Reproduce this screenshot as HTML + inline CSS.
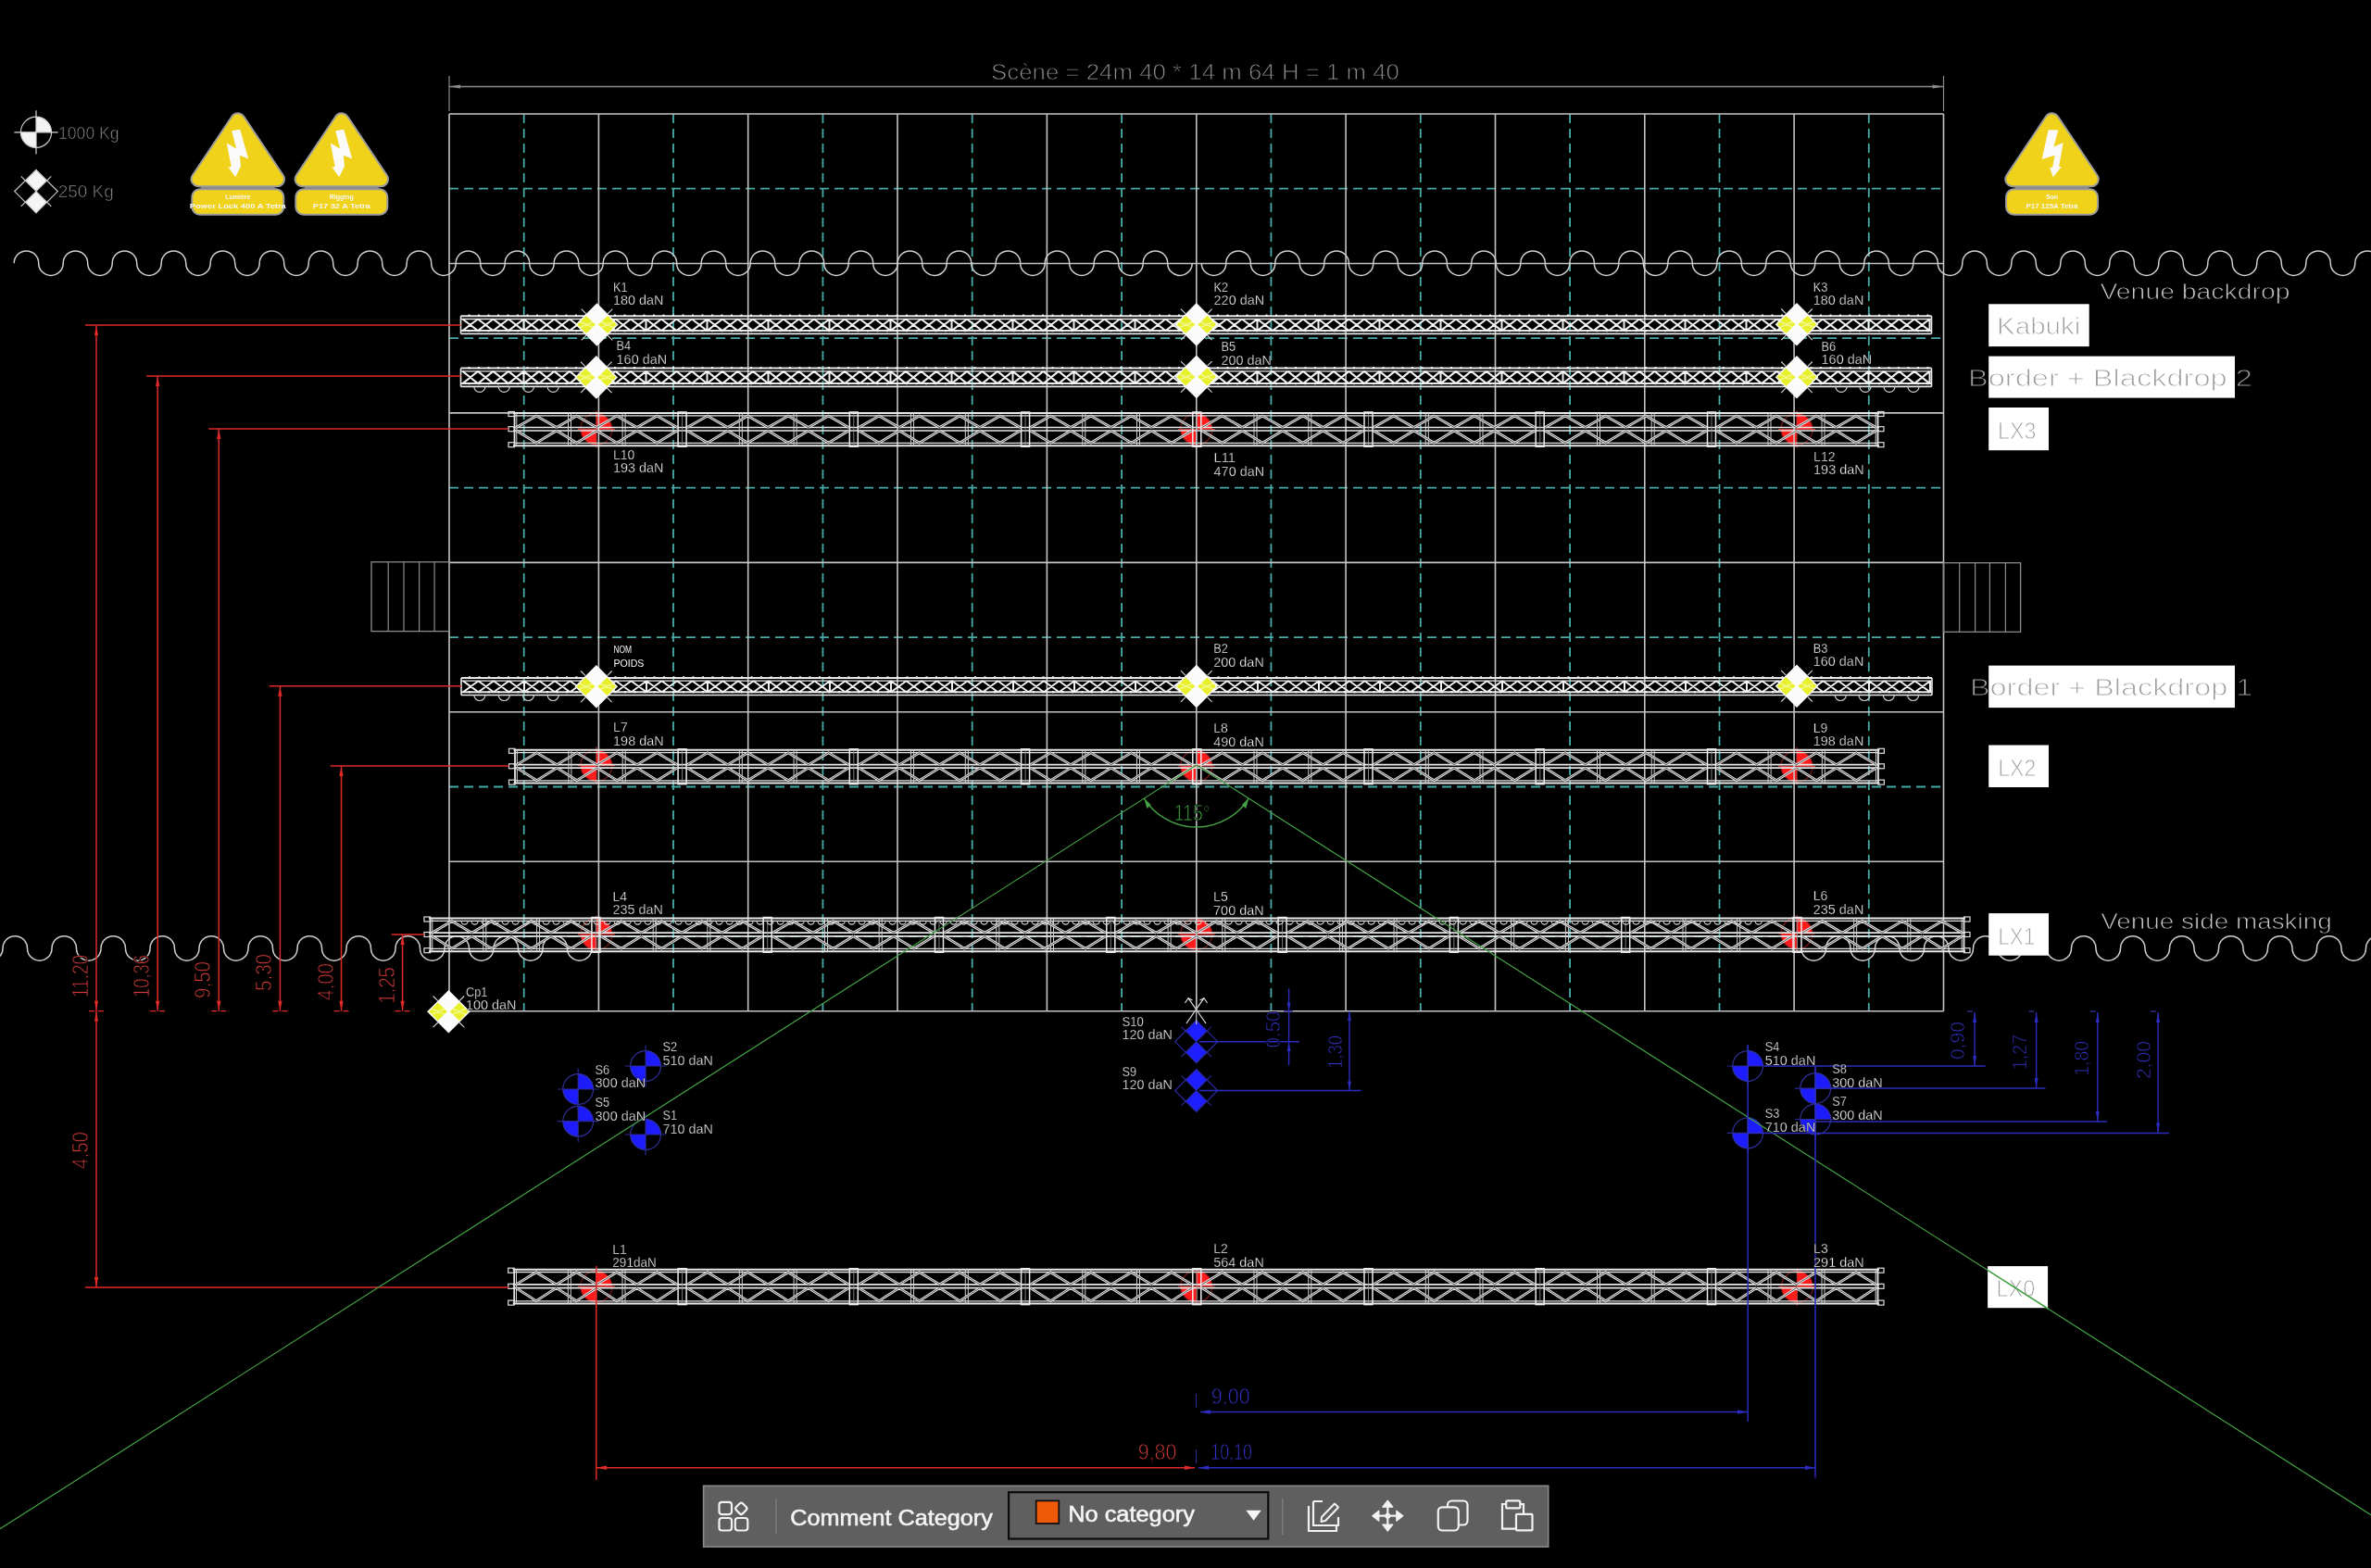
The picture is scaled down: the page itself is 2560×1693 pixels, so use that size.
<!DOCTYPE html>
<html><head><meta charset="utf-8"><title>Rigging plot</title>
<style>
html,body{margin:0;padding:0;background:#000;width:2560px;height:1693px;overflow:hidden}
svg{display:block;position:absolute;left:0;top:0;will-change:transform}
text{font-family:"Liberation Sans",sans-serif}
</style></head>
<body>
<svg width="2560" height="1693" viewBox="0 0 2560 1693">
<defs><clipPath id="ci1"><rect x="2147.2" y="384.6" width="265.8" height="45"/></clipPath><clipPath id="cl1"><rect x="0" y="364.6" width="2147.2" height="85"/><rect x="2413" y="364.6" width="400" height="85"/></clipPath><clipPath id="ci3"><rect x="2147.2" y="718.6" width="265.8" height="45.5"/></clipPath><clipPath id="cl3"><rect x="0" y="698.6" width="2147.2" height="85.5"/><rect x="2413" y="698.6" width="400" height="85.5"/></clipPath></defs>
<rect width="2560" height="1693" fill="#000"/>
<path d="M39,142.8 L39,126.2 A16.6,16.6 0 0 1 55.6,142.8 Z" stroke="none" stroke-width="0" fill="#f2f2f2"/>
<path d="M39,142.8 L39,159.3 A16.6,16.6 0 0 1 22.4,142.8 Z" stroke="none" stroke-width="0" fill="#f2f2f2"/>
<circle cx="39" cy="142.8" r="16.6" fill="none" stroke="#d0d0d0" stroke-width="1.2"/>
<line x1="15.4" y1="142.8" x2="62.6" y2="142.8" stroke="#d8d8d8" stroke-width="1.2"/>
<line x1="39" y1="119.2" x2="39" y2="166.3" stroke="#d8d8d8" stroke-width="1.2"/>
<polygon points="39,183.3 50.6,194.9 39,206.6 27.4,194.9" fill="#f4f4f4" stroke="none" stroke-width="0"/>
<polygon points="39,229.9 50.6,218.2 39,206.6 27.4,218.2" fill="#f4f4f4" stroke="none" stroke-width="0"/>
<polygon points="15.7,206.6 27.4,194.9 39,206.6 27.4,218.2" fill="#000" stroke="none" stroke-width="0"/>
<polygon points="62.3,206.6 50.6,194.9 39,206.6 50.6,218.2" fill="#000" stroke="none" stroke-width="0"/>
<polygon points="39,183.3 62.3,206.6 39,229.9 15.7,206.6" fill="none" stroke="#c8c8c8" stroke-width="1.2"/>
<line x1="22.7" y1="190.3" x2="55.3" y2="222.9" stroke="#cfcfcf" stroke-width="1.1"/>
<line x1="22.7" y1="222.9" x2="55.3" y2="190.3" stroke="#cfcfcf" stroke-width="1.1"/>
<text x="63" y="149.8" font-size="18" fill="#8a8a8a" text-anchor="start" font-family="Liberation Sans" textLength="65.6" lengthAdjust="spacingAndGlyphs" stroke="#000" stroke-width="0.6">1000 Kg</text>
<text x="62.7" y="212.8" font-size="18" fill="#8a8a8a" text-anchor="start" font-family="Liberation Sans" textLength="60.1" lengthAdjust="spacingAndGlyphs" stroke="#000" stroke-width="0.6">250 Kg</text>
<path d="M643.9,463.4 L643.9,446.4 A17,17 0 0 1 660.9,463.4 Z" stroke="none" stroke-width="0" fill="#ff1c1c"/>
<path d="M643.9,463.4 L643.9,480.4 A17,17 0 0 1 626.9,463.4 Z" stroke="none" stroke-width="0" fill="#ff1c1c"/>
<circle cx="643.9" cy="463.4" r="17" fill="none" stroke="#7a1818" stroke-width="1.2"/>
<line x1="623.9" y1="463.4" x2="663.9" y2="463.4" stroke="#c03030" stroke-width="1.2"/>
<line x1="643.9" y1="443.4" x2="643.9" y2="483.4" stroke="#c03030" stroke-width="1.2"/>
<path d="M1291.8,463.5 L1291.8,446.5 A17,17 0 0 1 1308.8,463.5 Z" stroke="none" stroke-width="0" fill="#ff1c1c"/>
<path d="M1291.8,463.5 L1291.8,480.5 A17,17 0 0 1 1274.8,463.5 Z" stroke="none" stroke-width="0" fill="#ff1c1c"/>
<circle cx="1291.8" cy="463.5" r="17" fill="none" stroke="#7a1818" stroke-width="1.2"/>
<line x1="1271.8" y1="463.5" x2="1311.8" y2="463.5" stroke="#c03030" stroke-width="1.2"/>
<line x1="1291.8" y1="443.5" x2="1291.8" y2="483.5" stroke="#c03030" stroke-width="1.2"/>
<path d="M1940,463.5 L1940,446.5 A17,17 0 0 1 1957,463.5 Z" stroke="none" stroke-width="0" fill="#ff1c1c"/>
<path d="M1940,463.5 L1940,480.5 A17,17 0 0 1 1923,463.5 Z" stroke="none" stroke-width="0" fill="#ff1c1c"/>
<circle cx="1940" cy="463.5" r="17" fill="none" stroke="#7a1818" stroke-width="1.2"/>
<line x1="1920" y1="463.5" x2="1960" y2="463.5" stroke="#c03030" stroke-width="1.2"/>
<line x1="1940" y1="443.5" x2="1940" y2="483.5" stroke="#c03030" stroke-width="1.2"/>
<path d="M643.9,826.6 L643.9,809.6 A17,17 0 0 1 660.9,826.6 Z" stroke="none" stroke-width="0" fill="#ff1c1c"/>
<path d="M643.9,826.6 L643.9,843.6 A17,17 0 0 1 626.9,826.6 Z" stroke="none" stroke-width="0" fill="#ff1c1c"/>
<circle cx="643.9" cy="826.6" r="17" fill="none" stroke="#7a1818" stroke-width="1.2"/>
<line x1="623.9" y1="826.6" x2="663.9" y2="826.6" stroke="#c03030" stroke-width="1.2"/>
<line x1="643.9" y1="806.6" x2="643.9" y2="846.6" stroke="#c03030" stroke-width="1.2"/>
<path d="M1291.8,827 L1291.8,810 A17,17 0 0 1 1308.8,827 Z" stroke="none" stroke-width="0" fill="#ff1c1c"/>
<path d="M1291.8,827 L1291.8,844 A17,17 0 0 1 1274.8,827 Z" stroke="none" stroke-width="0" fill="#ff1c1c"/>
<circle cx="1291.8" cy="827" r="17" fill="none" stroke="#7a1818" stroke-width="1.2"/>
<line x1="1271.8" y1="827" x2="1311.8" y2="827" stroke="#c03030" stroke-width="1.2"/>
<line x1="1291.8" y1="807" x2="1291.8" y2="847" stroke="#c03030" stroke-width="1.2"/>
<path d="M1940,827.3 L1940,810.3 A17,17 0 0 1 1957,827.3 Z" stroke="none" stroke-width="0" fill="#ff1c1c"/>
<path d="M1940,827.3 L1940,844.3 A17,17 0 0 1 1923,827.3 Z" stroke="none" stroke-width="0" fill="#ff1c1c"/>
<circle cx="1940" cy="827.3" r="17" fill="none" stroke="#7a1818" stroke-width="1.2"/>
<line x1="1920" y1="827.3" x2="1960" y2="827.3" stroke="#c03030" stroke-width="1.2"/>
<line x1="1940" y1="807.3" x2="1940" y2="847.3" stroke="#c03030" stroke-width="1.2"/>
<path d="M643.9,1008.8 L643.9,991.8 A17,17 0 0 1 660.9,1008.8 Z" stroke="none" stroke-width="0" fill="#ff1c1c"/>
<path d="M643.9,1008.8 L643.9,1025.8 A17,17 0 0 1 626.9,1008.8 Z" stroke="none" stroke-width="0" fill="#ff1c1c"/>
<circle cx="643.9" cy="1008.8" r="17" fill="none" stroke="#7a1818" stroke-width="1.2"/>
<line x1="623.9" y1="1008.8" x2="663.9" y2="1008.8" stroke="#c03030" stroke-width="1.2"/>
<line x1="643.9" y1="988.8" x2="643.9" y2="1028.8" stroke="#c03030" stroke-width="1.2"/>
<path d="M1291.7,1008.8 L1291.7,991.8 A17,17 0 0 1 1308.7,1008.8 Z" stroke="none" stroke-width="0" fill="#ff1c1c"/>
<path d="M1291.7,1008.8 L1291.7,1025.8 A17,17 0 0 1 1274.7,1008.8 Z" stroke="none" stroke-width="0" fill="#ff1c1c"/>
<circle cx="1291.7" cy="1008.8" r="17" fill="none" stroke="#7a1818" stroke-width="1.2"/>
<line x1="1271.7" y1="1008.8" x2="1311.7" y2="1008.8" stroke="#c03030" stroke-width="1.2"/>
<line x1="1291.7" y1="988.8" x2="1291.7" y2="1028.8" stroke="#c03030" stroke-width="1.2"/>
<path d="M1940,1008 L1940,991 A17,17 0 0 1 1957,1008 Z" stroke="none" stroke-width="0" fill="#ff1c1c"/>
<path d="M1940,1008 L1940,1025 A17,17 0 0 1 1923,1008 Z" stroke="none" stroke-width="0" fill="#ff1c1c"/>
<circle cx="1940" cy="1008" r="17" fill="none" stroke="#7a1818" stroke-width="1.2"/>
<line x1="1920" y1="1008" x2="1960" y2="1008" stroke="#c03030" stroke-width="1.2"/>
<line x1="1940" y1="988" x2="1940" y2="1028" stroke="#c03030" stroke-width="1.2"/>
<path d="M643.8,1389.2 L643.8,1372.2 A17,17 0 0 1 660.8,1389.2 Z" stroke="none" stroke-width="0" fill="#ff1c1c"/>
<path d="M643.8,1389.2 L643.8,1406.2 A17,17 0 0 1 626.8,1389.2 Z" stroke="none" stroke-width="0" fill="#ff1c1c"/>
<circle cx="643.8" cy="1389.2" r="17" fill="none" stroke="#7a1818" stroke-width="1.2"/>
<line x1="623.8" y1="1389.2" x2="663.8" y2="1389.2" stroke="#c03030" stroke-width="1.2"/>
<line x1="643.8" y1="1369.2" x2="643.8" y2="1409.2" stroke="#c03030" stroke-width="1.2"/>
<path d="M1291.8,1389 L1291.8,1372 A17,17 0 0 1 1308.8,1389 Z" stroke="none" stroke-width="0" fill="#ff1c1c"/>
<path d="M1291.8,1389 L1291.8,1406 A17,17 0 0 1 1274.8,1389 Z" stroke="none" stroke-width="0" fill="#ff1c1c"/>
<circle cx="1291.8" cy="1389" r="17" fill="none" stroke="#7a1818" stroke-width="1.2"/>
<line x1="1271.8" y1="1389" x2="1311.8" y2="1389" stroke="#c03030" stroke-width="1.2"/>
<line x1="1291.8" y1="1369" x2="1291.8" y2="1409" stroke="#c03030" stroke-width="1.2"/>
<path d="M1940.4,1389.4 L1940.4,1372.4 A17,17 0 0 1 1957.4,1389.4 Z" stroke="none" stroke-width="0" fill="#ff1c1c"/>
<path d="M1940.4,1389.4 L1940.4,1406.4 A17,17 0 0 1 1923.4,1389.4 Z" stroke="none" stroke-width="0" fill="#ff1c1c"/>
<circle cx="1940.4" cy="1389.4" r="17" fill="none" stroke="#7a1818" stroke-width="1.2"/>
<line x1="1920.4" y1="1389.4" x2="1960.4" y2="1389.4" stroke="#c03030" stroke-width="1.2"/>
<line x1="1940.4" y1="1369.4" x2="1940.4" y2="1409.4" stroke="#c03030" stroke-width="1.2"/>
<path d="M697.1,1151 L697.1,1134.6 A16.4,16.4 0 0 1 713.5,1151 Z" stroke="none" stroke-width="0" fill="#1c1cff"/>
<path d="M697.1,1151 L697.1,1167.4 A16.4,16.4 0 0 1 680.7,1151 Z" stroke="none" stroke-width="0" fill="#1c1cff"/>
<circle cx="697.1" cy="1151" r="16.4" fill="none" stroke="#30309c" stroke-width="1.2"/>
<line x1="674.7" y1="1151" x2="719.5" y2="1151" stroke="#2a2a96" stroke-width="1.2"/>
<line x1="697.1" y1="1128.6" x2="697.1" y2="1173.4" stroke="#2a2a96" stroke-width="1.2"/>
<path d="M624.2,1176 L624.2,1159.6 A16.4,16.4 0 0 1 640.6,1176 Z" stroke="none" stroke-width="0" fill="#1c1cff"/>
<path d="M624.2,1176 L624.2,1192.4 A16.4,16.4 0 0 1 607.8,1176 Z" stroke="none" stroke-width="0" fill="#1c1cff"/>
<circle cx="624.2" cy="1176" r="16.4" fill="none" stroke="#30309c" stroke-width="1.2"/>
<line x1="601.8" y1="1176" x2="646.6" y2="1176" stroke="#2a2a96" stroke-width="1.2"/>
<line x1="624.2" y1="1153.6" x2="624.2" y2="1198.4" stroke="#2a2a96" stroke-width="1.2"/>
<path d="M624.2,1210.7 L624.2,1194.3 A16.4,16.4 0 0 1 640.6,1210.7 Z" stroke="none" stroke-width="0" fill="#1c1cff"/>
<path d="M624.2,1210.7 L624.2,1227.1 A16.4,16.4 0 0 1 607.8,1210.7 Z" stroke="none" stroke-width="0" fill="#1c1cff"/>
<circle cx="624.2" cy="1210.7" r="16.4" fill="none" stroke="#30309c" stroke-width="1.2"/>
<line x1="601.8" y1="1210.7" x2="646.6" y2="1210.7" stroke="#2a2a96" stroke-width="1.2"/>
<line x1="624.2" y1="1188.3" x2="624.2" y2="1233.1" stroke="#2a2a96" stroke-width="1.2"/>
<path d="M697.1,1225 L697.1,1208.6 A16.4,16.4 0 0 1 713.5,1225 Z" stroke="none" stroke-width="0" fill="#1c1cff"/>
<path d="M697.1,1225 L697.1,1241.4 A16.4,16.4 0 0 1 680.7,1225 Z" stroke="none" stroke-width="0" fill="#1c1cff"/>
<circle cx="697.1" cy="1225" r="16.4" fill="none" stroke="#30309c" stroke-width="1.2"/>
<line x1="674.7" y1="1225" x2="719.5" y2="1225" stroke="#2a2a96" stroke-width="1.2"/>
<line x1="697.1" y1="1202.6" x2="697.1" y2="1247.4" stroke="#2a2a96" stroke-width="1.2"/>
<path d="M1887.1,1151 L1887.1,1134.6 A16.4,16.4 0 0 1 1903.5,1151 Z" stroke="none" stroke-width="0" fill="#1c1cff"/>
<path d="M1887.1,1151 L1887.1,1167.4 A16.4,16.4 0 0 1 1870.7,1151 Z" stroke="none" stroke-width="0" fill="#1c1cff"/>
<circle cx="1887.1" cy="1151" r="16.4" fill="none" stroke="#30309c" stroke-width="1.2"/>
<line x1="1864.7" y1="1151" x2="1909.5" y2="1151" stroke="#2a2a96" stroke-width="1.2"/>
<line x1="1887.1" y1="1128.6" x2="1887.1" y2="1173.4" stroke="#2a2a96" stroke-width="1.2"/>
<path d="M1960.2,1175.1 L1960.2,1158.7 A16.4,16.4 0 0 1 1976.6,1175.1 Z" stroke="none" stroke-width="0" fill="#1c1cff"/>
<path d="M1960.2,1175.1 L1960.2,1191.5 A16.4,16.4 0 0 1 1943.8,1175.1 Z" stroke="none" stroke-width="0" fill="#1c1cff"/>
<circle cx="1960.2" cy="1175.1" r="16.4" fill="none" stroke="#30309c" stroke-width="1.2"/>
<line x1="1937.8" y1="1175.1" x2="1982.6" y2="1175.1" stroke="#2a2a96" stroke-width="1.2"/>
<line x1="1960.2" y1="1152.7" x2="1960.2" y2="1197.5" stroke="#2a2a96" stroke-width="1.2"/>
<path d="M1960.2,1208.5 L1960.2,1192.1 A16.4,16.4 0 0 1 1976.6,1208.5 Z" stroke="none" stroke-width="0" fill="#1c1cff"/>
<path d="M1960.2,1208.5 L1960.2,1224.9 A16.4,16.4 0 0 1 1943.8,1208.5 Z" stroke="none" stroke-width="0" fill="#1c1cff"/>
<circle cx="1960.2" cy="1208.5" r="16.4" fill="none" stroke="#30309c" stroke-width="1.2"/>
<line x1="1937.8" y1="1208.5" x2="1982.6" y2="1208.5" stroke="#2a2a96" stroke-width="1.2"/>
<line x1="1960.2" y1="1186.1" x2="1960.2" y2="1230.9" stroke="#2a2a96" stroke-width="1.2"/>
<path d="M1887.1,1223.4 L1887.1,1207 A16.4,16.4 0 0 1 1903.5,1223.4 Z" stroke="none" stroke-width="0" fill="#1c1cff"/>
<path d="M1887.1,1223.4 L1887.1,1239.8 A16.4,16.4 0 0 1 1870.7,1223.4 Z" stroke="none" stroke-width="0" fill="#1c1cff"/>
<circle cx="1887.1" cy="1223.4" r="16.4" fill="none" stroke="#30309c" stroke-width="1.2"/>
<line x1="1864.7" y1="1223.4" x2="1909.5" y2="1223.4" stroke="#2a2a96" stroke-width="1.2"/>
<line x1="1887.1" y1="1201" x2="1887.1" y2="1245.8" stroke="#2a2a96" stroke-width="1.2"/>
<polygon points="1291.7,1101.7 1303.2,1113.2 1291.7,1124.7 1280.2,1113.2" fill="#1e1eff" stroke="none" stroke-width="0"/>
<polygon points="1291.7,1147.7 1303.2,1136.2 1291.7,1124.7 1280.2,1136.2" fill="#1e1eff" stroke="none" stroke-width="0"/>
<polygon points="1268.7,1124.7 1280.2,1113.2 1291.7,1124.7 1280.2,1136.2" fill="#000" stroke="none" stroke-width="0"/>
<polygon points="1314.7,1124.7 1303.2,1113.2 1291.7,1124.7 1303.2,1136.2" fill="#000" stroke="none" stroke-width="0"/>
<polygon points="1291.7,1101.7 1314.7,1124.7 1291.7,1147.7 1268.7,1124.7" fill="none" stroke="#2a2aa0" stroke-width="1.2"/>
<line x1="1275.6" y1="1108.6" x2="1307.8" y2="1140.8" stroke="#2a2aa0" stroke-width="1.1"/>
<line x1="1275.6" y1="1140.8" x2="1307.8" y2="1108.6" stroke="#2a2aa0" stroke-width="1.1"/>
<polygon points="1291.7,1154.5 1303.2,1166 1291.7,1177.5 1280.2,1166" fill="#1e1eff" stroke="none" stroke-width="0"/>
<polygon points="1291.7,1200.5 1303.2,1189 1291.7,1177.5 1280.2,1189" fill="#1e1eff" stroke="none" stroke-width="0"/>
<polygon points="1268.7,1177.5 1280.2,1166 1291.7,1177.5 1280.2,1189" fill="#000" stroke="none" stroke-width="0"/>
<polygon points="1314.7,1177.5 1303.2,1166 1291.7,1177.5 1303.2,1189" fill="#000" stroke="none" stroke-width="0"/>
<polygon points="1291.7,1154.5 1314.7,1177.5 1291.7,1200.5 1268.7,1177.5" fill="none" stroke="#2a2aa0" stroke-width="1.2"/>
<line x1="1275.6" y1="1161.4" x2="1307.8" y2="1193.6" stroke="#2a2aa0" stroke-width="1.1"/>
<line x1="1275.6" y1="1193.6" x2="1307.8" y2="1161.4" stroke="#2a2aa0" stroke-width="1.1"/>
<line x1="1281" y1="1105" x2="1300" y2="1077.7" stroke="#e0e0e0" stroke-width="1.2"/>
<line x1="1302" y1="1105" x2="1283" y2="1077.7" stroke="#e0e0e0" stroke-width="1.2"/>
<path d="M1295.5,1080 L1300,1077.7 L1303.5,1083 M1279.5,1083 L1283,1077.7 L1287.5,1080" stroke="#e0e0e0" stroke-width="1.1" fill="none"/>
<line x1="565.7" y1="123" x2="565.7" y2="1091.7" stroke="#47aaa6" stroke-width="1.8" stroke-dasharray="10 6"/>
<line x1="727" y1="123" x2="727" y2="1091.7" stroke="#47aaa6" stroke-width="1.8" stroke-dasharray="10 6"/>
<line x1="888.4" y1="123" x2="888.4" y2="1091.7" stroke="#47aaa6" stroke-width="1.8" stroke-dasharray="10 6"/>
<line x1="1049.7" y1="123" x2="1049.7" y2="1091.7" stroke="#47aaa6" stroke-width="1.8" stroke-dasharray="10 6"/>
<line x1="1211.1" y1="123" x2="1211.1" y2="1091.7" stroke="#47aaa6" stroke-width="1.8" stroke-dasharray="10 6"/>
<line x1="1372.4" y1="123" x2="1372.4" y2="1091.7" stroke="#47aaa6" stroke-width="1.8" stroke-dasharray="10 6"/>
<line x1="1533.8" y1="123" x2="1533.8" y2="1091.7" stroke="#47aaa6" stroke-width="1.8" stroke-dasharray="10 6"/>
<line x1="1695.1" y1="123" x2="1695.1" y2="1091.7" stroke="#47aaa6" stroke-width="1.8" stroke-dasharray="10 6"/>
<line x1="1856.5" y1="123" x2="1856.5" y2="1091.7" stroke="#47aaa6" stroke-width="1.8" stroke-dasharray="10 6"/>
<line x1="2017.8" y1="123" x2="2017.8" y2="1091.7" stroke="#47aaa6" stroke-width="1.8" stroke-dasharray="10 6"/>
<line x1="485" y1="203.7" x2="2098.5" y2="203.7" stroke="#47aaa6" stroke-width="1.8" stroke-dasharray="10 6"/>
<line x1="485" y1="365.2" x2="2098.5" y2="365.2" stroke="#47aaa6" stroke-width="1.8" stroke-dasharray="10 6"/>
<line x1="485" y1="526.6" x2="2098.5" y2="526.6" stroke="#47aaa6" stroke-width="1.8" stroke-dasharray="10 6"/>
<line x1="485" y1="688.1" x2="2098.5" y2="688.1" stroke="#47aaa6" stroke-width="1.8" stroke-dasharray="10 6"/>
<line x1="485" y1="849.5" x2="2098.5" y2="849.5" stroke="#47aaa6" stroke-width="1.8" stroke-dasharray="10 6"/>
<line x1="485" y1="1011" x2="2098.5" y2="1011" stroke="#47aaa6" stroke-width="1.8" stroke-dasharray="10 6"/>
<line x1="485" y1="123" x2="485" y2="1091.7" stroke="#c4c4c4" stroke-width="1.6"/>
<line x1="646.4" y1="123" x2="646.4" y2="1091.7" stroke="#c4c4c4" stroke-width="1.6"/>
<line x1="807.7" y1="123" x2="807.7" y2="1091.7" stroke="#c4c4c4" stroke-width="1.6"/>
<line x1="969" y1="123" x2="969" y2="1091.7" stroke="#c4c4c4" stroke-width="1.6"/>
<line x1="1130.4" y1="123" x2="1130.4" y2="1091.7" stroke="#c4c4c4" stroke-width="1.6"/>
<line x1="1291.8" y1="123" x2="1291.8" y2="1091.7" stroke="#c4c4c4" stroke-width="1.6"/>
<line x1="1453.1" y1="123" x2="1453.1" y2="1091.7" stroke="#c4c4c4" stroke-width="1.6"/>
<line x1="1614.5" y1="123" x2="1614.5" y2="1091.7" stroke="#c4c4c4" stroke-width="1.6"/>
<line x1="1775.8" y1="123" x2="1775.8" y2="1091.7" stroke="#c4c4c4" stroke-width="1.6"/>
<line x1="1937.1" y1="123" x2="1937.1" y2="1091.7" stroke="#c4c4c4" stroke-width="1.6"/>
<line x1="2098.5" y1="123" x2="2098.5" y2="1091.7" stroke="#c4c4c4" stroke-width="1.6"/>
<line x1="485" y1="123" x2="2098.5" y2="123" stroke="#c4c4c4" stroke-width="1.6"/>
<line x1="485" y1="284.5" x2="2098.5" y2="284.5" stroke="#c4c4c4" stroke-width="1.6"/>
<line x1="485" y1="445.9" x2="2098.5" y2="445.9" stroke="#c4c4c4" stroke-width="1.6"/>
<line x1="485" y1="607.4" x2="2098.5" y2="607.4" stroke="#c4c4c4" stroke-width="1.6"/>
<line x1="485" y1="768.8" x2="2098.5" y2="768.8" stroke="#c4c4c4" stroke-width="1.6"/>
<line x1="485" y1="930.3" x2="2098.5" y2="930.3" stroke="#c4c4c4" stroke-width="1.6"/>
<line x1="485" y1="1091.7" x2="2098.5" y2="1091.7" stroke="#c4c4c4" stroke-width="1.6"/>
<line x1="1291.7" y1="1091.7" x2="1291.7" y2="1106" stroke="#c4c4c4" stroke-width="1.2"/>
<line x1="485" y1="82" x2="485" y2="120" stroke="#8a8a8a" stroke-width="1.2"/>
<line x1="2098.5" y1="82" x2="2098.5" y2="120" stroke="#8a8a8a" stroke-width="1.2"/>
<line x1="485" y1="93.6" x2="2098.5" y2="93.6" stroke="#8a8a8a" stroke-width="1.5"/>
<polygon points="485,93.6 497,91.6 497,95.6" fill="#8a8a8a" stroke="none" stroke-width="0"/>
<polygon points="2098.5,93.6 2086.5,91.6 2086.5,95.6" fill="#8a8a8a" stroke="none" stroke-width="0"/>
<text x="1070" y="86.3" font-size="23.5" fill="#8c8c8c" text-anchor="start" font-family="Liberation Sans" textLength="441" lengthAdjust="spacingAndGlyphs" stroke="#000" stroke-width="0.8">Sc&#232;ne = 24m 40 * 14 m 64 H = 1 m 40</text>
<path d="M15.2,284.2 A13.2,13.2 0 0 1 41.7,284.2 A13.2,13.2 0 0 0 68.2,284.2 A13.2,13.2 0 0 1 94.7,284.2 A13.2,13.2 0 0 0 121.2,284.2 A13.2,13.2 0 0 1 147.7,284.2 A13.2,13.2 0 0 0 174.2,284.2 A13.2,13.2 0 0 1 200.7,284.2 A13.2,13.2 0 0 0 227.2,284.2 A13.2,13.2 0 0 1 253.7,284.2 A13.2,13.2 0 0 0 280.2,284.2 A13.2,13.2 0 0 1 306.7,284.2 A13.2,13.2 0 0 0 333.2,284.2 A13.2,13.2 0 0 1 359.7,284.2 A13.2,13.2 0 0 0 386.2,284.2 A13.2,13.2 0 0 1 412.7,284.2 A13.2,13.2 0 0 0 439.2,284.2 A13.2,13.2 0 0 1 465.7,284.2 A13.2,13.2 0 0 0 492.2,284.2 A13.2,13.2 0 0 1 518.7,284.2 A13.2,13.2 0 0 0 545.2,284.2 A13.2,13.2 0 0 1 571.7,284.2 A13.2,13.2 0 0 0 598.2,284.2 A13.2,13.2 0 0 1 624.7,284.2 A13.2,13.2 0 0 0 651.2,284.2 A13.2,13.2 0 0 1 677.7,284.2 A13.2,13.2 0 0 0 704.2,284.2 A13.2,13.2 0 0 1 730.7,284.2 A13.2,13.2 0 0 0 757.2,284.2 A13.2,13.2 0 0 1 783.7,284.2 A13.2,13.2 0 0 0 810.2,284.2 A13.2,13.2 0 0 1 836.7,284.2 A13.2,13.2 0 0 0 863.2,284.2 A13.2,13.2 0 0 1 889.7,284.2 A13.2,13.2 0 0 0 916.2,284.2 A13.2,13.2 0 0 1 942.7,284.2 A13.2,13.2 0 0 0 969.2,284.2 A13.2,13.2 0 0 1 995.7,284.2 A13.2,13.2 0 0 0 1022.2,284.2 A13.2,13.2 0 0 1 1048.7,284.2 A13.2,13.2 0 0 0 1075.2,284.2 A13.2,13.2 0 0 1 1101.7,284.2 A13.2,13.2 0 0 0 1128.2,284.2 A13.2,13.2 0 0 1 1154.7,284.2 A13.2,13.2 0 0 0 1181.2,284.2 A13.2,13.2 0 0 1 1207.7,284.2 A13.2,13.2 0 0 0 1234.2,284.2 A13.2,13.2 0 0 1 1260.7,284.2 A13.2,13.2 0 0 0 1287.2,284.2" stroke="#cfcfcf" stroke-width="1.5" fill="none"/>
<path d="M1297.3,284.2 A13.2,13.2 0 0 0 1323.8,284.2 A13.2,13.2 0 0 1 1350.3,284.2 A13.2,13.2 0 0 0 1376.8,284.2 A13.2,13.2 0 0 1 1403.3,284.2 A13.2,13.2 0 0 0 1429.8,284.2 A13.2,13.2 0 0 1 1456.3,284.2 A13.2,13.2 0 0 0 1482.8,284.2 A13.2,13.2 0 0 1 1509.3,284.2 A13.2,13.2 0 0 0 1535.8,284.2 A13.2,13.2 0 0 1 1562.3,284.2 A13.2,13.2 0 0 0 1588.8,284.2 A13.2,13.2 0 0 1 1615.3,284.2 A13.2,13.2 0 0 0 1641.8,284.2 A13.2,13.2 0 0 1 1668.3,284.2 A13.2,13.2 0 0 0 1694.8,284.2 A13.2,13.2 0 0 1 1721.3,284.2 A13.2,13.2 0 0 0 1747.8,284.2 A13.2,13.2 0 0 1 1774.3,284.2 A13.2,13.2 0 0 0 1800.8,284.2 A13.2,13.2 0 0 1 1827.3,284.2 A13.2,13.2 0 0 0 1853.8,284.2 A13.2,13.2 0 0 1 1880.3,284.2 A13.2,13.2 0 0 0 1906.8,284.2 A13.2,13.2 0 0 1 1933.3,284.2 A13.2,13.2 0 0 0 1959.8,284.2 A13.2,13.2 0 0 1 1986.3,284.2 A13.2,13.2 0 0 0 2012.8,284.2 A13.2,13.2 0 0 1 2039.3,284.2 A13.2,13.2 0 0 0 2065.8,284.2 A13.2,13.2 0 0 1 2092.3,284.2 A13.2,13.2 0 0 0 2118.8,284.2 A13.2,13.2 0 0 1 2145.3,284.2 A13.2,13.2 0 0 0 2171.8,284.2 A13.2,13.2 0 0 1 2198.3,284.2 A13.2,13.2 0 0 0 2224.8,284.2 A13.2,13.2 0 0 1 2251.3,284.2 A13.2,13.2 0 0 0 2277.8,284.2 A13.2,13.2 0 0 1 2304.3,284.2 A13.2,13.2 0 0 0 2330.8,284.2 A13.2,13.2 0 0 1 2357.3,284.2 A13.2,13.2 0 0 0 2383.8,284.2 A13.2,13.2 0 0 1 2410.3,284.2 A13.2,13.2 0 0 0 2436.8,284.2 A13.2,13.2 0 0 1 2463.3,284.2 A13.2,13.2 0 0 0 2489.8,284.2 A13.2,13.2 0 0 1 2516.3,284.2 A13.2,13.2 0 0 0 2542.8,284.2 A13.2,13.2 0 0 1 2569.3,284.2 A13.2,13.2 0 0 0 2595.8,284.2" stroke="#cfcfcf" stroke-width="1.5" fill="none"/>
<path d="M-23.5,1023.9 A13.2,13.2 0 0 0 3,1023.9 A13.2,13.2 0 0 1 29.5,1023.9 A13.2,13.2 0 0 0 56,1023.9 A13.2,13.2 0 0 1 82.5,1023.9 A13.2,13.2 0 0 0 109,1023.9 A13.2,13.2 0 0 1 135.5,1023.9 A13.2,13.2 0 0 0 162,1023.9 A13.2,13.2 0 0 1 188.5,1023.9 A13.2,13.2 0 0 0 215,1023.9 A13.2,13.2 0 0 1 241.5,1023.9 A13.2,13.2 0 0 0 268,1023.9 A13.2,13.2 0 0 1 294.5,1023.9 A13.2,13.2 0 0 0 321,1023.9 A13.2,13.2 0 0 1 347.5,1023.9 A13.2,13.2 0 0 0 374,1023.9 A13.2,13.2 0 0 1 400.5,1023.9 A13.2,13.2 0 0 0 427,1023.9 A13.2,13.2 0 0 1 453.5,1023.9 A13.2,13.2 0 0 0 480,1023.9 A13.2,13.2 0 0 1 506.5,1023.9 A13.2,13.2 0 0 0 533,1023.9 A13.2,13.2 0 0 1 559.5,1023.9 A13.2,13.2 0 0 0 586,1023.9 A13.2,13.2 0 0 1 612.5,1023.9 A13.2,13.2 0 0 0 639,1023.9" stroke="#cfcfcf" stroke-width="1.5" fill="none"/>
<path d="M1945,1023.9 A13.2,13.2 0 0 0 1971.5,1023.9 A13.2,13.2 0 0 1 1998,1023.9 A13.2,13.2 0 0 0 2024.5,1023.9 A13.2,13.2 0 0 1 2051,1023.9 A13.2,13.2 0 0 0 2077.5,1023.9 A13.2,13.2 0 0 1 2104,1023.9 A13.2,13.2 0 0 0 2130.5,1023.9 A13.2,13.2 0 0 1 2157,1023.9 A13.2,13.2 0 0 0 2183.5,1023.9 A13.2,13.2 0 0 1 2210,1023.9 A13.2,13.2 0 0 0 2236.5,1023.9 A13.2,13.2 0 0 1 2263,1023.9 A13.2,13.2 0 0 0 2289.5,1023.9 A13.2,13.2 0 0 1 2316,1023.9 A13.2,13.2 0 0 0 2342.5,1023.9 A13.2,13.2 0 0 1 2369,1023.9 A13.2,13.2 0 0 0 2395.5,1023.9 A13.2,13.2 0 0 1 2422,1023.9 A13.2,13.2 0 0 0 2448.5,1023.9 A13.2,13.2 0 0 1 2475,1023.9 A13.2,13.2 0 0 0 2501.5,1023.9 A13.2,13.2 0 0 1 2528,1023.9 A13.2,13.2 0 0 0 2554.5,1023.9 A13.2,13.2 0 0 1 2581,1023.9" stroke="#cfcfcf" stroke-width="1.5" fill="none"/>
<rect x="401" y="606.8" width="84" height="74.8" fill="none" stroke="#8a8a8a" stroke-width="1.3"/>
<line x1="419.2" y1="606.8" x2="419.2" y2="681.6" stroke="#8a8a8a" stroke-width="1.2"/>
<line x1="436" y1="606.8" x2="436" y2="681.6" stroke="#8a8a8a" stroke-width="1.2"/>
<line x1="452.6" y1="606.8" x2="452.6" y2="681.6" stroke="#8a8a8a" stroke-width="1.2"/>
<line x1="469.1" y1="606.8" x2="469.1" y2="681.6" stroke="#8a8a8a" stroke-width="1.2"/>
<rect x="2098.5" y="607.7" width="83.1" height="74.6" fill="none" stroke="#8a8a8a" stroke-width="1.3"/>
<line x1="2115.7" y1="607.7" x2="2115.7" y2="682.3" stroke="#8a8a8a" stroke-width="1.2"/>
<line x1="2132.6" y1="607.7" x2="2132.6" y2="682.3" stroke="#8a8a8a" stroke-width="1.2"/>
<line x1="2148.4" y1="607.7" x2="2148.4" y2="682.3" stroke="#8a8a8a" stroke-width="1.2"/>
<line x1="2165.4" y1="607.7" x2="2165.4" y2="682.3" stroke="#8a8a8a" stroke-width="1.2"/>
<line x1="497.5" y1="341.2" x2="2085.5" y2="341.2" stroke="#e8e8e8" stroke-width="2"/>
<line x1="497.5" y1="344.5" x2="2085.5" y2="344.5" stroke="#e8e8e8" stroke-width="1.3"/>
<line x1="497.5" y1="357.1" x2="2085.5" y2="357.1" stroke="#e8e8e8" stroke-width="2"/>
<line x1="497.5" y1="360.4" x2="2085.5" y2="360.4" stroke="#e8e8e8" stroke-width="1.6"/>
<line x1="497.5" y1="341.2" x2="497.5" y2="360.4" stroke="#e8e8e8" stroke-width="1.6"/>
<line x1="2085.5" y1="341.2" x2="2085.5" y2="360.4" stroke="#e8e8e8" stroke-width="1.6"/>
<path d="M499.5,344.5L516,357.1M499.5,357.1L516,344.5M516,344.5L532.5,357.1M516,357.1L532.5,344.5M532.5,344.5L549,357.1M532.5,357.1L549,344.5M549,344.5L565.5,357.1M549,357.1L565.5,344.5M565.5,344.5L565.5,357.1M565.5,344.5L582,357.1M565.5,357.1L582,344.5M582,344.5L598.5,357.1M582,357.1L598.5,344.5M598.5,344.5L615,357.1M598.5,357.1L615,344.5M615,344.5L631.5,357.1M615,357.1L631.5,344.5M631.5,344.5L631.5,357.1M631.5,344.5L648,357.1M631.5,357.1L648,344.5M648,344.5L664.5,357.1M648,357.1L664.5,344.5M664.5,344.5L681,357.1M664.5,357.1L681,344.5M681,344.5L697.5,357.1M681,357.1L697.5,344.5M697.5,344.5L697.5,357.1M697.5,344.5L714,357.1M697.5,357.1L714,344.5M714,344.5L730.5,357.1M714,357.1L730.5,344.5M730.5,344.5L747,357.1M730.5,357.1L747,344.5M747,344.5L763.5,357.1M747,357.1L763.5,344.5M763.5,344.5L763.5,357.1M763.5,344.5L780,357.1M763.5,357.1L780,344.5M780,344.5L796.5,357.1M780,357.1L796.5,344.5M796.5,344.5L813,357.1M796.5,357.1L813,344.5M813,344.5L829.5,357.1M813,357.1L829.5,344.5M829.5,344.5L829.5,357.1M829.5,344.5L846,357.1M829.5,357.1L846,344.5M846,344.5L862.5,357.1M846,357.1L862.5,344.5M862.5,344.5L879,357.1M862.5,357.1L879,344.5M879,344.5L895.5,357.1M879,357.1L895.5,344.5M895.5,344.5L895.5,357.1M895.5,344.5L912,357.1M895.5,357.1L912,344.5M912,344.5L928.5,357.1M912,357.1L928.5,344.5M928.5,344.5L945,357.1M928.5,357.1L945,344.5M945,344.5L961.5,357.1M945,357.1L961.5,344.5M961.5,344.5L961.5,357.1M961.5,344.5L978,357.1M961.5,357.1L978,344.5M978,344.5L994.5,357.1M978,357.1L994.5,344.5M994.5,344.5L1011,357.1M994.5,357.1L1011,344.5M1011,344.5L1027.5,357.1M1011,357.1L1027.5,344.5M1027.5,344.5L1027.5,357.1M1027.5,344.5L1044,357.1M1027.5,357.1L1044,344.5M1044,344.5L1060.5,357.1M1044,357.1L1060.5,344.5M1060.5,344.5L1077,357.1M1060.5,357.1L1077,344.5M1077,344.5L1093.5,357.1M1077,357.1L1093.5,344.5M1093.5,344.5L1093.5,357.1M1093.5,344.5L1110,357.1M1093.5,357.1L1110,344.5M1110,344.5L1126.5,357.1M1110,357.1L1126.5,344.5M1126.5,344.5L1143,357.1M1126.5,357.1L1143,344.5M1143,344.5L1159.5,357.1M1143,357.1L1159.5,344.5M1159.5,344.5L1159.5,357.1M1159.5,344.5L1176,357.1M1159.5,357.1L1176,344.5M1176,344.5L1192.5,357.1M1176,357.1L1192.5,344.5M1192.5,344.5L1209,357.1M1192.5,357.1L1209,344.5M1209,344.5L1225.5,357.1M1209,357.1L1225.5,344.5M1225.5,344.5L1225.5,357.1M1225.5,344.5L1242,357.1M1225.5,357.1L1242,344.5M1242,344.5L1258.5,357.1M1242,357.1L1258.5,344.5M1258.5,344.5L1275,357.1M1258.5,357.1L1275,344.5M1275,344.5L1291.5,357.1M1275,357.1L1291.5,344.5M1291.5,344.5L1291.5,357.1M1291.5,344.5L1308,357.1M1291.5,357.1L1308,344.5M1308,344.5L1324.5,357.1M1308,357.1L1324.5,344.5M1324.5,344.5L1341,357.1M1324.5,357.1L1341,344.5M1341,344.5L1357.5,357.1M1341,357.1L1357.5,344.5M1357.5,344.5L1357.5,357.1M1357.5,344.5L1374,357.1M1357.5,357.1L1374,344.5M1374,344.5L1390.5,357.1M1374,357.1L1390.5,344.5M1390.5,344.5L1407,357.1M1390.5,357.1L1407,344.5M1407,344.5L1423.5,357.1M1407,357.1L1423.5,344.5M1423.5,344.5L1423.5,357.1M1423.5,344.5L1440,357.1M1423.5,357.1L1440,344.5M1440,344.5L1456.5,357.1M1440,357.1L1456.5,344.5M1456.5,344.5L1473,357.1M1456.5,357.1L1473,344.5M1473,344.5L1489.5,357.1M1473,357.1L1489.5,344.5M1489.5,344.5L1489.5,357.1M1489.5,344.5L1506,357.1M1489.5,357.1L1506,344.5M1506,344.5L1522.5,357.1M1506,357.1L1522.5,344.5M1522.5,344.5L1539,357.1M1522.5,357.1L1539,344.5M1539,344.5L1555.5,357.1M1539,357.1L1555.5,344.5M1555.5,344.5L1555.5,357.1M1555.5,344.5L1572,357.1M1555.5,357.1L1572,344.5M1572,344.5L1588.5,357.1M1572,357.1L1588.5,344.5M1588.5,344.5L1605,357.1M1588.5,357.1L1605,344.5M1605,344.5L1621.5,357.1M1605,357.1L1621.5,344.5M1621.5,344.5L1621.5,357.1M1621.5,344.5L1638,357.1M1621.5,357.1L1638,344.5M1638,344.5L1654.5,357.1M1638,357.1L1654.5,344.5M1654.5,344.5L1671,357.1M1654.5,357.1L1671,344.5M1671,344.5L1687.5,357.1M1671,357.1L1687.5,344.5M1687.5,344.5L1687.5,357.1M1687.5,344.5L1704,357.1M1687.5,357.1L1704,344.5M1704,344.5L1720.5,357.1M1704,357.1L1720.5,344.5M1720.5,344.5L1737,357.1M1720.5,357.1L1737,344.5M1737,344.5L1753.5,357.1M1737,357.1L1753.5,344.5M1753.5,344.5L1753.5,357.1M1753.5,344.5L1770,357.1M1753.5,357.1L1770,344.5M1770,344.5L1786.5,357.1M1770,357.1L1786.5,344.5M1786.5,344.5L1803,357.1M1786.5,357.1L1803,344.5M1803,344.5L1819.5,357.1M1803,357.1L1819.5,344.5M1819.5,344.5L1819.5,357.1M1819.5,344.5L1836,357.1M1819.5,357.1L1836,344.5M1836,344.5L1852.5,357.1M1836,357.1L1852.5,344.5M1852.5,344.5L1869,357.1M1852.5,357.1L1869,344.5M1869,344.5L1885.5,357.1M1869,357.1L1885.5,344.5M1885.5,344.5L1885.5,357.1M1885.5,344.5L1902,357.1M1885.5,357.1L1902,344.5M1902,344.5L1918.5,357.1M1902,357.1L1918.5,344.5M1918.5,344.5L1935,357.1M1918.5,357.1L1935,344.5M1935,344.5L1951.5,357.1M1935,357.1L1951.5,344.5M1951.5,344.5L1951.5,357.1M1951.5,344.5L1968,357.1M1951.5,357.1L1968,344.5M1968,344.5L1984.5,357.1M1968,357.1L1984.5,344.5M1984.5,344.5L2001,357.1M1984.5,357.1L2001,344.5M2001,344.5L2017.5,357.1M2001,357.1L2017.5,344.5M2017.5,344.5L2017.5,357.1M2017.5,344.5L2034,357.1M2017.5,357.1L2034,344.5M2034,344.5L2050.5,357.1M2034,357.1L2050.5,344.5M2050.5,344.5L2067,357.1M2050.5,357.1L2067,344.5M2067,344.5L2083.5,357.1M2067,357.1L2083.5,344.5M2083.5,344.5L2083.5,357.1" stroke="#f2f2f2" stroke-width="2" fill="none"/>
<path d="M505.5,340.7h2M505.5,357.1h2M516,340.7h2M516,357.1h2M526.5,340.7h2M526.5,357.1h2M537,340.7h2M537,357.1h2M547.5,340.7h2M547.5,357.1h2M558,340.7h2M558,357.1h2M568.5,340.7h2M568.5,357.1h2M579,340.7h2M579,357.1h2M589.5,340.7h2M589.5,357.1h2M600,340.7h2M600,357.1h2M610.5,340.7h2M610.5,357.1h2M621,340.7h2M621,357.1h2M631.5,340.7h2M631.5,357.1h2M642,340.7h2M642,357.1h2M652.5,340.7h2M652.5,357.1h2M663,340.7h2M663,357.1h2M673.5,340.7h2M673.5,357.1h2M684,340.7h2M684,357.1h2M694.5,340.7h2M694.5,357.1h2M705,340.7h2M705,357.1h2M715.5,340.7h2M715.5,357.1h2M726,340.7h2M726,357.1h2M736.5,340.7h2M736.5,357.1h2M747,340.7h2M747,357.1h2M757.5,340.7h2M757.5,357.1h2M768,340.7h2M768,357.1h2M778.5,340.7h2M778.5,357.1h2M789,340.7h2M789,357.1h2M799.5,340.7h2M799.5,357.1h2M810,340.7h2M810,357.1h2M820.5,340.7h2M820.5,357.1h2M831,340.7h2M831,357.1h2M841.5,340.7h2M841.5,357.1h2M852,340.7h2M852,357.1h2M862.5,340.7h2M862.5,357.1h2M873,340.7h2M873,357.1h2M883.5,340.7h2M883.5,357.1h2M894,340.7h2M894,357.1h2M904.5,340.7h2M904.5,357.1h2M915,340.7h2M915,357.1h2M925.5,340.7h2M925.5,357.1h2M936,340.7h2M936,357.1h2M946.5,340.7h2M946.5,357.1h2M957,340.7h2M957,357.1h2M967.5,340.7h2M967.5,357.1h2M978,340.7h2M978,357.1h2M988.5,340.7h2M988.5,357.1h2M999,340.7h2M999,357.1h2M1009.5,340.7h2M1009.5,357.1h2M1020,340.7h2M1020,357.1h2M1030.5,340.7h2M1030.5,357.1h2M1041,340.7h2M1041,357.1h2M1051.5,340.7h2M1051.5,357.1h2M1062,340.7h2M1062,357.1h2M1072.5,340.7h2M1072.5,357.1h2M1083,340.7h2M1083,357.1h2M1093.5,340.7h2M1093.5,357.1h2M1104,340.7h2M1104,357.1h2M1114.5,340.7h2M1114.5,357.1h2M1125,340.7h2M1125,357.1h2M1135.5,340.7h2M1135.5,357.1h2M1146,340.7h2M1146,357.1h2M1156.5,340.7h2M1156.5,357.1h2M1167,340.7h2M1167,357.1h2M1177.5,340.7h2M1177.5,357.1h2M1188,340.7h2M1188,357.1h2M1198.5,340.7h2M1198.5,357.1h2M1209,340.7h2M1209,357.1h2M1219.5,340.7h2M1219.5,357.1h2M1230,340.7h2M1230,357.1h2M1240.5,340.7h2M1240.5,357.1h2M1251,340.7h2M1251,357.1h2M1261.5,340.7h2M1261.5,357.1h2M1272,340.7h2M1272,357.1h2M1282.5,340.7h2M1282.5,357.1h2M1293,340.7h2M1293,357.1h2M1303.5,340.7h2M1303.5,357.1h2M1314,340.7h2M1314,357.1h2M1324.5,340.7h2M1324.5,357.1h2M1335,340.7h2M1335,357.1h2M1345.5,340.7h2M1345.5,357.1h2M1356,340.7h2M1356,357.1h2M1366.5,340.7h2M1366.5,357.1h2M1377,340.7h2M1377,357.1h2M1387.5,340.7h2M1387.5,357.1h2M1398,340.7h2M1398,357.1h2M1408.5,340.7h2M1408.5,357.1h2M1419,340.7h2M1419,357.1h2M1429.5,340.7h2M1429.5,357.1h2M1440,340.7h2M1440,357.1h2M1450.5,340.7h2M1450.5,357.1h2M1461,340.7h2M1461,357.1h2M1471.5,340.7h2M1471.5,357.1h2M1482,340.7h2M1482,357.1h2M1492.5,340.7h2M1492.5,357.1h2M1503,340.7h2M1503,357.1h2M1513.5,340.7h2M1513.5,357.1h2M1524,340.7h2M1524,357.1h2M1534.5,340.7h2M1534.5,357.1h2M1545,340.7h2M1545,357.1h2M1555.5,340.7h2M1555.5,357.1h2M1566,340.7h2M1566,357.1h2M1576.5,340.7h2M1576.5,357.1h2M1587,340.7h2M1587,357.1h2M1597.5,340.7h2M1597.5,357.1h2M1608,340.7h2M1608,357.1h2M1618.5,340.7h2M1618.5,357.1h2M1629,340.7h2M1629,357.1h2M1639.5,340.7h2M1639.5,357.1h2M1650,340.7h2M1650,357.1h2M1660.5,340.7h2M1660.5,357.1h2M1671,340.7h2M1671,357.1h2M1681.5,340.7h2M1681.5,357.1h2M1692,340.7h2M1692,357.1h2M1702.5,340.7h2M1702.5,357.1h2M1713,340.7h2M1713,357.1h2M1723.5,340.7h2M1723.5,357.1h2M1734,340.7h2M1734,357.1h2M1744.5,340.7h2M1744.5,357.1h2M1755,340.7h2M1755,357.1h2M1765.5,340.7h2M1765.5,357.1h2M1776,340.7h2M1776,357.1h2M1786.5,340.7h2M1786.5,357.1h2M1797,340.7h2M1797,357.1h2M1807.5,340.7h2M1807.5,357.1h2M1818,340.7h2M1818,357.1h2M1828.5,340.7h2M1828.5,357.1h2M1839,340.7h2M1839,357.1h2M1849.5,340.7h2M1849.5,357.1h2M1860,340.7h2M1860,357.1h2M1870.5,340.7h2M1870.5,357.1h2M1881,340.7h2M1881,357.1h2M1891.5,340.7h2M1891.5,357.1h2M1902,340.7h2M1902,357.1h2M1912.5,340.7h2M1912.5,357.1h2M1923,340.7h2M1923,357.1h2M1933.5,340.7h2M1933.5,357.1h2M1944,340.7h2M1944,357.1h2M1954.5,340.7h2M1954.5,357.1h2M1965,340.7h2M1965,357.1h2M1975.5,340.7h2M1975.5,357.1h2M1986,340.7h2M1986,357.1h2M1996.5,340.7h2M1996.5,357.1h2M2007,340.7h2M2007,357.1h2M2017.5,340.7h2M2017.5,357.1h2M2028,340.7h2M2028,357.1h2M2038.5,340.7h2M2038.5,357.1h2M2049,340.7h2M2049,357.1h2M2059.5,340.7h2M2059.5,357.1h2M2070,340.7h2M2070,357.1h2M2080.5,340.7h2M2080.5,357.1h2" stroke="#f4f4f4" stroke-width="2.2" fill="none"/>
<line x1="497.5" y1="397.6" x2="2085.5" y2="397.6" stroke="#e8e8e8" stroke-width="2"/>
<line x1="497.5" y1="400.9" x2="2085.5" y2="400.9" stroke="#e8e8e8" stroke-width="1.3"/>
<line x1="497.5" y1="414.1" x2="2085.5" y2="414.1" stroke="#e8e8e8" stroke-width="2"/>
<line x1="497.5" y1="417.4" x2="2085.5" y2="417.4" stroke="#e8e8e8" stroke-width="1.6"/>
<line x1="497.5" y1="397.6" x2="497.5" y2="417.4" stroke="#e8e8e8" stroke-width="1.6"/>
<line x1="2085.5" y1="397.6" x2="2085.5" y2="417.4" stroke="#e8e8e8" stroke-width="1.6"/>
<path d="M499.5,400.9L516,414.1M499.5,414.1L516,400.9M516,400.9L532.5,414.1M516,414.1L532.5,400.9M532.5,400.9L549,414.1M532.5,414.1L549,400.9M549,400.9L565.5,414.1M549,414.1L565.5,400.9M565.5,400.9L565.5,414.1M565.5,400.9L582,414.1M565.5,414.1L582,400.9M582,400.9L598.5,414.1M582,414.1L598.5,400.9M598.5,400.9L615,414.1M598.5,414.1L615,400.9M615,400.9L631.5,414.1M615,414.1L631.5,400.9M631.5,400.9L631.5,414.1M631.5,400.9L648,414.1M631.5,414.1L648,400.9M648,400.9L664.5,414.1M648,414.1L664.5,400.9M664.5,400.9L681,414.1M664.5,414.1L681,400.9M681,400.9L697.5,414.1M681,414.1L697.5,400.9M697.5,400.9L697.5,414.1M697.5,400.9L714,414.1M697.5,414.1L714,400.9M714,400.9L730.5,414.1M714,414.1L730.5,400.9M730.5,400.9L747,414.1M730.5,414.1L747,400.9M747,400.9L763.5,414.1M747,414.1L763.5,400.9M763.5,400.9L763.5,414.1M763.5,400.9L780,414.1M763.5,414.1L780,400.9M780,400.9L796.5,414.1M780,414.1L796.5,400.9M796.5,400.9L813,414.1M796.5,414.1L813,400.9M813,400.9L829.5,414.1M813,414.1L829.5,400.9M829.5,400.9L829.5,414.1M829.5,400.9L846,414.1M829.5,414.1L846,400.9M846,400.9L862.5,414.1M846,414.1L862.5,400.9M862.5,400.9L879,414.1M862.5,414.1L879,400.9M879,400.9L895.5,414.1M879,414.1L895.5,400.9M895.5,400.9L895.5,414.1M895.5,400.9L912,414.1M895.5,414.1L912,400.9M912,400.9L928.5,414.1M912,414.1L928.5,400.9M928.5,400.9L945,414.1M928.5,414.1L945,400.9M945,400.9L961.5,414.1M945,414.1L961.5,400.9M961.5,400.9L961.5,414.1M961.5,400.9L978,414.1M961.5,414.1L978,400.9M978,400.9L994.5,414.1M978,414.1L994.5,400.9M994.5,400.9L1011,414.1M994.5,414.1L1011,400.9M1011,400.9L1027.5,414.1M1011,414.1L1027.5,400.9M1027.5,400.9L1027.5,414.1M1027.5,400.9L1044,414.1M1027.5,414.1L1044,400.9M1044,400.9L1060.5,414.1M1044,414.1L1060.5,400.9M1060.5,400.9L1077,414.1M1060.5,414.1L1077,400.9M1077,400.9L1093.5,414.1M1077,414.1L1093.5,400.9M1093.5,400.9L1093.5,414.1M1093.5,400.9L1110,414.1M1093.5,414.1L1110,400.9M1110,400.9L1126.5,414.1M1110,414.1L1126.5,400.9M1126.5,400.9L1143,414.1M1126.5,414.1L1143,400.9M1143,400.9L1159.5,414.1M1143,414.1L1159.5,400.9M1159.5,400.9L1159.5,414.1M1159.5,400.9L1176,414.1M1159.5,414.1L1176,400.9M1176,400.9L1192.5,414.1M1176,414.1L1192.5,400.9M1192.5,400.9L1209,414.1M1192.5,414.1L1209,400.9M1209,400.9L1225.5,414.1M1209,414.1L1225.5,400.9M1225.5,400.9L1225.5,414.1M1225.5,400.9L1242,414.1M1225.5,414.1L1242,400.9M1242,400.9L1258.5,414.1M1242,414.1L1258.5,400.9M1258.5,400.9L1275,414.1M1258.5,414.1L1275,400.9M1275,400.9L1291.5,414.1M1275,414.1L1291.5,400.9M1291.5,400.9L1291.5,414.1M1291.5,400.9L1308,414.1M1291.5,414.1L1308,400.9M1308,400.9L1324.5,414.1M1308,414.1L1324.5,400.9M1324.5,400.9L1341,414.1M1324.5,414.1L1341,400.9M1341,400.9L1357.5,414.1M1341,414.1L1357.5,400.9M1357.5,400.9L1357.5,414.1M1357.5,400.9L1374,414.1M1357.5,414.1L1374,400.9M1374,400.9L1390.5,414.1M1374,414.1L1390.5,400.9M1390.5,400.9L1407,414.1M1390.5,414.1L1407,400.9M1407,400.9L1423.5,414.1M1407,414.1L1423.5,400.9M1423.5,400.9L1423.5,414.1M1423.5,400.9L1440,414.1M1423.5,414.1L1440,400.9M1440,400.9L1456.5,414.1M1440,414.1L1456.5,400.9M1456.5,400.9L1473,414.1M1456.5,414.1L1473,400.9M1473,400.9L1489.5,414.1M1473,414.1L1489.5,400.9M1489.5,400.9L1489.5,414.1M1489.5,400.9L1506,414.1M1489.5,414.1L1506,400.9M1506,400.9L1522.5,414.1M1506,414.1L1522.5,400.9M1522.5,400.9L1539,414.1M1522.5,414.1L1539,400.9M1539,400.9L1555.5,414.1M1539,414.1L1555.5,400.9M1555.5,400.9L1555.5,414.1M1555.5,400.9L1572,414.1M1555.5,414.1L1572,400.9M1572,400.9L1588.5,414.1M1572,414.1L1588.5,400.9M1588.5,400.9L1605,414.1M1588.5,414.1L1605,400.9M1605,400.9L1621.5,414.1M1605,414.1L1621.5,400.9M1621.5,400.9L1621.5,414.1M1621.5,400.9L1638,414.1M1621.5,414.1L1638,400.9M1638,400.9L1654.5,414.1M1638,414.1L1654.5,400.9M1654.5,400.9L1671,414.1M1654.5,414.1L1671,400.9M1671,400.9L1687.5,414.1M1671,414.1L1687.5,400.9M1687.5,400.9L1687.5,414.1M1687.5,400.9L1704,414.1M1687.5,414.1L1704,400.9M1704,400.9L1720.5,414.1M1704,414.1L1720.5,400.9M1720.5,400.9L1737,414.1M1720.5,414.1L1737,400.9M1737,400.9L1753.5,414.1M1737,414.1L1753.5,400.9M1753.5,400.9L1753.5,414.1M1753.5,400.9L1770,414.1M1753.5,414.1L1770,400.9M1770,400.9L1786.5,414.1M1770,414.1L1786.5,400.9M1786.5,400.9L1803,414.1M1786.5,414.1L1803,400.9M1803,400.9L1819.5,414.1M1803,414.1L1819.5,400.9M1819.5,400.9L1819.5,414.1M1819.5,400.9L1836,414.1M1819.5,414.1L1836,400.9M1836,400.9L1852.5,414.1M1836,414.1L1852.5,400.9M1852.5,400.9L1869,414.1M1852.5,414.1L1869,400.9M1869,400.9L1885.5,414.1M1869,414.1L1885.5,400.9M1885.5,400.9L1885.5,414.1M1885.5,400.9L1902,414.1M1885.5,414.1L1902,400.9M1902,400.9L1918.5,414.1M1902,414.1L1918.5,400.9M1918.5,400.9L1935,414.1M1918.5,414.1L1935,400.9M1935,400.9L1951.5,414.1M1935,414.1L1951.5,400.9M1951.5,400.9L1951.5,414.1M1951.5,400.9L1968,414.1M1951.5,414.1L1968,400.9M1968,400.9L1984.5,414.1M1968,414.1L1984.5,400.9M1984.5,400.9L2001,414.1M1984.5,414.1L2001,400.9M2001,400.9L2017.5,414.1M2001,414.1L2017.5,400.9M2017.5,400.9L2017.5,414.1M2017.5,400.9L2034,414.1M2017.5,414.1L2034,400.9M2034,400.9L2050.5,414.1M2034,414.1L2050.5,400.9M2050.5,400.9L2067,414.1M2050.5,414.1L2067,400.9M2067,400.9L2083.5,414.1M2067,414.1L2083.5,400.9M2083.5,400.9L2083.5,414.1" stroke="#f2f2f2" stroke-width="2" fill="none"/>
<path d="M505.5,397.1h2M505.5,414.1h2M516,397.1h2M516,414.1h2M526.5,397.1h2M526.5,414.1h2M537,397.1h2M537,414.1h2M547.5,397.1h2M547.5,414.1h2M558,397.1h2M558,414.1h2M568.5,397.1h2M568.5,414.1h2M579,397.1h2M579,414.1h2M589.5,397.1h2M589.5,414.1h2M600,397.1h2M600,414.1h2M610.5,397.1h2M610.5,414.1h2M621,397.1h2M621,414.1h2M631.5,397.1h2M631.5,414.1h2M642,397.1h2M642,414.1h2M652.5,397.1h2M652.5,414.1h2M663,397.1h2M663,414.1h2M673.5,397.1h2M673.5,414.1h2M684,397.1h2M684,414.1h2M694.5,397.1h2M694.5,414.1h2M705,397.1h2M705,414.1h2M715.5,397.1h2M715.5,414.1h2M726,397.1h2M726,414.1h2M736.5,397.1h2M736.5,414.1h2M747,397.1h2M747,414.1h2M757.5,397.1h2M757.5,414.1h2M768,397.1h2M768,414.1h2M778.5,397.1h2M778.5,414.1h2M789,397.1h2M789,414.1h2M799.5,397.1h2M799.5,414.1h2M810,397.1h2M810,414.1h2M820.5,397.1h2M820.5,414.1h2M831,397.1h2M831,414.1h2M841.5,397.1h2M841.5,414.1h2M852,397.1h2M852,414.1h2M862.5,397.1h2M862.5,414.1h2M873,397.1h2M873,414.1h2M883.5,397.1h2M883.5,414.1h2M894,397.1h2M894,414.1h2M904.5,397.1h2M904.5,414.1h2M915,397.1h2M915,414.1h2M925.5,397.1h2M925.5,414.1h2M936,397.1h2M936,414.1h2M946.5,397.1h2M946.5,414.1h2M957,397.1h2M957,414.1h2M967.5,397.1h2M967.5,414.1h2M978,397.1h2M978,414.1h2M988.5,397.1h2M988.5,414.1h2M999,397.1h2M999,414.1h2M1009.5,397.1h2M1009.5,414.1h2M1020,397.1h2M1020,414.1h2M1030.5,397.1h2M1030.5,414.1h2M1041,397.1h2M1041,414.1h2M1051.5,397.1h2M1051.5,414.1h2M1062,397.1h2M1062,414.1h2M1072.5,397.1h2M1072.5,414.1h2M1083,397.1h2M1083,414.1h2M1093.5,397.1h2M1093.5,414.1h2M1104,397.1h2M1104,414.1h2M1114.5,397.1h2M1114.5,414.1h2M1125,397.1h2M1125,414.1h2M1135.5,397.1h2M1135.5,414.1h2M1146,397.1h2M1146,414.1h2M1156.5,397.1h2M1156.5,414.1h2M1167,397.1h2M1167,414.1h2M1177.5,397.1h2M1177.5,414.1h2M1188,397.1h2M1188,414.1h2M1198.5,397.1h2M1198.5,414.1h2M1209,397.1h2M1209,414.1h2M1219.5,397.1h2M1219.5,414.1h2M1230,397.1h2M1230,414.1h2M1240.5,397.1h2M1240.5,414.1h2M1251,397.1h2M1251,414.1h2M1261.5,397.1h2M1261.5,414.1h2M1272,397.1h2M1272,414.1h2M1282.5,397.1h2M1282.5,414.1h2M1293,397.1h2M1293,414.1h2M1303.5,397.1h2M1303.5,414.1h2M1314,397.1h2M1314,414.1h2M1324.5,397.1h2M1324.5,414.1h2M1335,397.1h2M1335,414.1h2M1345.5,397.1h2M1345.5,414.1h2M1356,397.1h2M1356,414.1h2M1366.5,397.1h2M1366.5,414.1h2M1377,397.1h2M1377,414.1h2M1387.5,397.1h2M1387.5,414.1h2M1398,397.1h2M1398,414.1h2M1408.5,397.1h2M1408.5,414.1h2M1419,397.1h2M1419,414.1h2M1429.5,397.1h2M1429.5,414.1h2M1440,397.1h2M1440,414.1h2M1450.5,397.1h2M1450.5,414.1h2M1461,397.1h2M1461,414.1h2M1471.5,397.1h2M1471.5,414.1h2M1482,397.1h2M1482,414.1h2M1492.5,397.1h2M1492.5,414.1h2M1503,397.1h2M1503,414.1h2M1513.5,397.1h2M1513.5,414.1h2M1524,397.1h2M1524,414.1h2M1534.5,397.1h2M1534.5,414.1h2M1545,397.1h2M1545,414.1h2M1555.5,397.1h2M1555.5,414.1h2M1566,397.1h2M1566,414.1h2M1576.5,397.1h2M1576.5,414.1h2M1587,397.1h2M1587,414.1h2M1597.5,397.1h2M1597.5,414.1h2M1608,397.1h2M1608,414.1h2M1618.5,397.1h2M1618.5,414.1h2M1629,397.1h2M1629,414.1h2M1639.5,397.1h2M1639.5,414.1h2M1650,397.1h2M1650,414.1h2M1660.5,397.1h2M1660.5,414.1h2M1671,397.1h2M1671,414.1h2M1681.5,397.1h2M1681.5,414.1h2M1692,397.1h2M1692,414.1h2M1702.5,397.1h2M1702.5,414.1h2M1713,397.1h2M1713,414.1h2M1723.5,397.1h2M1723.5,414.1h2M1734,397.1h2M1734,414.1h2M1744.5,397.1h2M1744.5,414.1h2M1755,397.1h2M1755,414.1h2M1765.5,397.1h2M1765.5,414.1h2M1776,397.1h2M1776,414.1h2M1786.5,397.1h2M1786.5,414.1h2M1797,397.1h2M1797,414.1h2M1807.5,397.1h2M1807.5,414.1h2M1818,397.1h2M1818,414.1h2M1828.5,397.1h2M1828.5,414.1h2M1839,397.1h2M1839,414.1h2M1849.5,397.1h2M1849.5,414.1h2M1860,397.1h2M1860,414.1h2M1870.5,397.1h2M1870.5,414.1h2M1881,397.1h2M1881,414.1h2M1891.5,397.1h2M1891.5,414.1h2M1902,397.1h2M1902,414.1h2M1912.5,397.1h2M1912.5,414.1h2M1923,397.1h2M1923,414.1h2M1933.5,397.1h2M1933.5,414.1h2M1944,397.1h2M1944,414.1h2M1954.5,397.1h2M1954.5,414.1h2M1965,397.1h2M1965,414.1h2M1975.5,397.1h2M1975.5,414.1h2M1986,397.1h2M1986,414.1h2M1996.5,397.1h2M1996.5,414.1h2M2007,397.1h2M2007,414.1h2M2017.5,397.1h2M2017.5,414.1h2M2028,397.1h2M2028,414.1h2M2038.5,397.1h2M2038.5,414.1h2M2049,397.1h2M2049,414.1h2M2059.5,397.1h2M2059.5,414.1h2M2070,397.1h2M2070,414.1h2M2080.5,397.1h2M2080.5,414.1h2" stroke="#f4f4f4" stroke-width="2.2" fill="none"/>
<path d="M511.9,417.4 A6,6 0 0 0 523.9,417.4" stroke="#d0d0d0" stroke-width="1.2" fill="none"/>
<path d="M538.3,417.4 A6,6 0 0 0 550.3,417.4" stroke="#d0d0d0" stroke-width="1.2" fill="none"/>
<path d="M564.5,417.4 A6,6 0 0 0 576.5,417.4" stroke="#d0d0d0" stroke-width="1.2" fill="none"/>
<path d="M591.2,417.4 A6,6 0 0 0 603.2,417.4" stroke="#d0d0d0" stroke-width="1.2" fill="none"/>
<path d="M1982,417.4 A6,6 0 0 0 1994,417.4" stroke="#d0d0d0" stroke-width="1.2" fill="none"/>
<path d="M2008,417.4 A6,6 0 0 0 2020,417.4" stroke="#d0d0d0" stroke-width="1.2" fill="none"/>
<path d="M2034,417.4 A6,6 0 0 0 2046,417.4" stroke="#d0d0d0" stroke-width="1.2" fill="none"/>
<path d="M2060,417.4 A6,6 0 0 0 2072,417.4" stroke="#d0d0d0" stroke-width="1.2" fill="none"/>
<line x1="554" y1="446" x2="2029" y2="446" stroke="#e8e8e8" stroke-width="2"/>
<line x1="555" y1="448.8" x2="2028" y2="448.8" stroke="#e4e4e4" stroke-width="1.3"/>
<line x1="554" y1="461.5" x2="2029" y2="461.5" stroke="#e8e8e8" stroke-width="1.7"/>
<line x1="554" y1="465" x2="2029" y2="465" stroke="#e8e8e8" stroke-width="1.7"/>
<line x1="555" y1="478.4" x2="2028" y2="478.4" stroke="#e4e4e4" stroke-width="1.3"/>
<line x1="554" y1="481.2" x2="2029" y2="481.2" stroke="#e8e8e8" stroke-width="2"/>
<line x1="555.5" y1="445" x2="555.5" y2="482.2" stroke="#e8e8e8" stroke-width="1.8"/>
<line x1="557.8" y1="447" x2="557.8" y2="480.2" stroke="#d8d8d8" stroke-width="1"/>
<rect x="549" y="444.5" width="6.5" height="5" fill="none" stroke="#e0e0e0" stroke-width="1.2"/>
<rect x="549" y="460.7" width="6.5" height="5" fill="none" stroke="#e0e0e0" stroke-width="1.2"/>
<rect x="549" y="477.7" width="6.5" height="5" fill="none" stroke="#e0e0e0" stroke-width="1.2"/>
<line x1="2027.5" y1="445" x2="2027.5" y2="482.2" stroke="#e8e8e8" stroke-width="1.8"/>
<line x1="2025.2" y1="447" x2="2025.2" y2="480.2" stroke="#d8d8d8" stroke-width="1"/>
<rect x="2027.5" y="444.5" width="6.5" height="5" fill="none" stroke="#e0e0e0" stroke-width="1.2"/>
<rect x="2027.5" y="460.7" width="6.5" height="5" fill="none" stroke="#e0e0e0" stroke-width="1.2"/>
<rect x="2027.5" y="477.7" width="6.5" height="5" fill="none" stroke="#e0e0e0" stroke-width="1.2"/>
<rect x="732.1" y="445" width="9" height="37.2" fill="none" stroke="#ececec" stroke-width="1.5"/>
<line x1="736.6" y1="447" x2="736.6" y2="480.2" stroke="#9a9a9a" stroke-width="0.8"/>
<rect x="917.3" y="445" width="9" height="37.2" fill="none" stroke="#ececec" stroke-width="1.5"/>
<line x1="921.8" y1="447" x2="921.8" y2="480.2" stroke="#9a9a9a" stroke-width="0.8"/>
<rect x="1102.6" y="445" width="9" height="37.2" fill="none" stroke="#ececec" stroke-width="1.5"/>
<line x1="1107.1" y1="447" x2="1107.1" y2="480.2" stroke="#9a9a9a" stroke-width="0.8"/>
<rect x="1287.8" y="445" width="9" height="37.2" fill="none" stroke="#ececec" stroke-width="1.5"/>
<line x1="1292.3" y1="447" x2="1292.3" y2="480.2" stroke="#9a9a9a" stroke-width="0.8"/>
<rect x="1473" y="445" width="9" height="37.2" fill="none" stroke="#ececec" stroke-width="1.5"/>
<line x1="1477.5" y1="447" x2="1477.5" y2="480.2" stroke="#9a9a9a" stroke-width="0.8"/>
<rect x="1658.2" y="445" width="9" height="37.2" fill="none" stroke="#ececec" stroke-width="1.5"/>
<line x1="1662.8" y1="447" x2="1662.8" y2="480.2" stroke="#9a9a9a" stroke-width="0.8"/>
<rect x="1843.5" y="445" width="9" height="37.2" fill="none" stroke="#ececec" stroke-width="1.5"/>
<line x1="1848" y1="447" x2="1848" y2="480.2" stroke="#9a9a9a" stroke-width="0.8"/>
<path d="M613.5,446V481.2M616.5,446V481.2M672.1,446V481.2M675.1,446V481.2M798.3,446V481.2M801.3,446V481.2M857.1,446V481.2M860.1,446V481.2M983.6,446V481.2M986.6,446V481.2M1042.3,446V481.2M1045.3,446V481.2M1168.8,446V481.2M1171.8,446V481.2M1227.5,446V481.2M1230.5,446V481.2M1354,446V481.2M1357,446V481.2M1412.8,446V481.2M1415.8,446V481.2M1539.3,446V481.2M1542.3,446V481.2M1598,446V481.2M1601,446V481.2M1724.5,446V481.2M1727.5,446V481.2M1783.2,446V481.2M1786.2,446V481.2M1909,446V481.2M1912,446V481.2M1967,446V481.2M1970,446V481.2" stroke="#cfcfcf" stroke-width="1" fill="none"/>
<path d="M557.5,461.5L579.2,449L600.9,461.5M557.5,465L579.2,478.2L600.9,465M600.9,461.5L622.6,449L644.3,461.5M600.9,465L622.6,478.2L644.3,465M644.3,461.5L666,449L687.7,461.5M644.3,465L666,478.2L687.7,465M687.7,461.5L709.4,449L731.1,461.5M687.7,465L709.4,478.2L731.1,465M742.1,461.5L763.9,449L785.7,461.5M742.1,465L763.9,478.2L785.7,465M785.7,461.5L807.4,449L829.2,461.5M785.7,465L807.4,478.2L829.2,465M829.2,461.5L851,449L872.8,461.5M829.2,465L851,478.2L872.8,465M872.8,461.5L894.6,449L916.3,461.5M872.8,465L894.6,478.2L916.3,465M927.3,461.5L949.1,449L970.9,461.5M927.3,465L949.1,478.2L970.9,465M970.9,461.5L992.7,449L1014.4,461.5M970.9,465L992.7,478.2L1014.4,465M1014.4,461.5L1036.2,449L1058,461.5M1014.4,465L1036.2,478.2L1058,465M1058,461.5L1079.8,449L1101.6,461.5M1058,465L1079.8,478.2L1101.6,465M1112.6,461.5L1134.3,449L1156.1,461.5M1112.6,465L1134.3,478.2L1156.1,465M1156.1,461.5L1177.9,449L1199.7,461.5M1156.1,465L1177.9,478.2L1199.7,465M1199.7,461.5L1221.5,449L1243.2,461.5M1199.7,465L1221.5,478.2L1243.2,465M1243.2,461.5L1265,449L1286.8,461.5M1243.2,465L1265,478.2L1286.8,465M1297.8,461.5L1319.6,449L1341.3,461.5M1297.8,465L1319.6,478.2L1341.3,465M1341.3,461.5L1363.1,449L1384.9,461.5M1341.3,465L1363.1,478.2L1384.9,465M1384.9,461.5L1406.7,449L1428.5,461.5M1384.9,465L1406.7,478.2L1428.5,465M1428.5,461.5L1450.2,449L1472,461.5M1428.5,465L1450.2,478.2L1472,465M1483,461.5L1504.8,449L1526.6,461.5M1483,465L1504.8,478.2L1526.6,465M1526.6,461.5L1548.4,449L1570.1,461.5M1526.6,465L1548.4,478.2L1570.1,465M1570.1,461.5L1591.9,449L1613.7,461.5M1570.1,465L1591.9,478.2L1613.7,465M1613.7,461.5L1635.5,449L1657.2,461.5M1613.7,465L1635.5,478.2L1657.2,465M1668.2,461.5L1690,449L1711.8,461.5M1668.2,465L1690,478.2L1711.8,465M1711.8,461.5L1733.6,449L1755.4,461.5M1711.8,465L1733.6,478.2L1755.4,465M1755.4,461.5L1777.1,449L1798.9,461.5M1755.4,465L1777.1,478.2L1798.9,465M1798.9,461.5L1820.7,449L1842.5,461.5M1798.9,465L1820.7,478.2L1842.5,465M1853.5,461.5L1875,449L1896.5,461.5M1853.5,465L1875,478.2L1896.5,465M1896.5,461.5L1918,449L1939.5,461.5M1896.5,465L1918,478.2L1939.5,465M1939.5,461.5L1961,449L1982.5,461.5M1939.5,465L1961,478.2L1982.5,465M1982.5,461.5L2004,449L2025.5,461.5M1982.5,465L2004,478.2L2025.5,465" stroke="#e6e6e6" stroke-width="2.8" fill="none"/>
<path d="M557.5,461.5L579.2,449L600.9,461.5M557.5,465L579.2,478.2L600.9,465M600.9,461.5L622.6,449L644.3,461.5M600.9,465L622.6,478.2L644.3,465M644.3,461.5L666,449L687.7,461.5M644.3,465L666,478.2L687.7,465M687.7,461.5L709.4,449L731.1,461.5M687.7,465L709.4,478.2L731.1,465M742.1,461.5L763.9,449L785.7,461.5M742.1,465L763.9,478.2L785.7,465M785.7,461.5L807.4,449L829.2,461.5M785.7,465L807.4,478.2L829.2,465M829.2,461.5L851,449L872.8,461.5M829.2,465L851,478.2L872.8,465M872.8,461.5L894.6,449L916.3,461.5M872.8,465L894.6,478.2L916.3,465M927.3,461.5L949.1,449L970.9,461.5M927.3,465L949.1,478.2L970.9,465M970.9,461.5L992.7,449L1014.4,461.5M970.9,465L992.7,478.2L1014.4,465M1014.4,461.5L1036.2,449L1058,461.5M1014.4,465L1036.2,478.2L1058,465M1058,461.5L1079.8,449L1101.6,461.5M1058,465L1079.8,478.2L1101.6,465M1112.6,461.5L1134.3,449L1156.1,461.5M1112.6,465L1134.3,478.2L1156.1,465M1156.1,461.5L1177.9,449L1199.7,461.5M1156.1,465L1177.9,478.2L1199.7,465M1199.7,461.5L1221.5,449L1243.2,461.5M1199.7,465L1221.5,478.2L1243.2,465M1243.2,461.5L1265,449L1286.8,461.5M1243.2,465L1265,478.2L1286.8,465M1297.8,461.5L1319.6,449L1341.3,461.5M1297.8,465L1319.6,478.2L1341.3,465M1341.3,461.5L1363.1,449L1384.9,461.5M1341.3,465L1363.1,478.2L1384.9,465M1384.9,461.5L1406.7,449L1428.5,461.5M1384.9,465L1406.7,478.2L1428.5,465M1428.5,461.5L1450.2,449L1472,461.5M1428.5,465L1450.2,478.2L1472,465M1483,461.5L1504.8,449L1526.6,461.5M1483,465L1504.8,478.2L1526.6,465M1526.6,461.5L1548.4,449L1570.1,461.5M1526.6,465L1548.4,478.2L1570.1,465M1570.1,461.5L1591.9,449L1613.7,461.5M1570.1,465L1591.9,478.2L1613.7,465M1613.7,461.5L1635.5,449L1657.2,461.5M1613.7,465L1635.5,478.2L1657.2,465M1668.2,461.5L1690,449L1711.8,461.5M1668.2,465L1690,478.2L1711.8,465M1711.8,461.5L1733.6,449L1755.4,461.5M1711.8,465L1733.6,478.2L1755.4,465M1755.4,461.5L1777.1,449L1798.9,461.5M1755.4,465L1777.1,478.2L1798.9,465M1798.9,461.5L1820.7,449L1842.5,461.5M1798.9,465L1820.7,478.2L1842.5,465M1853.5,461.5L1875,449L1896.5,461.5M1853.5,465L1875,478.2L1896.5,465M1896.5,461.5L1918,449L1939.5,461.5M1896.5,465L1918,478.2L1939.5,465M1939.5,461.5L1961,449L1982.5,461.5M1939.5,465L1961,478.2L1982.5,465M1982.5,461.5L2004,449L2025.5,461.5M1982.5,465L2004,478.2L2025.5,465" stroke="#000" stroke-width="0.9" fill="none" opacity="0.7"/>
<line x1="498" y1="731.9" x2="2086" y2="731.9" stroke="#e8e8e8" stroke-width="2"/>
<line x1="498" y1="735.2" x2="2086" y2="735.2" stroke="#e8e8e8" stroke-width="1.3"/>
<line x1="498" y1="747.2" x2="2086" y2="747.2" stroke="#e8e8e8" stroke-width="2"/>
<line x1="498" y1="750.5" x2="2086" y2="750.5" stroke="#e8e8e8" stroke-width="1.6"/>
<line x1="498" y1="731.9" x2="498" y2="750.5" stroke="#e8e8e8" stroke-width="1.6"/>
<line x1="2086" y1="731.9" x2="2086" y2="750.5" stroke="#e8e8e8" stroke-width="1.6"/>
<path d="M500,735.2L516.5,747.2M500,747.2L516.5,735.2M516.5,735.2L533,747.2M516.5,747.2L533,735.2M533,735.2L549.5,747.2M533,747.2L549.5,735.2M549.5,735.2L566,747.2M549.5,747.2L566,735.2M566,735.2L566,747.2M566,735.2L582.5,747.2M566,747.2L582.5,735.2M582.5,735.2L599,747.2M582.5,747.2L599,735.2M599,735.2L615.5,747.2M599,747.2L615.5,735.2M615.5,735.2L632,747.2M615.5,747.2L632,735.2M632,735.2L632,747.2M632,735.2L648.5,747.2M632,747.2L648.5,735.2M648.5,735.2L665,747.2M648.5,747.2L665,735.2M665,735.2L681.5,747.2M665,747.2L681.5,735.2M681.5,735.2L698,747.2M681.5,747.2L698,735.2M698,735.2L698,747.2M698,735.2L714.5,747.2M698,747.2L714.5,735.2M714.5,735.2L731,747.2M714.5,747.2L731,735.2M731,735.2L747.5,747.2M731,747.2L747.5,735.2M747.5,735.2L764,747.2M747.5,747.2L764,735.2M764,735.2L764,747.2M764,735.2L780.5,747.2M764,747.2L780.5,735.2M780.5,735.2L797,747.2M780.5,747.2L797,735.2M797,735.2L813.5,747.2M797,747.2L813.5,735.2M813.5,735.2L830,747.2M813.5,747.2L830,735.2M830,735.2L830,747.2M830,735.2L846.5,747.2M830,747.2L846.5,735.2M846.5,735.2L863,747.2M846.5,747.2L863,735.2M863,735.2L879.5,747.2M863,747.2L879.5,735.2M879.5,735.2L896,747.2M879.5,747.2L896,735.2M896,735.2L896,747.2M896,735.2L912.5,747.2M896,747.2L912.5,735.2M912.5,735.2L929,747.2M912.5,747.2L929,735.2M929,735.2L945.5,747.2M929,747.2L945.5,735.2M945.5,735.2L962,747.2M945.5,747.2L962,735.2M962,735.2L962,747.2M962,735.2L978.5,747.2M962,747.2L978.5,735.2M978.5,735.2L995,747.2M978.5,747.2L995,735.2M995,735.2L1011.5,747.2M995,747.2L1011.5,735.2M1011.5,735.2L1028,747.2M1011.5,747.2L1028,735.2M1028,735.2L1028,747.2M1028,735.2L1044.5,747.2M1028,747.2L1044.5,735.2M1044.5,735.2L1061,747.2M1044.5,747.2L1061,735.2M1061,735.2L1077.5,747.2M1061,747.2L1077.5,735.2M1077.5,735.2L1094,747.2M1077.5,747.2L1094,735.2M1094,735.2L1094,747.2M1094,735.2L1110.5,747.2M1094,747.2L1110.5,735.2M1110.5,735.2L1127,747.2M1110.5,747.2L1127,735.2M1127,735.2L1143.5,747.2M1127,747.2L1143.5,735.2M1143.5,735.2L1160,747.2M1143.5,747.2L1160,735.2M1160,735.2L1160,747.2M1160,735.2L1176.5,747.2M1160,747.2L1176.5,735.2M1176.5,735.2L1193,747.2M1176.5,747.2L1193,735.2M1193,735.2L1209.5,747.2M1193,747.2L1209.5,735.2M1209.5,735.2L1226,747.2M1209.5,747.2L1226,735.2M1226,735.2L1226,747.2M1226,735.2L1242.5,747.2M1226,747.2L1242.5,735.2M1242.5,735.2L1259,747.2M1242.5,747.2L1259,735.2M1259,735.2L1275.5,747.2M1259,747.2L1275.5,735.2M1275.5,735.2L1292,747.2M1275.5,747.2L1292,735.2M1292,735.2L1292,747.2M1292,735.2L1308.5,747.2M1292,747.2L1308.5,735.2M1308.5,735.2L1325,747.2M1308.5,747.2L1325,735.2M1325,735.2L1341.5,747.2M1325,747.2L1341.5,735.2M1341.5,735.2L1358,747.2M1341.5,747.2L1358,735.2M1358,735.2L1358,747.2M1358,735.2L1374.5,747.2M1358,747.2L1374.5,735.2M1374.5,735.2L1391,747.2M1374.5,747.2L1391,735.2M1391,735.2L1407.5,747.2M1391,747.2L1407.5,735.2M1407.5,735.2L1424,747.2M1407.5,747.2L1424,735.2M1424,735.2L1424,747.2M1424,735.2L1440.5,747.2M1424,747.2L1440.5,735.2M1440.5,735.2L1457,747.2M1440.5,747.2L1457,735.2M1457,735.2L1473.5,747.2M1457,747.2L1473.5,735.2M1473.5,735.2L1490,747.2M1473.5,747.2L1490,735.2M1490,735.2L1490,747.2M1490,735.2L1506.5,747.2M1490,747.2L1506.5,735.2M1506.5,735.2L1523,747.2M1506.5,747.2L1523,735.2M1523,735.2L1539.5,747.2M1523,747.2L1539.5,735.2M1539.5,735.2L1556,747.2M1539.5,747.2L1556,735.2M1556,735.2L1556,747.2M1556,735.2L1572.5,747.2M1556,747.2L1572.5,735.2M1572.5,735.2L1589,747.2M1572.5,747.2L1589,735.2M1589,735.2L1605.5,747.2M1589,747.2L1605.5,735.2M1605.5,735.2L1622,747.2M1605.5,747.2L1622,735.2M1622,735.2L1622,747.2M1622,735.2L1638.5,747.2M1622,747.2L1638.5,735.2M1638.5,735.2L1655,747.2M1638.5,747.2L1655,735.2M1655,735.2L1671.5,747.2M1655,747.2L1671.5,735.2M1671.5,735.2L1688,747.2M1671.5,747.2L1688,735.2M1688,735.2L1688,747.2M1688,735.2L1704.5,747.2M1688,747.2L1704.5,735.2M1704.5,735.2L1721,747.2M1704.5,747.2L1721,735.2M1721,735.2L1737.5,747.2M1721,747.2L1737.5,735.2M1737.5,735.2L1754,747.2M1737.5,747.2L1754,735.2M1754,735.2L1754,747.2M1754,735.2L1770.5,747.2M1754,747.2L1770.5,735.2M1770.5,735.2L1787,747.2M1770.5,747.2L1787,735.2M1787,735.2L1803.5,747.2M1787,747.2L1803.5,735.2M1803.5,735.2L1820,747.2M1803.5,747.2L1820,735.2M1820,735.2L1820,747.2M1820,735.2L1836.5,747.2M1820,747.2L1836.5,735.2M1836.5,735.2L1853,747.2M1836.5,747.2L1853,735.2M1853,735.2L1869.5,747.2M1853,747.2L1869.5,735.2M1869.5,735.2L1886,747.2M1869.5,747.2L1886,735.2M1886,735.2L1886,747.2M1886,735.2L1902.5,747.2M1886,747.2L1902.5,735.2M1902.5,735.2L1919,747.2M1902.5,747.2L1919,735.2M1919,735.2L1935.5,747.2M1919,747.2L1935.5,735.2M1935.5,735.2L1952,747.2M1935.5,747.2L1952,735.2M1952,735.2L1952,747.2M1952,735.2L1968.5,747.2M1952,747.2L1968.5,735.2M1968.5,735.2L1985,747.2M1968.5,747.2L1985,735.2M1985,735.2L2001.5,747.2M1985,747.2L2001.5,735.2M2001.5,735.2L2018,747.2M2001.5,747.2L2018,735.2M2018,735.2L2018,747.2M2018,735.2L2034.5,747.2M2018,747.2L2034.5,735.2M2034.5,735.2L2051,747.2M2034.5,747.2L2051,735.2M2051,735.2L2067.5,747.2M2051,747.2L2067.5,735.2M2067.5,735.2L2084,747.2M2067.5,747.2L2084,735.2M2084,735.2L2084,747.2" stroke="#f2f2f2" stroke-width="2" fill="none"/>
<path d="M506,731.4h2M506,747.2h2M516.5,731.4h2M516.5,747.2h2M527,731.4h2M527,747.2h2M537.5,731.4h2M537.5,747.2h2M548,731.4h2M548,747.2h2M558.5,731.4h2M558.5,747.2h2M569,731.4h2M569,747.2h2M579.5,731.4h2M579.5,747.2h2M590,731.4h2M590,747.2h2M600.5,731.4h2M600.5,747.2h2M611,731.4h2M611,747.2h2M621.5,731.4h2M621.5,747.2h2M632,731.4h2M632,747.2h2M642.5,731.4h2M642.5,747.2h2M653,731.4h2M653,747.2h2M663.5,731.4h2M663.5,747.2h2M674,731.4h2M674,747.2h2M684.5,731.4h2M684.5,747.2h2M695,731.4h2M695,747.2h2M705.5,731.4h2M705.5,747.2h2M716,731.4h2M716,747.2h2M726.5,731.4h2M726.5,747.2h2M737,731.4h2M737,747.2h2M747.5,731.4h2M747.5,747.2h2M758,731.4h2M758,747.2h2M768.5,731.4h2M768.5,747.2h2M779,731.4h2M779,747.2h2M789.5,731.4h2M789.5,747.2h2M800,731.4h2M800,747.2h2M810.5,731.4h2M810.5,747.2h2M821,731.4h2M821,747.2h2M831.5,731.4h2M831.5,747.2h2M842,731.4h2M842,747.2h2M852.5,731.4h2M852.5,747.2h2M863,731.4h2M863,747.2h2M873.5,731.4h2M873.5,747.2h2M884,731.4h2M884,747.2h2M894.5,731.4h2M894.5,747.2h2M905,731.4h2M905,747.2h2M915.5,731.4h2M915.5,747.2h2M926,731.4h2M926,747.2h2M936.5,731.4h2M936.5,747.2h2M947,731.4h2M947,747.2h2M957.5,731.4h2M957.5,747.2h2M968,731.4h2M968,747.2h2M978.5,731.4h2M978.5,747.2h2M989,731.4h2M989,747.2h2M999.5,731.4h2M999.5,747.2h2M1010,731.4h2M1010,747.2h2M1020.5,731.4h2M1020.5,747.2h2M1031,731.4h2M1031,747.2h2M1041.5,731.4h2M1041.5,747.2h2M1052,731.4h2M1052,747.2h2M1062.5,731.4h2M1062.5,747.2h2M1073,731.4h2M1073,747.2h2M1083.5,731.4h2M1083.5,747.2h2M1094,731.4h2M1094,747.2h2M1104.5,731.4h2M1104.5,747.2h2M1115,731.4h2M1115,747.2h2M1125.5,731.4h2M1125.5,747.2h2M1136,731.4h2M1136,747.2h2M1146.5,731.4h2M1146.5,747.2h2M1157,731.4h2M1157,747.2h2M1167.5,731.4h2M1167.5,747.2h2M1178,731.4h2M1178,747.2h2M1188.5,731.4h2M1188.5,747.2h2M1199,731.4h2M1199,747.2h2M1209.5,731.4h2M1209.5,747.2h2M1220,731.4h2M1220,747.2h2M1230.5,731.4h2M1230.5,747.2h2M1241,731.4h2M1241,747.2h2M1251.5,731.4h2M1251.5,747.2h2M1262,731.4h2M1262,747.2h2M1272.5,731.4h2M1272.5,747.2h2M1283,731.4h2M1283,747.2h2M1293.5,731.4h2M1293.5,747.2h2M1304,731.4h2M1304,747.2h2M1314.5,731.4h2M1314.5,747.2h2M1325,731.4h2M1325,747.2h2M1335.5,731.4h2M1335.5,747.2h2M1346,731.4h2M1346,747.2h2M1356.5,731.4h2M1356.5,747.2h2M1367,731.4h2M1367,747.2h2M1377.5,731.4h2M1377.5,747.2h2M1388,731.4h2M1388,747.2h2M1398.5,731.4h2M1398.5,747.2h2M1409,731.4h2M1409,747.2h2M1419.5,731.4h2M1419.5,747.2h2M1430,731.4h2M1430,747.2h2M1440.5,731.4h2M1440.5,747.2h2M1451,731.4h2M1451,747.2h2M1461.5,731.4h2M1461.5,747.2h2M1472,731.4h2M1472,747.2h2M1482.5,731.4h2M1482.5,747.2h2M1493,731.4h2M1493,747.2h2M1503.5,731.4h2M1503.5,747.2h2M1514,731.4h2M1514,747.2h2M1524.5,731.4h2M1524.5,747.2h2M1535,731.4h2M1535,747.2h2M1545.5,731.4h2M1545.5,747.2h2M1556,731.4h2M1556,747.2h2M1566.5,731.4h2M1566.5,747.2h2M1577,731.4h2M1577,747.2h2M1587.5,731.4h2M1587.5,747.2h2M1598,731.4h2M1598,747.2h2M1608.5,731.4h2M1608.5,747.2h2M1619,731.4h2M1619,747.2h2M1629.5,731.4h2M1629.5,747.2h2M1640,731.4h2M1640,747.2h2M1650.5,731.4h2M1650.5,747.2h2M1661,731.4h2M1661,747.2h2M1671.5,731.4h2M1671.5,747.2h2M1682,731.4h2M1682,747.2h2M1692.5,731.4h2M1692.5,747.2h2M1703,731.4h2M1703,747.2h2M1713.5,731.4h2M1713.5,747.2h2M1724,731.4h2M1724,747.2h2M1734.5,731.4h2M1734.5,747.2h2M1745,731.4h2M1745,747.2h2M1755.5,731.4h2M1755.5,747.2h2M1766,731.4h2M1766,747.2h2M1776.5,731.4h2M1776.5,747.2h2M1787,731.4h2M1787,747.2h2M1797.5,731.4h2M1797.5,747.2h2M1808,731.4h2M1808,747.2h2M1818.5,731.4h2M1818.5,747.2h2M1829,731.4h2M1829,747.2h2M1839.5,731.4h2M1839.5,747.2h2M1850,731.4h2M1850,747.2h2M1860.5,731.4h2M1860.5,747.2h2M1871,731.4h2M1871,747.2h2M1881.5,731.4h2M1881.5,747.2h2M1892,731.4h2M1892,747.2h2M1902.5,731.4h2M1902.5,747.2h2M1913,731.4h2M1913,747.2h2M1923.5,731.4h2M1923.5,747.2h2M1934,731.4h2M1934,747.2h2M1944.5,731.4h2M1944.5,747.2h2M1955,731.4h2M1955,747.2h2M1965.5,731.4h2M1965.5,747.2h2M1976,731.4h2M1976,747.2h2M1986.5,731.4h2M1986.5,747.2h2M1997,731.4h2M1997,747.2h2M2007.5,731.4h2M2007.5,747.2h2M2018,731.4h2M2018,747.2h2M2028.5,731.4h2M2028.5,747.2h2M2039,731.4h2M2039,747.2h2M2049.5,731.4h2M2049.5,747.2h2M2060,731.4h2M2060,747.2h2M2070.5,731.4h2M2070.5,747.2h2M2081,731.4h2M2081,747.2h2" stroke="#f4f4f4" stroke-width="2.2" fill="none"/>
<path d="M511.9,750.5 A6,6 0 0 0 523.9,750.5" stroke="#d0d0d0" stroke-width="1.2" fill="none"/>
<path d="M538.3,750.5 A6,6 0 0 0 550.3,750.5" stroke="#d0d0d0" stroke-width="1.2" fill="none"/>
<path d="M564.5,750.5 A6,6 0 0 0 576.5,750.5" stroke="#d0d0d0" stroke-width="1.2" fill="none"/>
<path d="M591.2,750.5 A6,6 0 0 0 603.2,750.5" stroke="#d0d0d0" stroke-width="1.2" fill="none"/>
<path d="M1981.3,750.5 A6,6 0 0 0 1993.3,750.5" stroke="#d0d0d0" stroke-width="1.2" fill="none"/>
<path d="M2007,750.5 A6,6 0 0 0 2019,750.5" stroke="#d0d0d0" stroke-width="1.2" fill="none"/>
<path d="M2033.3,750.5 A6,6 0 0 0 2045.3,750.5" stroke="#d0d0d0" stroke-width="1.2" fill="none"/>
<path d="M2059.6,750.5 A6,6 0 0 0 2071.6,750.5" stroke="#d0d0d0" stroke-width="1.2" fill="none"/>
<line x1="554.5" y1="809.8" x2="2029.4" y2="809.8" stroke="#e8e8e8" stroke-width="2"/>
<line x1="555.5" y1="812.6" x2="2028.4" y2="812.6" stroke="#e4e4e4" stroke-width="1.3"/>
<line x1="554.5" y1="825.6" x2="2029.4" y2="825.6" stroke="#e8e8e8" stroke-width="1.7"/>
<line x1="554.5" y1="829.1" x2="2029.4" y2="829.1" stroke="#e8e8e8" stroke-width="1.7"/>
<line x1="555.5" y1="842.8" x2="2028.4" y2="842.8" stroke="#e4e4e4" stroke-width="1.3"/>
<line x1="554.5" y1="845.6" x2="2029.4" y2="845.6" stroke="#e8e8e8" stroke-width="2"/>
<line x1="556" y1="808.8" x2="556" y2="846.6" stroke="#e8e8e8" stroke-width="1.8"/>
<line x1="558.3" y1="810.8" x2="558.3" y2="844.6" stroke="#d8d8d8" stroke-width="1"/>
<rect x="549.5" y="808.3" width="6.5" height="5" fill="none" stroke="#e0e0e0" stroke-width="1.2"/>
<rect x="549.5" y="824.8" width="6.5" height="5" fill="none" stroke="#e0e0e0" stroke-width="1.2"/>
<rect x="549.5" y="842.1" width="6.5" height="5" fill="none" stroke="#e0e0e0" stroke-width="1.2"/>
<line x1="2027.9" y1="808.8" x2="2027.9" y2="846.6" stroke="#e8e8e8" stroke-width="1.8"/>
<line x1="2025.6" y1="810.8" x2="2025.6" y2="844.6" stroke="#d8d8d8" stroke-width="1"/>
<rect x="2027.9" y="808.3" width="6.5" height="5" fill="none" stroke="#e0e0e0" stroke-width="1.2"/>
<rect x="2027.9" y="824.8" width="6.5" height="5" fill="none" stroke="#e0e0e0" stroke-width="1.2"/>
<rect x="2027.9" y="842.1" width="6.5" height="5" fill="none" stroke="#e0e0e0" stroke-width="1.2"/>
<rect x="732.1" y="808.8" width="9" height="37.8" fill="none" stroke="#ececec" stroke-width="1.5"/>
<line x1="736.6" y1="810.8" x2="736.6" y2="844.6" stroke="#9a9a9a" stroke-width="0.8"/>
<rect x="917.3" y="808.8" width="9" height="37.8" fill="none" stroke="#ececec" stroke-width="1.5"/>
<line x1="921.8" y1="810.8" x2="921.8" y2="844.6" stroke="#9a9a9a" stroke-width="0.8"/>
<rect x="1102.6" y="808.8" width="9" height="37.8" fill="none" stroke="#ececec" stroke-width="1.5"/>
<line x1="1107.1" y1="810.8" x2="1107.1" y2="844.6" stroke="#9a9a9a" stroke-width="0.8"/>
<rect x="1287.8" y="808.8" width="9" height="37.8" fill="none" stroke="#ececec" stroke-width="1.5"/>
<line x1="1292.3" y1="810.8" x2="1292.3" y2="844.6" stroke="#9a9a9a" stroke-width="0.8"/>
<rect x="1473" y="808.8" width="9" height="37.8" fill="none" stroke="#ececec" stroke-width="1.5"/>
<line x1="1477.5" y1="810.8" x2="1477.5" y2="844.6" stroke="#9a9a9a" stroke-width="0.8"/>
<rect x="1658.2" y="808.8" width="9" height="37.8" fill="none" stroke="#ececec" stroke-width="1.5"/>
<line x1="1662.8" y1="810.8" x2="1662.8" y2="844.6" stroke="#9a9a9a" stroke-width="0.8"/>
<rect x="1843.5" y="808.8" width="9" height="37.8" fill="none" stroke="#ececec" stroke-width="1.5"/>
<line x1="1848" y1="810.8" x2="1848" y2="844.6" stroke="#9a9a9a" stroke-width="0.8"/>
<path d="M613.9,809.8V845.6M616.9,809.8V845.6M672.2,809.8V845.6M675.2,809.8V845.6M798.3,809.8V845.6M801.3,809.8V845.6M857.1,809.8V845.6M860.1,809.8V845.6M983.6,809.8V845.6M986.6,809.8V845.6M1042.3,809.8V845.6M1045.3,809.8V845.6M1168.8,809.8V845.6M1171.8,809.8V845.6M1227.5,809.8V845.6M1230.5,809.8V845.6M1354,809.8V845.6M1357,809.8V845.6M1412.8,809.8V845.6M1415.8,809.8V845.6M1539.3,809.8V845.6M1542.3,809.8V845.6M1598,809.8V845.6M1601,809.8V845.6M1724.5,809.8V845.6M1727.5,809.8V845.6M1783.2,809.8V845.6M1786.2,809.8V845.6M1909.1,809.8V845.6M1912.1,809.8V845.6M1967.3,809.8V845.6M1970.3,809.8V845.6" stroke="#cfcfcf" stroke-width="1" fill="none"/>
<path d="M558,825.6L579.6,812.8L601.3,825.6M558,829.1L579.6,842.6L601.3,829.1M601.3,825.6L622.9,812.8L644.5,825.6M601.3,829.1L622.9,842.6L644.5,829.1M644.5,825.6L666.2,812.8L687.8,825.6M644.5,829.1L666.2,842.6L687.8,829.1M687.8,825.6L709.5,812.8L731.1,825.6M687.8,829.1L709.5,842.6L731.1,829.1M742.1,825.6L763.9,812.8L785.7,825.6M742.1,829.1L763.9,842.6L785.7,829.1M785.7,825.6L807.4,812.8L829.2,825.6M785.7,829.1L807.4,842.6L829.2,829.1M829.2,825.6L851,812.8L872.8,825.6M829.2,829.1L851,842.6L872.8,829.1M872.8,825.6L894.6,812.8L916.3,825.6M872.8,829.1L894.6,842.6L916.3,829.1M927.3,825.6L949.1,812.8L970.9,825.6M927.3,829.1L949.1,842.6L970.9,829.1M970.9,825.6L992.7,812.8L1014.4,825.6M970.9,829.1L992.7,842.6L1014.4,829.1M1014.4,825.6L1036.2,812.8L1058,825.6M1014.4,829.1L1036.2,842.6L1058,829.1M1058,825.6L1079.8,812.8L1101.6,825.6M1058,829.1L1079.8,842.6L1101.6,829.1M1112.6,825.6L1134.3,812.8L1156.1,825.6M1112.6,829.1L1134.3,842.6L1156.1,829.1M1156.1,825.6L1177.9,812.8L1199.7,825.6M1156.1,829.1L1177.9,842.6L1199.7,829.1M1199.7,825.6L1221.5,812.8L1243.2,825.6M1199.7,829.1L1221.5,842.6L1243.2,829.1M1243.2,825.6L1265,812.8L1286.8,825.6M1243.2,829.1L1265,842.6L1286.8,829.1M1297.8,825.6L1319.6,812.8L1341.3,825.6M1297.8,829.1L1319.6,842.6L1341.3,829.1M1341.3,825.6L1363.1,812.8L1384.9,825.6M1341.3,829.1L1363.1,842.6L1384.9,829.1M1384.9,825.6L1406.7,812.8L1428.5,825.6M1384.9,829.1L1406.7,842.6L1428.5,829.1M1428.5,825.6L1450.2,812.8L1472,825.6M1428.5,829.1L1450.2,842.6L1472,829.1M1483,825.6L1504.8,812.8L1526.6,825.6M1483,829.1L1504.8,842.6L1526.6,829.1M1526.6,825.6L1548.4,812.8L1570.1,825.6M1526.6,829.1L1548.4,842.6L1570.1,829.1M1570.1,825.6L1591.9,812.8L1613.7,825.6M1570.1,829.1L1591.9,842.6L1613.7,829.1M1613.7,825.6L1635.5,812.8L1657.2,825.6M1613.7,829.1L1635.5,842.6L1657.2,829.1M1668.2,825.6L1690,812.8L1711.8,825.6M1668.2,829.1L1690,842.6L1711.8,829.1M1711.8,825.6L1733.6,812.8L1755.4,825.6M1711.8,829.1L1733.6,842.6L1755.4,829.1M1755.4,825.6L1777.1,812.8L1798.9,825.6M1755.4,829.1L1777.1,842.6L1798.9,829.1M1798.9,825.6L1820.7,812.8L1842.5,825.6M1798.9,829.1L1820.7,842.6L1842.5,829.1M1853.5,825.6L1875,812.8L1896.6,825.6M1853.5,829.1L1875,842.6L1896.6,829.1M1896.6,825.6L1918.1,812.8L1939.7,825.6M1896.6,829.1L1918.1,842.6L1939.7,829.1M1939.7,825.6L1961.2,812.8L1982.8,825.6M1939.7,829.1L1961.2,842.6L1982.8,829.1M1982.8,825.6L2004.3,812.8L2025.9,825.6M1982.8,829.1L2004.3,842.6L2025.9,829.1" stroke="#e6e6e6" stroke-width="2.8" fill="none"/>
<path d="M558,825.6L579.6,812.8L601.3,825.6M558,829.1L579.6,842.6L601.3,829.1M601.3,825.6L622.9,812.8L644.5,825.6M601.3,829.1L622.9,842.6L644.5,829.1M644.5,825.6L666.2,812.8L687.8,825.6M644.5,829.1L666.2,842.6L687.8,829.1M687.8,825.6L709.5,812.8L731.1,825.6M687.8,829.1L709.5,842.6L731.1,829.1M742.1,825.6L763.9,812.8L785.7,825.6M742.1,829.1L763.9,842.6L785.7,829.1M785.7,825.6L807.4,812.8L829.2,825.6M785.7,829.1L807.4,842.6L829.2,829.1M829.2,825.6L851,812.8L872.8,825.6M829.2,829.1L851,842.6L872.8,829.1M872.8,825.6L894.6,812.8L916.3,825.6M872.8,829.1L894.6,842.6L916.3,829.1M927.3,825.6L949.1,812.8L970.9,825.6M927.3,829.1L949.1,842.6L970.9,829.1M970.9,825.6L992.7,812.8L1014.4,825.6M970.9,829.1L992.7,842.6L1014.4,829.1M1014.4,825.6L1036.2,812.8L1058,825.6M1014.4,829.1L1036.2,842.6L1058,829.1M1058,825.6L1079.8,812.8L1101.6,825.6M1058,829.1L1079.8,842.6L1101.6,829.1M1112.6,825.6L1134.3,812.8L1156.1,825.6M1112.6,829.1L1134.3,842.6L1156.1,829.1M1156.1,825.6L1177.9,812.8L1199.7,825.6M1156.1,829.1L1177.9,842.6L1199.7,829.1M1199.7,825.6L1221.5,812.8L1243.2,825.6M1199.7,829.1L1221.5,842.6L1243.2,829.1M1243.2,825.6L1265,812.8L1286.8,825.6M1243.2,829.1L1265,842.6L1286.8,829.1M1297.8,825.6L1319.6,812.8L1341.3,825.6M1297.8,829.1L1319.6,842.6L1341.3,829.1M1341.3,825.6L1363.1,812.8L1384.9,825.6M1341.3,829.1L1363.1,842.6L1384.9,829.1M1384.9,825.6L1406.7,812.8L1428.5,825.6M1384.9,829.1L1406.7,842.6L1428.5,829.1M1428.5,825.6L1450.2,812.8L1472,825.6M1428.5,829.1L1450.2,842.6L1472,829.1M1483,825.6L1504.8,812.8L1526.6,825.6M1483,829.1L1504.8,842.6L1526.6,829.1M1526.6,825.6L1548.4,812.8L1570.1,825.6M1526.6,829.1L1548.4,842.6L1570.1,829.1M1570.1,825.6L1591.9,812.8L1613.7,825.6M1570.1,829.1L1591.9,842.6L1613.7,829.1M1613.7,825.6L1635.5,812.8L1657.2,825.6M1613.7,829.1L1635.5,842.6L1657.2,829.1M1668.2,825.6L1690,812.8L1711.8,825.6M1668.2,829.1L1690,842.6L1711.8,829.1M1711.8,825.6L1733.6,812.8L1755.4,825.6M1711.8,829.1L1733.6,842.6L1755.4,829.1M1755.4,825.6L1777.1,812.8L1798.9,825.6M1755.4,829.1L1777.1,842.6L1798.9,829.1M1798.9,825.6L1820.7,812.8L1842.5,825.6M1798.9,829.1L1820.7,842.6L1842.5,829.1M1853.5,825.6L1875,812.8L1896.6,825.6M1853.5,829.1L1875,842.6L1896.6,829.1M1896.6,825.6L1918.1,812.8L1939.7,825.6M1896.6,829.1L1918.1,842.6L1939.7,829.1M1939.7,825.6L1961.2,812.8L1982.8,825.6M1939.7,829.1L1961.2,842.6L1982.8,829.1M1982.8,825.6L2004.3,812.8L2025.9,825.6M1982.8,829.1L2004.3,842.6L2025.9,829.1" stroke="#000" stroke-width="0.9" fill="none" opacity="0.7"/>
<line x1="463" y1="991.5" x2="2122" y2="991.5" stroke="#e8e8e8" stroke-width="2"/>
<line x1="464" y1="994.3" x2="2121" y2="994.3" stroke="#e4e4e4" stroke-width="1.3"/>
<line x1="463" y1="1007.2" x2="2122" y2="1007.2" stroke="#e8e8e8" stroke-width="1.7"/>
<line x1="463" y1="1010.8" x2="2122" y2="1010.8" stroke="#e8e8e8" stroke-width="1.7"/>
<line x1="464" y1="1024.4" x2="2121" y2="1024.4" stroke="#e4e4e4" stroke-width="1.3"/>
<line x1="463" y1="1027.2" x2="2122" y2="1027.2" stroke="#e8e8e8" stroke-width="2"/>
<line x1="464.5" y1="990.5" x2="464.5" y2="1028.2" stroke="#e8e8e8" stroke-width="1.8"/>
<line x1="466.8" y1="992.5" x2="466.8" y2="1026.2" stroke="#d8d8d8" stroke-width="1"/>
<rect x="458" y="990" width="6.5" height="5" fill="none" stroke="#e0e0e0" stroke-width="1.2"/>
<rect x="458" y="1006.5" width="6.5" height="5" fill="none" stroke="#e0e0e0" stroke-width="1.2"/>
<rect x="458" y="1023.7" width="6.5" height="5" fill="none" stroke="#e0e0e0" stroke-width="1.2"/>
<line x1="2120.5" y1="990.5" x2="2120.5" y2="1028.2" stroke="#e8e8e8" stroke-width="1.8"/>
<line x1="2118.2" y1="992.5" x2="2118.2" y2="1026.2" stroke="#d8d8d8" stroke-width="1"/>
<rect x="2120.5" y="990" width="6.5" height="5" fill="none" stroke="#e0e0e0" stroke-width="1.2"/>
<rect x="2120.5" y="1006.5" width="6.5" height="5" fill="none" stroke="#e0e0e0" stroke-width="1.2"/>
<rect x="2120.5" y="1023.7" width="6.5" height="5" fill="none" stroke="#e0e0e0" stroke-width="1.2"/>
<rect x="638.9" y="990.5" width="9" height="37.7" fill="none" stroke="#ececec" stroke-width="1.5"/>
<line x1="643.4" y1="992.5" x2="643.4" y2="1026.2" stroke="#9a9a9a" stroke-width="0.8"/>
<rect x="824.2" y="990.5" width="9" height="37.7" fill="none" stroke="#ececec" stroke-width="1.5"/>
<line x1="828.7" y1="992.5" x2="828.7" y2="1026.2" stroke="#9a9a9a" stroke-width="0.8"/>
<rect x="1009.5" y="990.5" width="9" height="37.7" fill="none" stroke="#ececec" stroke-width="1.5"/>
<line x1="1014" y1="992.5" x2="1014" y2="1026.2" stroke="#9a9a9a" stroke-width="0.8"/>
<rect x="1194.8" y="990.5" width="9" height="37.7" fill="none" stroke="#ececec" stroke-width="1.5"/>
<line x1="1199.3" y1="992.5" x2="1199.3" y2="1026.2" stroke="#9a9a9a" stroke-width="0.8"/>
<rect x="1380.1" y="990.5" width="9" height="37.7" fill="none" stroke="#ececec" stroke-width="1.5"/>
<line x1="1384.6" y1="992.5" x2="1384.6" y2="1026.2" stroke="#9a9a9a" stroke-width="0.8"/>
<rect x="1565.4" y="990.5" width="9" height="37.7" fill="none" stroke="#ececec" stroke-width="1.5"/>
<line x1="1569.9" y1="992.5" x2="1569.9" y2="1026.2" stroke="#9a9a9a" stroke-width="0.8"/>
<rect x="1750.7" y="990.5" width="9" height="37.7" fill="none" stroke="#ececec" stroke-width="1.5"/>
<line x1="1755.2" y1="992.5" x2="1755.2" y2="1026.2" stroke="#9a9a9a" stroke-width="0.8"/>
<rect x="1936" y="990.5" width="9" height="37.7" fill="none" stroke="#ececec" stroke-width="1.5"/>
<line x1="1940.5" y1="992.5" x2="1940.5" y2="1026.2" stroke="#9a9a9a" stroke-width="0.8"/>
<path d="M521.8,991.5V1027.2M524.8,991.5V1027.2M579.6,991.5V1027.2M582.6,991.5V1027.2M705.2,991.5V1027.2M708.2,991.5V1027.2M763.9,991.5V1027.2M766.9,991.5V1027.2M890.5,991.5V1027.2M893.5,991.5V1027.2M949.2,991.5V1027.2M952.2,991.5V1027.2M1075.8,991.5V1027.2M1078.8,991.5V1027.2M1134.5,991.5V1027.2M1137.5,991.5V1027.2M1261.1,991.5V1027.2M1264.1,991.5V1027.2M1319.8,991.5V1027.2M1322.8,991.5V1027.2M1446.4,991.5V1027.2M1449.4,991.5V1027.2M1505.1,991.5V1027.2M1508.1,991.5V1027.2M1631.7,991.5V1027.2M1634.7,991.5V1027.2M1690.4,991.5V1027.2M1693.4,991.5V1027.2M1817,991.5V1027.2M1820,991.5V1027.2M1875.7,991.5V1027.2M1878.7,991.5V1027.2M2001.7,991.5V1027.2M2004.7,991.5V1027.2M2059.8,991.5V1027.2M2062.8,991.5V1027.2" stroke="#cfcfcf" stroke-width="1" fill="none"/>
<path d="M466.5,1007.2L487.9,994.5L509.4,1007.2M466.5,1010.8L487.9,1024.2L509.4,1010.8M509.4,1007.2L530.8,994.5L552.2,1007.2M509.4,1010.8L530.8,1024.2L552.2,1010.8M552.2,1007.2L573.6,994.5L595.1,1007.2M552.2,1010.8L573.6,1024.2L595.1,1010.8M595,1007.2L616.5,994.5L637.9,1007.2M595,1010.8L616.5,1024.2L637.9,1010.8M648.9,1007.2L670.7,994.5L692.5,1007.2M648.9,1010.8L670.7,1024.2L692.5,1010.8M692.5,1007.2L714.3,994.5L736.1,1007.2M692.5,1010.8L714.3,1024.2L736.1,1010.8M736,1007.2L757.8,994.5L779.6,1007.2M736,1010.8L757.8,1024.2L779.6,1010.8M779.6,1007.2L801.4,994.5L823.2,1007.2M779.6,1010.8L801.4,1024.2L823.2,1010.8M834.2,1007.2L856,994.5L877.8,1007.2M834.2,1010.8L856,1024.2L877.8,1010.8M877.8,1007.2L899.6,994.5L921.4,1007.2M877.8,1010.8L899.6,1024.2L921.4,1010.8M921.4,1007.2L943.1,994.5L964.9,1007.2M921.4,1010.8L943.1,1024.2L964.9,1010.8M964.9,1007.2L986.7,994.5L1008.5,1007.2M964.9,1010.8L986.7,1024.2L1008.5,1010.8M1019.5,1007.2L1041.3,994.5L1063.1,1007.2M1019.5,1010.8L1041.3,1024.2L1063.1,1010.8M1063.1,1007.2L1084.9,994.5L1106.7,1007.2M1063.1,1010.8L1084.9,1024.2L1106.7,1010.8M1106.7,1007.2L1128.4,994.5L1150.2,1007.2M1106.7,1010.8L1128.4,1024.2L1150.2,1010.8M1150.2,1007.2L1172,994.5L1193.8,1007.2M1150.2,1010.8L1172,1024.2L1193.8,1010.8M1204.8,1007.2L1226.6,994.5L1248.4,1007.2M1204.8,1010.8L1226.6,1024.2L1248.4,1010.8M1248.4,1007.2L1270.2,994.5L1291.9,1007.2M1248.4,1010.8L1270.2,1024.2L1291.9,1010.8M1292,1007.2L1313.7,994.5L1335.5,1007.2M1292,1010.8L1313.7,1024.2L1335.5,1010.8M1335.5,1007.2L1357.3,994.5L1379.1,1007.2M1335.5,1010.8L1357.3,1024.2L1379.1,1010.8M1390.1,1007.2L1411.9,994.5L1433.7,1007.2M1390.1,1010.8L1411.9,1024.2L1433.7,1010.8M1433.7,1007.2L1455.5,994.5L1477.2,1007.2M1433.7,1010.8L1455.5,1024.2L1477.2,1010.8M1477.2,1007.2L1499,994.5L1520.8,1007.2M1477.2,1010.8L1499,1024.2L1520.8,1010.8M1520.8,1007.2L1542.6,994.5L1564.4,1007.2M1520.8,1010.8L1542.6,1024.2L1564.4,1010.8M1575.4,1007.2L1597.2,994.5L1619,1007.2M1575.4,1010.8L1597.2,1024.2L1619,1010.8M1619,1007.2L1640.8,994.5L1662.6,1007.2M1619,1010.8L1640.8,1024.2L1662.6,1010.8M1662.6,1007.2L1684.3,994.5L1706.1,1007.2M1662.6,1010.8L1684.3,1024.2L1706.1,1010.8M1706.1,1007.2L1727.9,994.5L1749.7,1007.2M1706.1,1010.8L1727.9,1024.2L1749.7,1010.8M1760.7,1007.2L1782.5,994.5L1804.3,1007.2M1760.7,1010.8L1782.5,1024.2L1804.3,1010.8M1804.3,1007.2L1826.1,994.5L1847.8,1007.2M1804.3,1010.8L1826.1,1024.2L1847.8,1010.8M1847.9,1007.2L1869.6,994.5L1891.4,1007.2M1847.9,1010.8L1869.6,1024.2L1891.4,1010.8M1891.4,1007.2L1913.2,994.5L1935,1007.2M1891.4,1010.8L1913.2,1024.2L1935,1010.8M1946,1007.2L1967.6,994.5L1989.1,1007.2M1946,1010.8L1967.6,1024.2L1989.1,1010.8M1989.1,1007.2L2010.7,994.5L2032.2,1007.2M1989.1,1010.8L2010.7,1024.2L2032.2,1010.8M2032.2,1007.2L2053.8,994.5L2075.4,1007.2M2032.2,1010.8L2053.8,1024.2L2075.4,1010.8M2075.4,1007.2L2096.9,994.5L2118.5,1007.2M2075.4,1010.8L2096.9,1024.2L2118.5,1010.8" stroke="#e6e6e6" stroke-width="2.8" fill="none"/>
<path d="M466.5,1007.2L487.9,994.5L509.4,1007.2M466.5,1010.8L487.9,1024.2L509.4,1010.8M509.4,1007.2L530.8,994.5L552.2,1007.2M509.4,1010.8L530.8,1024.2L552.2,1010.8M552.2,1007.2L573.6,994.5L595.1,1007.2M552.2,1010.8L573.6,1024.2L595.1,1010.8M595,1007.2L616.5,994.5L637.9,1007.2M595,1010.8L616.5,1024.2L637.9,1010.8M648.9,1007.2L670.7,994.5L692.5,1007.2M648.9,1010.8L670.7,1024.2L692.5,1010.8M692.5,1007.2L714.3,994.5L736.1,1007.2M692.5,1010.8L714.3,1024.2L736.1,1010.8M736,1007.2L757.8,994.5L779.6,1007.2M736,1010.8L757.8,1024.2L779.6,1010.8M779.6,1007.2L801.4,994.5L823.2,1007.2M779.6,1010.8L801.4,1024.2L823.2,1010.8M834.2,1007.2L856,994.5L877.8,1007.2M834.2,1010.8L856,1024.2L877.8,1010.8M877.8,1007.2L899.6,994.5L921.4,1007.2M877.8,1010.8L899.6,1024.2L921.4,1010.8M921.4,1007.2L943.1,994.5L964.9,1007.2M921.4,1010.8L943.1,1024.2L964.9,1010.8M964.9,1007.2L986.7,994.5L1008.5,1007.2M964.9,1010.8L986.7,1024.2L1008.5,1010.8M1019.5,1007.2L1041.3,994.5L1063.1,1007.2M1019.5,1010.8L1041.3,1024.2L1063.1,1010.8M1063.1,1007.2L1084.9,994.5L1106.7,1007.2M1063.1,1010.8L1084.9,1024.2L1106.7,1010.8M1106.7,1007.2L1128.4,994.5L1150.2,1007.2M1106.7,1010.8L1128.4,1024.2L1150.2,1010.8M1150.2,1007.2L1172,994.5L1193.8,1007.2M1150.2,1010.8L1172,1024.2L1193.8,1010.8M1204.8,1007.2L1226.6,994.5L1248.4,1007.2M1204.8,1010.8L1226.6,1024.2L1248.4,1010.8M1248.4,1007.2L1270.2,994.5L1291.9,1007.2M1248.4,1010.8L1270.2,1024.2L1291.9,1010.8M1292,1007.2L1313.7,994.5L1335.5,1007.2M1292,1010.8L1313.7,1024.2L1335.5,1010.8M1335.5,1007.2L1357.3,994.5L1379.1,1007.2M1335.5,1010.8L1357.3,1024.2L1379.1,1010.8M1390.1,1007.2L1411.9,994.5L1433.7,1007.2M1390.1,1010.8L1411.9,1024.2L1433.7,1010.8M1433.7,1007.2L1455.5,994.5L1477.2,1007.2M1433.7,1010.8L1455.5,1024.2L1477.2,1010.8M1477.2,1007.2L1499,994.5L1520.8,1007.2M1477.2,1010.8L1499,1024.2L1520.8,1010.8M1520.8,1007.2L1542.6,994.5L1564.4,1007.2M1520.8,1010.8L1542.6,1024.2L1564.4,1010.8M1575.4,1007.2L1597.2,994.5L1619,1007.2M1575.4,1010.8L1597.2,1024.2L1619,1010.8M1619,1007.2L1640.8,994.5L1662.6,1007.2M1619,1010.8L1640.8,1024.2L1662.6,1010.8M1662.6,1007.2L1684.3,994.5L1706.1,1007.2M1662.6,1010.8L1684.3,1024.2L1706.1,1010.8M1706.1,1007.2L1727.9,994.5L1749.7,1007.2M1706.1,1010.8L1727.9,1024.2L1749.7,1010.8M1760.7,1007.2L1782.5,994.5L1804.3,1007.2M1760.7,1010.8L1782.5,1024.2L1804.3,1010.8M1804.3,1007.2L1826.1,994.5L1847.8,1007.2M1804.3,1010.8L1826.1,1024.2L1847.8,1010.8M1847.9,1007.2L1869.6,994.5L1891.4,1007.2M1847.9,1010.8L1869.6,1024.2L1891.4,1010.8M1891.4,1007.2L1913.2,994.5L1935,1007.2M1891.4,1010.8L1913.2,1024.2L1935,1010.8M1946,1007.2L1967.6,994.5L1989.1,1007.2M1946,1010.8L1967.6,1024.2L1989.1,1010.8M1989.1,1007.2L2010.7,994.5L2032.2,1007.2M1989.1,1010.8L2010.7,1024.2L2032.2,1010.8M2032.2,1007.2L2053.8,994.5L2075.4,1007.2M2032.2,1010.8L2053.8,1024.2L2075.4,1010.8M2075.4,1007.2L2096.9,994.5L2118.5,1007.2M2075.4,1010.8L2096.9,1024.2L2118.5,1010.8" stroke="#000" stroke-width="0.9" fill="none" opacity="0.7"/>
<path d="M498,994.5 a3.6,3.6 0 0 0 7.2,0M509,994.5 a3.6,3.6 0 0 0 7.2,0M520,994.5 a3.6,3.6 0 0 0 7.2,0M531,994.5 a3.6,3.6 0 0 0 7.2,0M542,994.5 a3.6,3.6 0 0 0 7.2,0M553,994.5 a3.6,3.6 0 0 0 7.2,0M564,994.5 a3.6,3.6 0 0 0 7.2,0M575,994.5 a3.6,3.6 0 0 0 7.2,0M586,994.5 a3.6,3.6 0 0 0 7.2,0M597,994.5 a3.6,3.6 0 0 0 7.2,0M608,994.5 a3.6,3.6 0 0 0 7.2,0M619,994.5 a3.6,3.6 0 0 0 7.2,0M630,994.5 a3.6,3.6 0 0 0 7.2,0M641,994.5 a3.6,3.6 0 0 0 7.2,0M652,994.5 a3.6,3.6 0 0 0 7.2,0M663,994.5 a3.6,3.6 0 0 0 7.2,0M674,994.5 a3.6,3.6 0 0 0 7.2,0M685,994.5 a3.6,3.6 0 0 0 7.2,0M696,994.5 a3.6,3.6 0 0 0 7.2,0M707,994.5 a3.6,3.6 0 0 0 7.2,0M718,994.5 a3.6,3.6 0 0 0 7.2,0M729,994.5 a3.6,3.6 0 0 0 7.2,0M740,994.5 a3.6,3.6 0 0 0 7.2,0M751,994.5 a3.6,3.6 0 0 0 7.2,0M762,994.5 a3.6,3.6 0 0 0 7.2,0M773,994.5 a3.6,3.6 0 0 0 7.2,0M784,994.5 a3.6,3.6 0 0 0 7.2,0M795,994.5 a3.6,3.6 0 0 0 7.2,0M806,994.5 a3.6,3.6 0 0 0 7.2,0M817,994.5 a3.6,3.6 0 0 0 7.2,0M828,994.5 a3.6,3.6 0 0 0 7.2,0M839,994.5 a3.6,3.6 0 0 0 7.2,0M850,994.5 a3.6,3.6 0 0 0 7.2,0M861,994.5 a3.6,3.6 0 0 0 7.2,0M872,994.5 a3.6,3.6 0 0 0 7.2,0M883,994.5 a3.6,3.6 0 0 0 7.2,0M894,994.5 a3.6,3.6 0 0 0 7.2,0M905,994.5 a3.6,3.6 0 0 0 7.2,0M916,994.5 a3.6,3.6 0 0 0 7.2,0M927,994.5 a3.6,3.6 0 0 0 7.2,0M938,994.5 a3.6,3.6 0 0 0 7.2,0M949,994.5 a3.6,3.6 0 0 0 7.2,0M960,994.5 a3.6,3.6 0 0 0 7.2,0M971,994.5 a3.6,3.6 0 0 0 7.2,0M982,994.5 a3.6,3.6 0 0 0 7.2,0M993,994.5 a3.6,3.6 0 0 0 7.2,0M1004,994.5 a3.6,3.6 0 0 0 7.2,0M1015,994.5 a3.6,3.6 0 0 0 7.2,0M1026,994.5 a3.6,3.6 0 0 0 7.2,0M1037,994.5 a3.6,3.6 0 0 0 7.2,0M1048,994.5 a3.6,3.6 0 0 0 7.2,0M1059,994.5 a3.6,3.6 0 0 0 7.2,0M1070,994.5 a3.6,3.6 0 0 0 7.2,0M1081,994.5 a3.6,3.6 0 0 0 7.2,0M1092,994.5 a3.6,3.6 0 0 0 7.2,0M1103,994.5 a3.6,3.6 0 0 0 7.2,0M1114,994.5 a3.6,3.6 0 0 0 7.2,0M1125,994.5 a3.6,3.6 0 0 0 7.2,0M1136,994.5 a3.6,3.6 0 0 0 7.2,0M1147,994.5 a3.6,3.6 0 0 0 7.2,0M1158,994.5 a3.6,3.6 0 0 0 7.2,0M1169,994.5 a3.6,3.6 0 0 0 7.2,0M1180,994.5 a3.6,3.6 0 0 0 7.2,0M1191,994.5 a3.6,3.6 0 0 0 7.2,0M1202,994.5 a3.6,3.6 0 0 0 7.2,0M1213,994.5 a3.6,3.6 0 0 0 7.2,0M1224,994.5 a3.6,3.6 0 0 0 7.2,0M1235,994.5 a3.6,3.6 0 0 0 7.2,0M1246,994.5 a3.6,3.6 0 0 0 7.2,0M1257,994.5 a3.6,3.6 0 0 0 7.2,0M1268,994.5 a3.6,3.6 0 0 0 7.2,0M1279,994.5 a3.6,3.6 0 0 0 7.2,0M1290,994.5 a3.6,3.6 0 0 0 7.2,0M1301,994.5 a3.6,3.6 0 0 0 7.2,0M1312,994.5 a3.6,3.6 0 0 0 7.2,0M1323,994.5 a3.6,3.6 0 0 0 7.2,0M1334,994.5 a3.6,3.6 0 0 0 7.2,0M1345,994.5 a3.6,3.6 0 0 0 7.2,0M1356,994.5 a3.6,3.6 0 0 0 7.2,0M1367,994.5 a3.6,3.6 0 0 0 7.2,0M1378,994.5 a3.6,3.6 0 0 0 7.2,0M1389,994.5 a3.6,3.6 0 0 0 7.2,0M1400,994.5 a3.6,3.6 0 0 0 7.2,0M1411,994.5 a3.6,3.6 0 0 0 7.2,0M1422,994.5 a3.6,3.6 0 0 0 7.2,0M1433,994.5 a3.6,3.6 0 0 0 7.2,0M1444,994.5 a3.6,3.6 0 0 0 7.2,0M1455,994.5 a3.6,3.6 0 0 0 7.2,0M1466,994.5 a3.6,3.6 0 0 0 7.2,0M1477,994.5 a3.6,3.6 0 0 0 7.2,0M1488,994.5 a3.6,3.6 0 0 0 7.2,0M1499,994.5 a3.6,3.6 0 0 0 7.2,0M1510,994.5 a3.6,3.6 0 0 0 7.2,0M1521,994.5 a3.6,3.6 0 0 0 7.2,0M1532,994.5 a3.6,3.6 0 0 0 7.2,0M1543,994.5 a3.6,3.6 0 0 0 7.2,0M1554,994.5 a3.6,3.6 0 0 0 7.2,0M1565,994.5 a3.6,3.6 0 0 0 7.2,0M1576,994.5 a3.6,3.6 0 0 0 7.2,0M1587,994.5 a3.6,3.6 0 0 0 7.2,0M1598,994.5 a3.6,3.6 0 0 0 7.2,0M1609,994.5 a3.6,3.6 0 0 0 7.2,0M1620,994.5 a3.6,3.6 0 0 0 7.2,0M1631,994.5 a3.6,3.6 0 0 0 7.2,0M1642,994.5 a3.6,3.6 0 0 0 7.2,0M1653,994.5 a3.6,3.6 0 0 0 7.2,0M1664,994.5 a3.6,3.6 0 0 0 7.2,0M1675,994.5 a3.6,3.6 0 0 0 7.2,0M1686,994.5 a3.6,3.6 0 0 0 7.2,0M1697,994.5 a3.6,3.6 0 0 0 7.2,0M1708,994.5 a3.6,3.6 0 0 0 7.2,0M1719,994.5 a3.6,3.6 0 0 0 7.2,0M1730,994.5 a3.6,3.6 0 0 0 7.2,0M1741,994.5 a3.6,3.6 0 0 0 7.2,0M1752,994.5 a3.6,3.6 0 0 0 7.2,0M1763,994.5 a3.6,3.6 0 0 0 7.2,0M1774,994.5 a3.6,3.6 0 0 0 7.2,0M1785,994.5 a3.6,3.6 0 0 0 7.2,0M1796,994.5 a3.6,3.6 0 0 0 7.2,0M1807,994.5 a3.6,3.6 0 0 0 7.2,0M1818,994.5 a3.6,3.6 0 0 0 7.2,0M1829,994.5 a3.6,3.6 0 0 0 7.2,0M1840,994.5 a3.6,3.6 0 0 0 7.2,0M1851,994.5 a3.6,3.6 0 0 0 7.2,0M1862,994.5 a3.6,3.6 0 0 0 7.2,0M1873,994.5 a3.6,3.6 0 0 0 7.2,0M1884,994.5 a3.6,3.6 0 0 0 7.2,0M1895,994.5 a3.6,3.6 0 0 0 7.2,0" stroke="#d6d6d6" stroke-width="1.1" fill="none"/>
<line x1="553.7" y1="1370.7" x2="2029" y2="1370.7" stroke="#e8e8e8" stroke-width="2"/>
<line x1="554.7" y1="1373.5" x2="2028" y2="1373.5" stroke="#e4e4e4" stroke-width="1.3"/>
<line x1="553.7" y1="1386.9" x2="2029" y2="1386.9" stroke="#e8e8e8" stroke-width="1.7"/>
<line x1="553.7" y1="1390.6" x2="2029" y2="1390.6" stroke="#e8e8e8" stroke-width="1.7"/>
<line x1="554.7" y1="1404.8" x2="2028" y2="1404.8" stroke="#e4e4e4" stroke-width="1.3"/>
<line x1="553.7" y1="1407.6" x2="2029" y2="1407.6" stroke="#e8e8e8" stroke-width="2"/>
<line x1="555.2" y1="1369.7" x2="555.2" y2="1408.6" stroke="#e8e8e8" stroke-width="1.8"/>
<line x1="557.5" y1="1371.7" x2="557.5" y2="1406.6" stroke="#d8d8d8" stroke-width="1"/>
<rect x="548.7" y="1369.2" width="6.5" height="5" fill="none" stroke="#e0e0e0" stroke-width="1.2"/>
<rect x="548.7" y="1386.3" width="6.5" height="5" fill="none" stroke="#e0e0e0" stroke-width="1.2"/>
<rect x="548.7" y="1404.1" width="6.5" height="5" fill="none" stroke="#e0e0e0" stroke-width="1.2"/>
<line x1="2027.5" y1="1369.7" x2="2027.5" y2="1408.6" stroke="#e8e8e8" stroke-width="1.8"/>
<line x1="2025.2" y1="1371.7" x2="2025.2" y2="1406.6" stroke="#d8d8d8" stroke-width="1"/>
<rect x="2027.5" y="1369.2" width="6.5" height="5" fill="none" stroke="#e0e0e0" stroke-width="1.2"/>
<rect x="2027.5" y="1386.3" width="6.5" height="5" fill="none" stroke="#e0e0e0" stroke-width="1.2"/>
<rect x="2027.5" y="1404.1" width="6.5" height="5" fill="none" stroke="#e0e0e0" stroke-width="1.2"/>
<rect x="732.1" y="1369.7" width="9" height="38.9" fill="none" stroke="#ececec" stroke-width="1.5"/>
<line x1="736.6" y1="1371.7" x2="736.6" y2="1406.6" stroke="#9a9a9a" stroke-width="0.8"/>
<rect x="917.3" y="1369.7" width="9" height="38.9" fill="none" stroke="#ececec" stroke-width="1.5"/>
<line x1="921.8" y1="1371.7" x2="921.8" y2="1406.6" stroke="#9a9a9a" stroke-width="0.8"/>
<rect x="1102.6" y="1369.7" width="9" height="38.9" fill="none" stroke="#ececec" stroke-width="1.5"/>
<line x1="1107.1" y1="1371.7" x2="1107.1" y2="1406.6" stroke="#9a9a9a" stroke-width="0.8"/>
<rect x="1287.8" y="1369.7" width="9" height="38.9" fill="none" stroke="#ececec" stroke-width="1.5"/>
<line x1="1292.3" y1="1371.7" x2="1292.3" y2="1406.6" stroke="#9a9a9a" stroke-width="0.8"/>
<rect x="1473" y="1369.7" width="9" height="38.9" fill="none" stroke="#ececec" stroke-width="1.5"/>
<line x1="1477.5" y1="1371.7" x2="1477.5" y2="1406.6" stroke="#9a9a9a" stroke-width="0.8"/>
<rect x="1658.2" y="1369.7" width="9" height="38.9" fill="none" stroke="#ececec" stroke-width="1.5"/>
<line x1="1662.8" y1="1371.7" x2="1662.8" y2="1406.6" stroke="#9a9a9a" stroke-width="0.8"/>
<rect x="1843.5" y="1369.7" width="9" height="38.9" fill="none" stroke="#ececec" stroke-width="1.5"/>
<line x1="1848" y1="1371.7" x2="1848" y2="1406.6" stroke="#9a9a9a" stroke-width="0.8"/>
<path d="M613.3,1370.7V1407.6M616.3,1370.7V1407.6M672,1370.7V1407.6M675,1370.7V1407.6M798.3,1370.7V1407.6M801.3,1370.7V1407.6M857.1,1370.7V1407.6M860.1,1370.7V1407.6M983.6,1370.7V1407.6M986.6,1370.7V1407.6M1042.3,1370.7V1407.6M1045.3,1370.7V1407.6M1168.8,1370.7V1407.6M1171.8,1370.7V1407.6M1227.5,1370.7V1407.6M1230.5,1370.7V1407.6M1354,1370.7V1407.6M1357,1370.7V1407.6M1412.8,1370.7V1407.6M1415.8,1370.7V1407.6M1539.3,1370.7V1407.6M1542.3,1370.7V1407.6M1598,1370.7V1407.6M1601,1370.7V1407.6M1724.5,1370.7V1407.6M1727.5,1370.7V1407.6M1783.2,1370.7V1407.6M1786.2,1370.7V1407.6M1909,1370.7V1407.6M1912,1370.7V1407.6M1967,1370.7V1407.6M1970,1370.7V1407.6" stroke="#cfcfcf" stroke-width="1" fill="none"/>
<path d="M557.2,1386.9L578.9,1373.7L600.7,1386.9M557.2,1390.6L578.9,1404.6L600.7,1390.6M600.7,1386.9L622.4,1373.7L644.2,1386.9M600.7,1390.6L622.4,1404.6L644.2,1390.6M644.2,1386.9L665.9,1373.7L687.6,1386.9M644.2,1390.6L665.9,1404.6L687.6,1390.6M687.6,1386.9L709.4,1373.7L731.1,1386.9M687.6,1390.6L709.4,1404.6L731.1,1390.6M742.1,1386.9L763.9,1373.7L785.7,1386.9M742.1,1390.6L763.9,1404.6L785.7,1390.6M785.7,1386.9L807.4,1373.7L829.2,1386.9M785.7,1390.6L807.4,1404.6L829.2,1390.6M829.2,1386.9L851,1373.7L872.8,1386.9M829.2,1390.6L851,1404.6L872.8,1390.6M872.8,1386.9L894.6,1373.7L916.3,1386.9M872.8,1390.6L894.6,1404.6L916.3,1390.6M927.3,1386.9L949.1,1373.7L970.9,1386.9M927.3,1390.6L949.1,1404.6L970.9,1390.6M970.9,1386.9L992.7,1373.7L1014.4,1386.9M970.9,1390.6L992.7,1404.6L1014.4,1390.6M1014.4,1386.9L1036.2,1373.7L1058,1386.9M1014.4,1390.6L1036.2,1404.6L1058,1390.6M1058,1386.9L1079.8,1373.7L1101.6,1386.9M1058,1390.6L1079.8,1404.6L1101.6,1390.6M1112.6,1386.9L1134.3,1373.7L1156.1,1386.9M1112.6,1390.6L1134.3,1404.6L1156.1,1390.6M1156.1,1386.9L1177.9,1373.7L1199.7,1386.9M1156.1,1390.6L1177.9,1404.6L1199.7,1390.6M1199.7,1386.9L1221.5,1373.7L1243.2,1386.9M1199.7,1390.6L1221.5,1404.6L1243.2,1390.6M1243.2,1386.9L1265,1373.7L1286.8,1386.9M1243.2,1390.6L1265,1404.6L1286.8,1390.6M1297.8,1386.9L1319.6,1373.7L1341.3,1386.9M1297.8,1390.6L1319.6,1404.6L1341.3,1390.6M1341.3,1386.9L1363.1,1373.7L1384.9,1386.9M1341.3,1390.6L1363.1,1404.6L1384.9,1390.6M1384.9,1386.9L1406.7,1373.7L1428.5,1386.9M1384.9,1390.6L1406.7,1404.6L1428.5,1390.6M1428.5,1386.9L1450.2,1373.7L1472,1386.9M1428.5,1390.6L1450.2,1404.6L1472,1390.6M1483,1386.9L1504.8,1373.7L1526.6,1386.9M1483,1390.6L1504.8,1404.6L1526.6,1390.6M1526.6,1386.9L1548.4,1373.7L1570.1,1386.9M1526.6,1390.6L1548.4,1404.6L1570.1,1390.6M1570.1,1386.9L1591.9,1373.7L1613.7,1386.9M1570.1,1390.6L1591.9,1404.6L1613.7,1390.6M1613.7,1386.9L1635.5,1373.7L1657.2,1386.9M1613.7,1390.6L1635.5,1404.6L1657.2,1390.6M1668.2,1386.9L1690,1373.7L1711.8,1386.9M1668.2,1390.6L1690,1404.6L1711.8,1390.6M1711.8,1386.9L1733.6,1373.7L1755.4,1386.9M1711.8,1390.6L1733.6,1404.6L1755.4,1390.6M1755.4,1386.9L1777.1,1373.7L1798.9,1386.9M1755.4,1390.6L1777.1,1404.6L1798.9,1390.6M1798.9,1386.9L1820.7,1373.7L1842.5,1386.9M1798.9,1390.6L1820.7,1404.6L1842.5,1390.6M1853.5,1386.9L1875,1373.7L1896.5,1386.9M1853.5,1390.6L1875,1404.6L1896.5,1390.6M1896.5,1386.9L1918,1373.7L1939.5,1386.9M1896.5,1390.6L1918,1404.6L1939.5,1390.6M1939.5,1386.9L1961,1373.7L1982.5,1386.9M1939.5,1390.6L1961,1404.6L1982.5,1390.6M1982.5,1386.9L2004,1373.7L2025.5,1386.9M1982.5,1390.6L2004,1404.6L2025.5,1390.6" stroke="#e6e6e6" stroke-width="2.8" fill="none"/>
<path d="M557.2,1386.9L578.9,1373.7L600.7,1386.9M557.2,1390.6L578.9,1404.6L600.7,1390.6M600.7,1386.9L622.4,1373.7L644.2,1386.9M600.7,1390.6L622.4,1404.6L644.2,1390.6M644.2,1386.9L665.9,1373.7L687.6,1386.9M644.2,1390.6L665.9,1404.6L687.6,1390.6M687.6,1386.9L709.4,1373.7L731.1,1386.9M687.6,1390.6L709.4,1404.6L731.1,1390.6M742.1,1386.9L763.9,1373.7L785.7,1386.9M742.1,1390.6L763.9,1404.6L785.7,1390.6M785.7,1386.9L807.4,1373.7L829.2,1386.9M785.7,1390.6L807.4,1404.6L829.2,1390.6M829.2,1386.9L851,1373.7L872.8,1386.9M829.2,1390.6L851,1404.6L872.8,1390.6M872.8,1386.9L894.6,1373.7L916.3,1386.9M872.8,1390.6L894.6,1404.6L916.3,1390.6M927.3,1386.9L949.1,1373.7L970.9,1386.9M927.3,1390.6L949.1,1404.6L970.9,1390.6M970.9,1386.9L992.7,1373.7L1014.4,1386.9M970.9,1390.6L992.7,1404.6L1014.4,1390.6M1014.4,1386.9L1036.2,1373.7L1058,1386.9M1014.4,1390.6L1036.2,1404.6L1058,1390.6M1058,1386.9L1079.8,1373.7L1101.6,1386.9M1058,1390.6L1079.8,1404.6L1101.6,1390.6M1112.6,1386.9L1134.3,1373.7L1156.1,1386.9M1112.6,1390.6L1134.3,1404.6L1156.1,1390.6M1156.1,1386.9L1177.9,1373.7L1199.7,1386.9M1156.1,1390.6L1177.9,1404.6L1199.7,1390.6M1199.7,1386.9L1221.5,1373.7L1243.2,1386.9M1199.7,1390.6L1221.5,1404.6L1243.2,1390.6M1243.2,1386.9L1265,1373.7L1286.8,1386.9M1243.2,1390.6L1265,1404.6L1286.8,1390.6M1297.8,1386.9L1319.6,1373.7L1341.3,1386.9M1297.8,1390.6L1319.6,1404.6L1341.3,1390.6M1341.3,1386.9L1363.1,1373.7L1384.9,1386.9M1341.3,1390.6L1363.1,1404.6L1384.9,1390.6M1384.9,1386.9L1406.7,1373.7L1428.5,1386.9M1384.9,1390.6L1406.7,1404.6L1428.5,1390.6M1428.5,1386.9L1450.2,1373.7L1472,1386.9M1428.5,1390.6L1450.2,1404.6L1472,1390.6M1483,1386.9L1504.8,1373.7L1526.6,1386.9M1483,1390.6L1504.8,1404.6L1526.6,1390.6M1526.6,1386.9L1548.4,1373.7L1570.1,1386.9M1526.6,1390.6L1548.4,1404.6L1570.1,1390.6M1570.1,1386.9L1591.9,1373.7L1613.7,1386.9M1570.1,1390.6L1591.9,1404.6L1613.7,1390.6M1613.7,1386.9L1635.5,1373.7L1657.2,1386.9M1613.7,1390.6L1635.5,1404.6L1657.2,1390.6M1668.2,1386.9L1690,1373.7L1711.8,1386.9M1668.2,1390.6L1690,1404.6L1711.8,1390.6M1711.8,1386.9L1733.6,1373.7L1755.4,1386.9M1711.8,1390.6L1733.6,1404.6L1755.4,1390.6M1755.4,1386.9L1777.1,1373.7L1798.9,1386.9M1755.4,1390.6L1777.1,1404.6L1798.9,1390.6M1798.9,1386.9L1820.7,1373.7L1842.5,1386.9M1798.9,1390.6L1820.7,1404.6L1842.5,1390.6M1853.5,1386.9L1875,1373.7L1896.5,1386.9M1853.5,1390.6L1875,1404.6L1896.5,1390.6M1896.5,1386.9L1918,1373.7L1939.5,1386.9M1896.5,1390.6L1918,1404.6L1939.5,1390.6M1939.5,1386.9L1961,1373.7L1982.5,1386.9M1939.5,1390.6L1961,1404.6L1982.5,1390.6M1982.5,1386.9L2004,1373.7L2025.5,1386.9M1982.5,1390.6L2004,1404.6L2025.5,1390.6" stroke="#000" stroke-width="0.9" fill="none" opacity="0.7"/>
<polygon points="644.5,327.2 667.8,350.5 644.5,373.8 621.2,350.5" fill="#fbfbfb" stroke="none" stroke-width="0"/>
<polygon points="623.2,350.5 632.9,340.9 643,350.5 632.9,360.1" fill="#e6ee14" stroke="none" stroke-width="0" opacity="0.9"/>
<polygon points="665.8,350.5 656.1,340.9 646,350.5 656.1,360.1" fill="#e6ee14" stroke="none" stroke-width="0" opacity="0.9"/>
<path d="M625.2,347L641.5,354M625.2,354L641.5,347M663.8,347L647.5,354M663.8,354L647.5,347" stroke="#ffffff" stroke-width="1.6" fill="none" opacity="0.45"/>
<line x1="627.7" y1="333.7" x2="632.9" y2="338.9" stroke="#d8d8d8" stroke-width="1.1"/>
<line x1="661.3" y1="333.7" x2="656.1" y2="338.9" stroke="#d8d8d8" stroke-width="1.1"/>
<line x1="627.7" y1="367.3" x2="632.9" y2="362.1" stroke="#d8d8d8" stroke-width="1.1"/>
<line x1="661.3" y1="367.3" x2="656.1" y2="362.1" stroke="#d8d8d8" stroke-width="1.1"/>
<polygon points="1291.8,327.1 1315.1,350.4 1291.8,373.7 1268.5,350.4" fill="#fbfbfb" stroke="none" stroke-width="0"/>
<polygon points="1270.5,350.4 1280.1,340.8 1290.3,350.4 1280.1,360" fill="#e6ee14" stroke="none" stroke-width="0" opacity="0.9"/>
<polygon points="1313.1,350.4 1303.5,340.8 1293.3,350.4 1303.5,360" fill="#e6ee14" stroke="none" stroke-width="0" opacity="0.9"/>
<path d="M1272.5,346.9L1288.8,353.9M1272.5,353.9L1288.8,346.9M1311.1,346.9L1294.8,353.9M1311.1,353.9L1294.8,346.9" stroke="#ffffff" stroke-width="1.6" fill="none" opacity="0.45"/>
<line x1="1275" y1="333.6" x2="1280.1" y2="338.8" stroke="#d8d8d8" stroke-width="1.1"/>
<line x1="1308.6" y1="333.6" x2="1303.5" y2="338.8" stroke="#d8d8d8" stroke-width="1.1"/>
<line x1="1275" y1="367.2" x2="1280.1" y2="362" stroke="#d8d8d8" stroke-width="1.1"/>
<line x1="1308.6" y1="367.2" x2="1303.5" y2="362" stroke="#d8d8d8" stroke-width="1.1"/>
<polygon points="1940,327 1963.3,350.3 1940,373.6 1916.7,350.3" fill="#fbfbfb" stroke="none" stroke-width="0"/>
<polygon points="1918.7,350.3 1928.3,340.7 1938.5,350.3 1928.3,359.9" fill="#e6ee14" stroke="none" stroke-width="0" opacity="0.9"/>
<polygon points="1961.3,350.3 1951.7,340.7 1941.5,350.3 1951.7,359.9" fill="#e6ee14" stroke="none" stroke-width="0" opacity="0.9"/>
<path d="M1920.7,346.8L1937,353.8M1920.7,353.8L1937,346.8M1959.3,346.8L1943,353.8M1959.3,353.8L1943,346.8" stroke="#ffffff" stroke-width="1.6" fill="none" opacity="0.45"/>
<line x1="1923.2" y1="333.5" x2="1928.3" y2="338.7" stroke="#d8d8d8" stroke-width="1.1"/>
<line x1="1956.8" y1="333.5" x2="1951.7" y2="338.7" stroke="#d8d8d8" stroke-width="1.1"/>
<line x1="1923.2" y1="367.1" x2="1928.3" y2="361.9" stroke="#d8d8d8" stroke-width="1.1"/>
<line x1="1956.8" y1="367.1" x2="1951.7" y2="361.9" stroke="#d8d8d8" stroke-width="1.1"/>
<polygon points="643.8,384.1 667.1,407.4 643.8,430.7 620.5,407.4" fill="#fbfbfb" stroke="none" stroke-width="0"/>
<polygon points="622.5,407.4 632.1,397.8 642.3,407.4 632.1,417" fill="#e6ee14" stroke="none" stroke-width="0" opacity="0.9"/>
<polygon points="665.1,407.4 655.4,397.8 645.3,407.4 655.4,417" fill="#e6ee14" stroke="none" stroke-width="0" opacity="0.9"/>
<path d="M624.5,403.9L640.8,410.9M624.5,410.9L640.8,403.9M663.1,403.9L646.8,410.9M663.1,410.9L646.8,403.9" stroke="#ffffff" stroke-width="1.6" fill="none" opacity="0.45"/>
<line x1="627" y1="390.6" x2="632.1" y2="395.8" stroke="#d8d8d8" stroke-width="1.1"/>
<line x1="660.6" y1="390.6" x2="655.4" y2="395.8" stroke="#d8d8d8" stroke-width="1.1"/>
<line x1="627" y1="424.2" x2="632.1" y2="419" stroke="#d8d8d8" stroke-width="1.1"/>
<line x1="660.6" y1="424.2" x2="655.4" y2="419" stroke="#d8d8d8" stroke-width="1.1"/>
<polygon points="1291.8,383.6 1315.1,406.9 1291.8,430.2 1268.5,406.9" fill="#fbfbfb" stroke="none" stroke-width="0"/>
<polygon points="1270.5,406.9 1280.1,397.2 1290.3,406.9 1280.1,416.5" fill="#e6ee14" stroke="none" stroke-width="0" opacity="0.9"/>
<polygon points="1313.1,406.9 1303.5,397.2 1293.3,406.9 1303.5,416.5" fill="#e6ee14" stroke="none" stroke-width="0" opacity="0.9"/>
<path d="M1272.5,403.4L1288.8,410.4M1272.5,410.4L1288.8,403.4M1311.1,403.4L1294.8,410.4M1311.1,410.4L1294.8,403.4" stroke="#ffffff" stroke-width="1.6" fill="none" opacity="0.45"/>
<line x1="1275" y1="390.1" x2="1280.1" y2="395.2" stroke="#d8d8d8" stroke-width="1.1"/>
<line x1="1308.6" y1="390.1" x2="1303.5" y2="395.2" stroke="#d8d8d8" stroke-width="1.1"/>
<line x1="1275" y1="423.7" x2="1280.1" y2="418.5" stroke="#d8d8d8" stroke-width="1.1"/>
<line x1="1308.6" y1="423.7" x2="1303.5" y2="418.5" stroke="#d8d8d8" stroke-width="1.1"/>
<polygon points="1940,384 1963.3,407.3 1940,430.6 1916.7,407.3" fill="#fbfbfb" stroke="none" stroke-width="0"/>
<polygon points="1918.7,407.3 1928.3,397.7 1938.5,407.3 1928.3,416.9" fill="#e6ee14" stroke="none" stroke-width="0" opacity="0.9"/>
<polygon points="1961.3,407.3 1951.7,397.7 1941.5,407.3 1951.7,416.9" fill="#e6ee14" stroke="none" stroke-width="0" opacity="0.9"/>
<path d="M1920.7,403.8L1937,410.8M1920.7,410.8L1937,403.8M1959.3,403.8L1943,410.8M1959.3,410.8L1943,403.8" stroke="#ffffff" stroke-width="1.6" fill="none" opacity="0.45"/>
<line x1="1923.2" y1="390.5" x2="1928.3" y2="395.7" stroke="#d8d8d8" stroke-width="1.1"/>
<line x1="1956.8" y1="390.5" x2="1951.7" y2="395.7" stroke="#d8d8d8" stroke-width="1.1"/>
<line x1="1923.2" y1="424.1" x2="1928.3" y2="418.9" stroke="#d8d8d8" stroke-width="1.1"/>
<line x1="1956.8" y1="424.1" x2="1951.7" y2="418.9" stroke="#d8d8d8" stroke-width="1.1"/>
<polygon points="643.9,718 667.2,741.3 643.9,764.6 620.6,741.3" fill="#fbfbfb" stroke="none" stroke-width="0"/>
<polygon points="622.6,741.3 632.2,731.6 642.4,741.3 632.2,750.9" fill="#e6ee14" stroke="none" stroke-width="0" opacity="0.9"/>
<polygon points="665.2,741.3 655.5,731.6 645.4,741.3 655.5,750.9" fill="#e6ee14" stroke="none" stroke-width="0" opacity="0.9"/>
<path d="M624.6,737.8L640.9,744.8M624.6,744.8L640.9,737.8M663.2,737.8L646.9,744.8M663.2,744.8L646.9,737.8" stroke="#ffffff" stroke-width="1.6" fill="none" opacity="0.45"/>
<line x1="627.1" y1="724.5" x2="632.2" y2="729.6" stroke="#d8d8d8" stroke-width="1.1"/>
<line x1="660.7" y1="724.5" x2="655.5" y2="729.6" stroke="#d8d8d8" stroke-width="1.1"/>
<line x1="627.1" y1="758.1" x2="632.2" y2="752.9" stroke="#d8d8d8" stroke-width="1.1"/>
<line x1="660.7" y1="758.1" x2="655.5" y2="752.9" stroke="#d8d8d8" stroke-width="1.1"/>
<polygon points="1291.8,717.7 1315.1,741 1291.8,764.3 1268.5,741" fill="#fbfbfb" stroke="none" stroke-width="0"/>
<polygon points="1270.5,741 1280.1,731.4 1290.3,741 1280.1,750.6" fill="#e6ee14" stroke="none" stroke-width="0" opacity="0.9"/>
<polygon points="1313.1,741 1303.5,731.4 1293.3,741 1303.5,750.6" fill="#e6ee14" stroke="none" stroke-width="0" opacity="0.9"/>
<path d="M1272.5,737.5L1288.8,744.5M1272.5,744.5L1288.8,737.5M1311.1,737.5L1294.8,744.5M1311.1,744.5L1294.8,737.5" stroke="#ffffff" stroke-width="1.6" fill="none" opacity="0.45"/>
<line x1="1275" y1="724.2" x2="1280.1" y2="729.4" stroke="#d8d8d8" stroke-width="1.1"/>
<line x1="1308.6" y1="724.2" x2="1303.5" y2="729.4" stroke="#d8d8d8" stroke-width="1.1"/>
<line x1="1275" y1="757.8" x2="1280.1" y2="752.6" stroke="#d8d8d8" stroke-width="1.1"/>
<line x1="1308.6" y1="757.8" x2="1303.5" y2="752.6" stroke="#d8d8d8" stroke-width="1.1"/>
<polygon points="1940,717.4 1963.3,740.7 1940,764 1916.7,740.7" fill="#fbfbfb" stroke="none" stroke-width="0"/>
<polygon points="1918.7,740.7 1928.3,731.1 1938.5,740.7 1928.3,750.4" fill="#e6ee14" stroke="none" stroke-width="0" opacity="0.9"/>
<polygon points="1961.3,740.7 1951.7,731.1 1941.5,740.7 1951.7,750.4" fill="#e6ee14" stroke="none" stroke-width="0" opacity="0.9"/>
<path d="M1920.7,737.2L1937,744.2M1920.7,744.2L1937,737.2M1959.3,737.2L1943,744.2M1959.3,744.2L1943,737.2" stroke="#ffffff" stroke-width="1.6" fill="none" opacity="0.45"/>
<line x1="1923.2" y1="723.9" x2="1928.3" y2="729.1" stroke="#d8d8d8" stroke-width="1.1"/>
<line x1="1956.8" y1="723.9" x2="1951.7" y2="729.1" stroke="#d8d8d8" stroke-width="1.1"/>
<line x1="1923.2" y1="757.5" x2="1928.3" y2="752.4" stroke="#d8d8d8" stroke-width="1.1"/>
<line x1="1956.8" y1="757.5" x2="1951.7" y2="752.4" stroke="#d8d8d8" stroke-width="1.1"/>
<polygon points="484.4,1069 507.7,1092.3 484.4,1115.6 461.1,1092.3" fill="#fbfbfb" stroke="none" stroke-width="0"/>
<polygon points="463.1,1092.3 472.8,1082.6 482.9,1092.3 472.8,1102" fill="#e6ee14" stroke="none" stroke-width="0" opacity="0.9"/>
<polygon points="505.7,1092.3 496,1082.6 485.9,1092.3 496,1102" fill="#e6ee14" stroke="none" stroke-width="0" opacity="0.9"/>
<path d="M465.1,1088.8L481.4,1095.8M465.1,1095.8L481.4,1088.8M503.7,1088.8L487.4,1095.8M503.7,1095.8L487.4,1088.8" stroke="#ffffff" stroke-width="1.6" fill="none" opacity="0.45"/>
<line x1="467.6" y1="1075.5" x2="472.8" y2="1080.6" stroke="#d8d8d8" stroke-width="1.1"/>
<line x1="501.2" y1="1075.5" x2="496" y2="1080.6" stroke="#d8d8d8" stroke-width="1.1"/>
<line x1="467.6" y1="1109.1" x2="472.8" y2="1104" stroke="#d8d8d8" stroke-width="1.1"/>
<line x1="501.2" y1="1109.1" x2="496" y2="1104" stroke="#d8d8d8" stroke-width="1.1"/>
<line x1="92" y1="351" x2="497.5" y2="351" stroke="#e02a2a" stroke-width="1.5"/>
<line x1="104" y1="351" x2="104" y2="1091.7" stroke="#e02a2a" stroke-width="1.5"/>
<polygon points="104,352 101.8,362 106.2,362" fill="#e02a2a" stroke="none" stroke-width="0"/>
<polygon points="104,1090.7 101.8,1080.7 106.2,1080.7" fill="#e02a2a" stroke="none" stroke-width="0"/>
<line x1="96" y1="1091.7" x2="116" y2="1091.7" stroke="#e02a2a" stroke-width="1.2" stroke-dasharray="6 4"/>
<line x1="158.1" y1="406.1" x2="497.5" y2="406.1" stroke="#e02a2a" stroke-width="1.5"/>
<line x1="170.2" y1="406.1" x2="170.2" y2="1091.7" stroke="#e02a2a" stroke-width="1.5"/>
<polygon points="170.2,407.1 168,417.1 172.4,417.1" fill="#e02a2a" stroke="none" stroke-width="0"/>
<polygon points="170.2,1090.7 168,1080.7 172.4,1080.7" fill="#e02a2a" stroke="none" stroke-width="0"/>
<line x1="162.2" y1="1091.7" x2="182.2" y2="1091.7" stroke="#e02a2a" stroke-width="1.2" stroke-dasharray="6 4"/>
<line x1="225.3" y1="463" x2="549" y2="463" stroke="#e02a2a" stroke-width="1.5"/>
<line x1="236.3" y1="463" x2="236.3" y2="1091.7" stroke="#e02a2a" stroke-width="1.5"/>
<polygon points="236.3,464 234.1,474 238.5,474" fill="#e02a2a" stroke="none" stroke-width="0"/>
<polygon points="236.3,1090.7 234.1,1080.7 238.5,1080.7" fill="#e02a2a" stroke="none" stroke-width="0"/>
<line x1="228.3" y1="1091.7" x2="248.3" y2="1091.7" stroke="#e02a2a" stroke-width="1.2" stroke-dasharray="6 4"/>
<line x1="290.7" y1="740.8" x2="498" y2="740.8" stroke="#e02a2a" stroke-width="1.5"/>
<line x1="302.4" y1="740.8" x2="302.4" y2="1091.7" stroke="#e02a2a" stroke-width="1.5"/>
<polygon points="302.4,741.8 300.2,751.8 304.6,751.8" fill="#e02a2a" stroke="none" stroke-width="0"/>
<polygon points="302.4,1090.7 300.2,1080.7 304.6,1080.7" fill="#e02a2a" stroke="none" stroke-width="0"/>
<line x1="294.4" y1="1091.7" x2="314.4" y2="1091.7" stroke="#e02a2a" stroke-width="1.2" stroke-dasharray="6 4"/>
<line x1="356.8" y1="826.9" x2="549.5" y2="826.9" stroke="#e02a2a" stroke-width="1.5"/>
<line x1="368.5" y1="826.9" x2="368.5" y2="1091.7" stroke="#e02a2a" stroke-width="1.5"/>
<polygon points="368.5,827.9 366.3,837.9 370.7,837.9" fill="#e02a2a" stroke="none" stroke-width="0"/>
<polygon points="368.5,1090.7 366.3,1080.7 370.7,1080.7" fill="#e02a2a" stroke="none" stroke-width="0"/>
<line x1="360.5" y1="1091.7" x2="380.5" y2="1091.7" stroke="#e02a2a" stroke-width="1.2" stroke-dasharray="6 4"/>
<line x1="422.8" y1="1009.1" x2="458" y2="1009.1" stroke="#e02a2a" stroke-width="1.5"/>
<line x1="434.6" y1="1009.1" x2="434.6" y2="1091.7" stroke="#e02a2a" stroke-width="1.5"/>
<polygon points="434.6,1010.1 432.4,1020.1 436.8,1020.1" fill="#e02a2a" stroke="none" stroke-width="0"/>
<polygon points="434.6,1090.7 432.4,1080.7 436.8,1080.7" fill="#e02a2a" stroke="none" stroke-width="0"/>
<line x1="426.6" y1="1091.7" x2="446.6" y2="1091.7" stroke="#e02a2a" stroke-width="1.2" stroke-dasharray="6 4"/>
<line x1="91.8" y1="1390" x2="549" y2="1390" stroke="#e02a2a" stroke-width="1.5"/>
<line x1="104" y1="1091.7" x2="104" y2="1390" stroke="#e02a2a" stroke-width="1.5"/>
<polygon points="104,1389 101.8,1379 106.2,1379" fill="#e02a2a" stroke="none" stroke-width="0"/>
<polygon points="104,1092.7 101.8,1102.7 106.2,1102.7" fill="#e02a2a" stroke="none" stroke-width="0"/>
<text x="0" y="0" font-size="24" fill="#d03a3a" text-anchor="middle" font-family="Liberation Sans" textLength="46" lengthAdjust="spacingAndGlyphs" stroke="#000" stroke-width="0.8" transform="translate(95,1054) rotate(-90)">11,20</text>
<text x="0" y="0" font-size="24" fill="#d03a3a" text-anchor="middle" font-family="Liberation Sans" textLength="46" lengthAdjust="spacingAndGlyphs" stroke="#000" stroke-width="0.8" transform="translate(161.1,1054) rotate(-90)">10,36</text>
<text x="0" y="0" font-size="24" fill="#d03a3a" text-anchor="middle" font-family="Liberation Sans" textLength="40" lengthAdjust="spacingAndGlyphs" stroke="#000" stroke-width="0.8" transform="translate(227.3,1058) rotate(-90)">9,50</text>
<text x="0" y="0" font-size="24" fill="#d03a3a" text-anchor="middle" font-family="Liberation Sans" textLength="40" lengthAdjust="spacingAndGlyphs" stroke="#000" stroke-width="0.8" transform="translate(293.3,1050) rotate(-90)">5,30</text>
<text x="0" y="0" font-size="24" fill="#d03a3a" text-anchor="middle" font-family="Liberation Sans" textLength="40" lengthAdjust="spacingAndGlyphs" stroke="#000" stroke-width="0.8" transform="translate(359.5,1060) rotate(-90)">4,00</text>
<text x="0" y="0" font-size="24" fill="#d03a3a" text-anchor="middle" font-family="Liberation Sans" textLength="40" lengthAdjust="spacingAndGlyphs" stroke="#000" stroke-width="0.8" transform="translate(425.7,1064) rotate(-90)">1,25</text>
<text x="0" y="0" font-size="24" fill="#d03a3a" text-anchor="middle" font-family="Liberation Sans" textLength="40" lengthAdjust="spacingAndGlyphs" stroke="#000" stroke-width="0.8" transform="translate(95,1242) rotate(-90)">4,50</text>
<line x1="1291.8" y1="826" x2="0" y2="1650.8" stroke="#44a044" stroke-width="1.2"/>
<line x1="1291.8" y1="826" x2="2560" y2="1635.7" stroke="#44a044" stroke-width="1.2"/>
<path d="M1235.3,862.1 A67,67 0 0 0 1348.3,862.1" stroke="#44a044" stroke-width="1.5" fill="none"/>
<polygon points="1235.3,862.1 1238.3,873.1 1242.8,869.1" fill="#44a044" stroke="none" stroke-width="0"/>
<polygon points="1348.3,862.1 1345.3,873.1 1340.8,869.1" fill="#44a044" stroke="none" stroke-width="0"/>
<text x="1267.6" y="885.9" font-size="23" fill="#48a848" text-anchor="start" font-family="Liberation Sans" textLength="39" lengthAdjust="spacingAndGlyphs" stroke="#000" stroke-width="0.8">115&#176;</text>
<line x1="1295" y1="1124.7" x2="1403" y2="1124.7" stroke="#2c2cc0" stroke-width="1.4"/>
<line x1="1295" y1="1177.5" x2="1469.7" y2="1177.5" stroke="#2c2cc0" stroke-width="1.4"/>
<line x1="1391.6" y1="1067.3" x2="1391.6" y2="1150" stroke="#2c2cc0" stroke-width="1.4"/>
<polygon points="1391.6,1091.5 1389.6,1082.5 1393.6,1082.5" fill="#2c2cc0" stroke="none" stroke-width="0"/>
<polygon points="1391.6,1126 1389.6,1135 1393.6,1135" fill="#2c2cc0" stroke="none" stroke-width="0"/>
<line x1="1386" y1="1091.7" x2="1396" y2="1091.7" stroke="#2c2cc0" stroke-width="1"/>
<line x1="1457" y1="1092" x2="1457" y2="1177.5" stroke="#2c2cc0" stroke-width="1.4"/>
<polygon points="1457,1093 1455,1102 1459,1102" fill="#2c2cc0" stroke="none" stroke-width="0"/>
<polygon points="1457,1176.5 1455,1167.5 1459,1167.5" fill="#2c2cc0" stroke="none" stroke-width="0"/>
<text x="0" y="0" font-size="22" fill="#3434c8" text-anchor="middle" font-family="Liberation Sans" textLength="40" lengthAdjust="spacingAndGlyphs" stroke="#000" stroke-width="0.8" transform="translate(1382.4,1111.5) rotate(-90)">0,50</text>
<text x="0" y="0" font-size="22" fill="#3434c8" text-anchor="middle" font-family="Liberation Sans" textLength="36" lengthAdjust="spacingAndGlyphs" stroke="#000" stroke-width="0.8" transform="translate(1449,1136) rotate(-90)">1,30</text>
<line x1="1905" y1="1151" x2="2143.7" y2="1151" stroke="#2c2cc0" stroke-width="1.5"/>
<line x1="1960" y1="1175.1" x2="2208.4" y2="1175.1" stroke="#2c2cc0" stroke-width="1.5"/>
<line x1="1960" y1="1210.9" x2="2275.3" y2="1210.9" stroke="#2c2cc0" stroke-width="1.5"/>
<line x1="1887" y1="1223.4" x2="2342" y2="1223.4" stroke="#2c2cc0" stroke-width="1.5"/>
<line x1="2132.1" y1="1093" x2="2132.1" y2="1151" stroke="#2c2cc0" stroke-width="1.4"/>
<polygon points="2132.1,1094 2130.1,1104 2134.1,1104" fill="#2c2cc0" stroke="none" stroke-width="0"/>
<polygon points="2132.1,1150 2130.1,1140 2134.1,1140" fill="#2c2cc0" stroke="none" stroke-width="0"/>
<line x1="2124.1" y1="1092" x2="2130.1" y2="1092" stroke="#3a3aa0" stroke-width="1.2"/>
<line x1="2198.6" y1="1093" x2="2198.6" y2="1175.1" stroke="#2c2cc0" stroke-width="1.4"/>
<polygon points="2198.6,1094 2196.6,1104 2200.6,1104" fill="#2c2cc0" stroke="none" stroke-width="0"/>
<polygon points="2198.6,1174.1 2196.6,1164.1 2200.6,1164.1" fill="#2c2cc0" stroke="none" stroke-width="0"/>
<line x1="2190.6" y1="1092" x2="2196.6" y2="1092" stroke="#3a3aa0" stroke-width="1.2"/>
<line x1="2264.8" y1="1093" x2="2264.8" y2="1210.9" stroke="#2c2cc0" stroke-width="1.4"/>
<polygon points="2264.8,1094 2262.8,1104 2266.8,1104" fill="#2c2cc0" stroke="none" stroke-width="0"/>
<polygon points="2264.8,1209.9 2262.8,1199.9 2266.8,1199.9" fill="#2c2cc0" stroke="none" stroke-width="0"/>
<line x1="2256.8" y1="1092" x2="2262.8" y2="1092" stroke="#3a3aa0" stroke-width="1.2"/>
<line x1="2330.1" y1="1093" x2="2330.1" y2="1223.4" stroke="#2c2cc0" stroke-width="1.4"/>
<polygon points="2330.1,1094 2328.1,1104 2332.1,1104" fill="#2c2cc0" stroke="none" stroke-width="0"/>
<polygon points="2330.1,1222.4 2328.1,1212.4 2332.1,1212.4" fill="#2c2cc0" stroke="none" stroke-width="0"/>
<line x1="2322.1" y1="1092" x2="2328.1" y2="1092" stroke="#3a3aa0" stroke-width="1.2"/>
<text x="0" y="0" font-size="22" fill="#3434c8" text-anchor="middle" font-family="Liberation Sans" textLength="41" lengthAdjust="spacingAndGlyphs" stroke="#000" stroke-width="0.8" transform="translate(2121,1123.6) rotate(-90)">0,90</text>
<text x="0" y="0" font-size="22" fill="#3434c8" text-anchor="middle" font-family="Liberation Sans" textLength="38" lengthAdjust="spacingAndGlyphs" stroke="#000" stroke-width="0.8" transform="translate(2188,1136) rotate(-90)">1,27</text>
<text x="0" y="0" font-size="22" fill="#3434c8" text-anchor="middle" font-family="Liberation Sans" textLength="38" lengthAdjust="spacingAndGlyphs" stroke="#000" stroke-width="0.8" transform="translate(2254.8,1142.8) rotate(-90)">1,80</text>
<text x="0" y="0" font-size="22" fill="#3434c8" text-anchor="middle" font-family="Liberation Sans" textLength="41" lengthAdjust="spacingAndGlyphs" stroke="#000" stroke-width="0.8" transform="translate(2321.7,1144.5) rotate(-90)">2,00</text>
<line x1="1887.2" y1="1128" x2="1887.2" y2="1535" stroke="#2c2cc0" stroke-width="1.5"/>
<line x1="1960" y1="1150" x2="1960" y2="1595.6" stroke="#2c2cc0" stroke-width="1.5"/>
<line x1="1295.8" y1="1524.5" x2="1887.2" y2="1524.5" stroke="#2c2cc0" stroke-width="1.6"/>
<polygon points="1295.8,1524.5 1307,1522.3 1307,1526.7" fill="#2c2cc0" stroke="none" stroke-width="0"/>
<polygon points="1887.2,1524.5 1876,1522.3 1876,1526.7" fill="#2c2cc0" stroke="none" stroke-width="0"/>
<line x1="1293.9" y1="1584.8" x2="1960" y2="1584.8" stroke="#2c2cc0" stroke-width="1.6"/>
<polygon points="1293.9,1584.8 1305,1582.6 1305,1587" fill="#2c2cc0" stroke="none" stroke-width="0"/>
<polygon points="1960,1584.8 1949,1582.6 1949,1587" fill="#2c2cc0" stroke="none" stroke-width="0"/>
<text x="1307.8" y="1516" font-size="23" fill="#3434c8" text-anchor="start" font-family="Liberation Sans" textLength="41.8" lengthAdjust="spacingAndGlyphs" stroke="#000" stroke-width="0.8">9,00</text>
<text x="1307.2" y="1575.5" font-size="23" fill="#3434c8" text-anchor="start" font-family="Liberation Sans" textLength="44.8" lengthAdjust="spacingAndGlyphs" stroke="#000" stroke-width="0.8">10,10</text>
<line x1="1291.5" y1="1505" x2="1291.5" y2="1520" stroke="#2a2a90" stroke-width="1.1"/>
<line x1="1291.5" y1="1565" x2="1291.5" y2="1580" stroke="#2a2a90" stroke-width="1.1"/>
<line x1="643.8" y1="1367" x2="643.8" y2="1597.7" stroke="#e02a2a" stroke-width="1.5"/>
<line x1="643.8" y1="1584.8" x2="1290" y2="1584.8" stroke="#e02a2a" stroke-width="1.6"/>
<polygon points="643.8,1584.8 655,1582.6 655,1587" fill="#e02a2a" stroke="none" stroke-width="0"/>
<polygon points="1290,1584.8 1279,1582.6 1279,1587" fill="#e02a2a" stroke="none" stroke-width="0"/>
<text x="1228.7" y="1575.5" font-size="23" fill="#d03a3a" text-anchor="start" font-family="Liberation Sans" textLength="41.8" lengthAdjust="spacingAndGlyphs" stroke="#000" stroke-width="0.8">9,80</text>
<text x="661.9" y="314.6" font-size="14" fill="#f4f4f4" text-anchor="start" font-family="Liberation Sans" textLength="15.6" lengthAdjust="spacingAndGlyphs" stroke="#000" stroke-width="0.3">K1</text>
<text x="661.9" y="329" font-size="14" fill="#f4f4f4" text-anchor="start" font-family="Liberation Sans" textLength="54.5" lengthAdjust="spacingAndGlyphs" stroke="#000" stroke-width="0.3">180 daN</text>
<text x="1310.6" y="314.6" font-size="14" fill="#f4f4f4" text-anchor="start" font-family="Liberation Sans" textLength="15.6" lengthAdjust="spacingAndGlyphs" stroke="#000" stroke-width="0.3">K2</text>
<text x="1310.6" y="329" font-size="14" fill="#f4f4f4" text-anchor="start" font-family="Liberation Sans" textLength="54.5" lengthAdjust="spacingAndGlyphs" stroke="#000" stroke-width="0.3">220 daN</text>
<text x="1957.8" y="314.6" font-size="14" fill="#f4f4f4" text-anchor="start" font-family="Liberation Sans" textLength="15.6" lengthAdjust="spacingAndGlyphs" stroke="#000" stroke-width="0.3">K3</text>
<text x="1957.8" y="329" font-size="14" fill="#f4f4f4" text-anchor="start" font-family="Liberation Sans" textLength="54.5" lengthAdjust="spacingAndGlyphs" stroke="#000" stroke-width="0.3">180 daN</text>
<text x="665.6" y="378.4" font-size="14" fill="#f4f4f4" text-anchor="start" font-family="Liberation Sans" textLength="15.6" lengthAdjust="spacingAndGlyphs" stroke="#000" stroke-width="0.3">B4</text>
<text x="665.6" y="392.8" font-size="14" fill="#f4f4f4" text-anchor="start" font-family="Liberation Sans" textLength="54.5" lengthAdjust="spacingAndGlyphs" stroke="#000" stroke-width="0.3">160 daN</text>
<text x="1318.5" y="379.2" font-size="14" fill="#f4f4f4" text-anchor="start" font-family="Liberation Sans" textLength="15.6" lengthAdjust="spacingAndGlyphs" stroke="#000" stroke-width="0.3">B5</text>
<text x="1318.5" y="393.6" font-size="14" fill="#f4f4f4" text-anchor="start" font-family="Liberation Sans" textLength="54.5" lengthAdjust="spacingAndGlyphs" stroke="#000" stroke-width="0.3">200 daN</text>
<text x="1966.6" y="378.9" font-size="14" fill="#f4f4f4" text-anchor="start" font-family="Liberation Sans" textLength="15.6" lengthAdjust="spacingAndGlyphs" stroke="#000" stroke-width="0.3">B6</text>
<text x="1966.6" y="393.3" font-size="14" fill="#f4f4f4" text-anchor="start" font-family="Liberation Sans" textLength="54.5" lengthAdjust="spacingAndGlyphs" stroke="#000" stroke-width="0.3">160 daN</text>
<text x="662" y="495.6" font-size="14" fill="#f4f4f4" text-anchor="start" font-family="Liberation Sans" textLength="23.4" lengthAdjust="spacingAndGlyphs" stroke="#000" stroke-width="0.3">L10</text>
<text x="662" y="510" font-size="14" fill="#f4f4f4" text-anchor="start" font-family="Liberation Sans" textLength="54.5" lengthAdjust="spacingAndGlyphs" stroke="#000" stroke-width="0.3">193 daN</text>
<text x="1310.6" y="499.4" font-size="14" fill="#f4f4f4" text-anchor="start" font-family="Liberation Sans" textLength="23.4" lengthAdjust="spacingAndGlyphs" stroke="#000" stroke-width="0.3">L11</text>
<text x="1310.6" y="513.8" font-size="14" fill="#f4f4f4" text-anchor="start" font-family="Liberation Sans" textLength="54.5" lengthAdjust="spacingAndGlyphs" stroke="#000" stroke-width="0.3">470 daN</text>
<text x="1958.1" y="497.8" font-size="14" fill="#f4f4f4" text-anchor="start" font-family="Liberation Sans" textLength="23.4" lengthAdjust="spacingAndGlyphs" stroke="#000" stroke-width="0.3">L12</text>
<text x="1958.1" y="512.2" font-size="14" fill="#f4f4f4" text-anchor="start" font-family="Liberation Sans" textLength="54.5" lengthAdjust="spacingAndGlyphs" stroke="#000" stroke-width="0.3">193 daN</text>
<text x="662.4" y="704.8" font-size="11" fill="#f4f4f4" text-anchor="start" font-family="Liberation Sans" textLength="19.8" lengthAdjust="spacingAndGlyphs">NOM</text>
<text x="662.4" y="720.3" font-size="11" fill="#f4f4f4" text-anchor="start" font-family="Liberation Sans" textLength="33" lengthAdjust="spacingAndGlyphs">POIDS</text>
<text x="1310.3" y="705.2" font-size="14" fill="#f4f4f4" text-anchor="start" font-family="Liberation Sans" textLength="15.6" lengthAdjust="spacingAndGlyphs" stroke="#000" stroke-width="0.3">B2</text>
<text x="1310.3" y="719.6" font-size="14" fill="#f4f4f4" text-anchor="start" font-family="Liberation Sans" textLength="54.5" lengthAdjust="spacingAndGlyphs" stroke="#000" stroke-width="0.3">200 daN</text>
<text x="1957.8" y="704.6" font-size="14" fill="#f4f4f4" text-anchor="start" font-family="Liberation Sans" textLength="15.6" lengthAdjust="spacingAndGlyphs" stroke="#000" stroke-width="0.3">B3</text>
<text x="1957.8" y="719" font-size="14" fill="#f4f4f4" text-anchor="start" font-family="Liberation Sans" textLength="54.5" lengthAdjust="spacingAndGlyphs" stroke="#000" stroke-width="0.3">160 daN</text>
<text x="662.1" y="790.4" font-size="14" fill="#f4f4f4" text-anchor="start" font-family="Liberation Sans" textLength="15.6" lengthAdjust="spacingAndGlyphs" stroke="#000" stroke-width="0.3">L7</text>
<text x="662.1" y="804.8" font-size="14" fill="#f4f4f4" text-anchor="start" font-family="Liberation Sans" textLength="54.5" lengthAdjust="spacingAndGlyphs" stroke="#000" stroke-width="0.3">198 daN</text>
<text x="1310.3" y="791.2" font-size="14" fill="#f4f4f4" text-anchor="start" font-family="Liberation Sans" textLength="15.6" lengthAdjust="spacingAndGlyphs" stroke="#000" stroke-width="0.3">L8</text>
<text x="1310.3" y="805.6" font-size="14" fill="#f4f4f4" text-anchor="start" font-family="Liberation Sans" textLength="54.5" lengthAdjust="spacingAndGlyphs" stroke="#000" stroke-width="0.3">490 daN</text>
<text x="1957.8" y="790.9" font-size="14" fill="#f4f4f4" text-anchor="start" font-family="Liberation Sans" textLength="15.6" lengthAdjust="spacingAndGlyphs" stroke="#000" stroke-width="0.3">L9</text>
<text x="1957.8" y="805.3" font-size="14" fill="#f4f4f4" text-anchor="start" font-family="Liberation Sans" textLength="54.5" lengthAdjust="spacingAndGlyphs" stroke="#000" stroke-width="0.3">198 daN</text>
<text x="661.5" y="972.9" font-size="14" fill="#f4f4f4" text-anchor="start" font-family="Liberation Sans" textLength="15.6" lengthAdjust="spacingAndGlyphs" stroke="#000" stroke-width="0.3">L4</text>
<text x="661.5" y="987.3" font-size="14" fill="#f4f4f4" text-anchor="start" font-family="Liberation Sans" textLength="54.5" lengthAdjust="spacingAndGlyphs" stroke="#000" stroke-width="0.3">235 daN</text>
<text x="1310.1" y="973.2" font-size="14" fill="#f4f4f4" text-anchor="start" font-family="Liberation Sans" textLength="15.6" lengthAdjust="spacingAndGlyphs" stroke="#000" stroke-width="0.3">L5</text>
<text x="1310.1" y="987.6" font-size="14" fill="#f4f4f4" text-anchor="start" font-family="Liberation Sans" textLength="54.5" lengthAdjust="spacingAndGlyphs" stroke="#000" stroke-width="0.3">700 daN</text>
<text x="1957.8" y="972.4" font-size="14" fill="#f4f4f4" text-anchor="start" font-family="Liberation Sans" textLength="15.6" lengthAdjust="spacingAndGlyphs" stroke="#000" stroke-width="0.3">L6</text>
<text x="1957.8" y="986.8" font-size="14" fill="#f4f4f4" text-anchor="start" font-family="Liberation Sans" textLength="54.5" lengthAdjust="spacingAndGlyphs" stroke="#000" stroke-width="0.3">235 daN</text>
<text x="503" y="1075.7" font-size="14" fill="#f4f4f4" text-anchor="start" font-family="Liberation Sans" textLength="23.4" lengthAdjust="spacingAndGlyphs" stroke="#000" stroke-width="0.3">Cp1</text>
<text x="503" y="1090.1" font-size="14" fill="#f4f4f4" text-anchor="start" font-family="Liberation Sans" textLength="54.5" lengthAdjust="spacingAndGlyphs" stroke="#000" stroke-width="0.3">100 daN</text>
<text x="661.3" y="1353.9" font-size="14" fill="#f4f4f4" text-anchor="start" font-family="Liberation Sans" textLength="15.6" lengthAdjust="spacingAndGlyphs" stroke="#000" stroke-width="0.3">L1</text>
<text x="661.3" y="1368.3" font-size="14" fill="#f4f4f4" text-anchor="start" font-family="Liberation Sans" textLength="47.5" lengthAdjust="spacingAndGlyphs" stroke="#000" stroke-width="0.3">291daN</text>
<text x="1310.3" y="1353.4" font-size="14" fill="#f4f4f4" text-anchor="start" font-family="Liberation Sans" textLength="15.6" lengthAdjust="spacingAndGlyphs" stroke="#000" stroke-width="0.3">L2</text>
<text x="1310.3" y="1367.8" font-size="14" fill="#f4f4f4" text-anchor="start" font-family="Liberation Sans" textLength="54.5" lengthAdjust="spacingAndGlyphs" stroke="#000" stroke-width="0.3">564 daN</text>
<text x="1958.1" y="1353.3" font-size="14" fill="#f4f4f4" text-anchor="start" font-family="Liberation Sans" textLength="15.6" lengthAdjust="spacingAndGlyphs" stroke="#000" stroke-width="0.3">L3</text>
<text x="1958.1" y="1367.7" font-size="14" fill="#f4f4f4" text-anchor="start" font-family="Liberation Sans" textLength="54.5" lengthAdjust="spacingAndGlyphs" stroke="#000" stroke-width="0.3">291 daN</text>
<text x="1211.4" y="1107.7" font-size="14" fill="#f4f4f4" text-anchor="start" font-family="Liberation Sans" textLength="23.4" lengthAdjust="spacingAndGlyphs" stroke="#000" stroke-width="0.3">S10</text>
<text x="1211.4" y="1122.1" font-size="14" fill="#f4f4f4" text-anchor="start" font-family="Liberation Sans" textLength="54.5" lengthAdjust="spacingAndGlyphs" stroke="#000" stroke-width="0.3">120 daN</text>
<text x="1211.4" y="1161.7" font-size="14" fill="#f4f4f4" text-anchor="start" font-family="Liberation Sans" textLength="15.6" lengthAdjust="spacingAndGlyphs" stroke="#000" stroke-width="0.3">S9</text>
<text x="1211.4" y="1176.1" font-size="14" fill="#f4f4f4" text-anchor="start" font-family="Liberation Sans" textLength="54.5" lengthAdjust="spacingAndGlyphs" stroke="#000" stroke-width="0.3">120 daN</text>
<text x="715.5" y="1135.4" font-size="14" fill="#f4f4f4" text-anchor="start" font-family="Liberation Sans" textLength="15.6" lengthAdjust="spacingAndGlyphs" stroke="#000" stroke-width="0.3">S2</text>
<text x="715.5" y="1149.8" font-size="14" fill="#f4f4f4" text-anchor="start" font-family="Liberation Sans" textLength="54.5" lengthAdjust="spacingAndGlyphs" stroke="#000" stroke-width="0.3">510 daN</text>
<text x="642.6" y="1159.6" font-size="14" fill="#f4f4f4" text-anchor="start" font-family="Liberation Sans" textLength="15.6" lengthAdjust="spacingAndGlyphs" stroke="#000" stroke-width="0.3">S6</text>
<text x="642.6" y="1174" font-size="14" fill="#f4f4f4" text-anchor="start" font-family="Liberation Sans" textLength="54.5" lengthAdjust="spacingAndGlyphs" stroke="#000" stroke-width="0.3">300 daN</text>
<text x="642.6" y="1195.1" font-size="14" fill="#f4f4f4" text-anchor="start" font-family="Liberation Sans" textLength="15.6" lengthAdjust="spacingAndGlyphs" stroke="#000" stroke-width="0.3">S5</text>
<text x="642.6" y="1209.5" font-size="14" fill="#f4f4f4" text-anchor="start" font-family="Liberation Sans" textLength="54.5" lengthAdjust="spacingAndGlyphs" stroke="#000" stroke-width="0.3">300 daN</text>
<text x="715.5" y="1209.2" font-size="14" fill="#f4f4f4" text-anchor="start" font-family="Liberation Sans" textLength="15.6" lengthAdjust="spacingAndGlyphs" stroke="#000" stroke-width="0.3">S1</text>
<text x="715.5" y="1223.6" font-size="14" fill="#f4f4f4" text-anchor="start" font-family="Liberation Sans" textLength="54.5" lengthAdjust="spacingAndGlyphs" stroke="#000" stroke-width="0.3">710 daN</text>
<text x="1905.8" y="1135.2" font-size="14" fill="#f4f4f4" text-anchor="start" font-family="Liberation Sans" textLength="15.6" lengthAdjust="spacingAndGlyphs" stroke="#000" stroke-width="0.3">S4</text>
<text x="1905.8" y="1149.6" font-size="14" fill="#f4f4f4" text-anchor="start" font-family="Liberation Sans" textLength="54.5" lengthAdjust="spacingAndGlyphs" stroke="#000" stroke-width="0.3">510 daN</text>
<text x="1978.2" y="1159.4" font-size="14" fill="#f4f4f4" text-anchor="start" font-family="Liberation Sans" textLength="15.6" lengthAdjust="spacingAndGlyphs" stroke="#000" stroke-width="0.3">S8</text>
<text x="1978.2" y="1173.8" font-size="14" fill="#f4f4f4" text-anchor="start" font-family="Liberation Sans" textLength="54.5" lengthAdjust="spacingAndGlyphs" stroke="#000" stroke-width="0.3">300 daN</text>
<text x="1978.2" y="1194.4" font-size="14" fill="#f4f4f4" text-anchor="start" font-family="Liberation Sans" textLength="15.6" lengthAdjust="spacingAndGlyphs" stroke="#000" stroke-width="0.3">S7</text>
<text x="1978.2" y="1208.8" font-size="14" fill="#f4f4f4" text-anchor="start" font-family="Liberation Sans" textLength="54.5" lengthAdjust="spacingAndGlyphs" stroke="#000" stroke-width="0.3">300 daN</text>
<text x="1905.8" y="1207.4" font-size="14" fill="#f4f4f4" text-anchor="start" font-family="Liberation Sans" textLength="15.6" lengthAdjust="spacingAndGlyphs" stroke="#000" stroke-width="0.3">S3</text>
<text x="1905.8" y="1221.8" font-size="14" fill="#f4f4f4" text-anchor="start" font-family="Liberation Sans" textLength="54.5" lengthAdjust="spacingAndGlyphs" stroke="#000" stroke-width="0.3">710 daN</text>
<rect x="2147.2" y="328.3" width="108.5" height="45.8" fill="#ffffff" stroke="none" stroke-width="0"/>
<text x="2156" y="360.7" font-size="26" fill="#9c9c9c" text-anchor="start" font-family="Liberation Sans" textLength="90.4" lengthAdjust="spacingAndGlyphs" stroke="#fff" stroke-width="0.9">Kabuki</text>
<rect x="2147.2" y="384.6" width="265.8" height="45" fill="#ffffff" stroke="none" stroke-width="0"/>
<text x="2125" y="417.4" font-size="26" fill="#9c9c9c" text-anchor="start" font-family="Liberation Sans" textLength="306.8" lengthAdjust="spacingAndGlyphs" stroke="#fff" stroke-width="0.9" clip-path="url(#ci1)">Border + Blackdrop 2</text>
<text x="2125" y="417.4" font-size="26" fill="#9a9a9a" text-anchor="start" font-family="Liberation Sans" textLength="306.8" lengthAdjust="spacingAndGlyphs" stroke="#000" stroke-width="0.9" clip-path="url(#cl1)">Border + Blackdrop 2</text>
<rect x="2147.2" y="440" width="64.8" height="46.2" fill="#ffffff" stroke="none" stroke-width="0"/>
<text x="2157" y="473.7" font-size="26" fill="#9c9c9c" text-anchor="start" font-family="Liberation Sans" textLength="41.4" lengthAdjust="spacingAndGlyphs" stroke="#fff" stroke-width="0.9">LX3</text>
<rect x="2147.2" y="718.6" width="265.8" height="45.5" fill="#ffffff" stroke="none" stroke-width="0"/>
<text x="2127" y="751.4" font-size="26" fill="#9c9c9c" text-anchor="start" font-family="Liberation Sans" textLength="305.2" lengthAdjust="spacingAndGlyphs" stroke="#fff" stroke-width="0.9" clip-path="url(#ci3)">Border + Blackdrop 1</text>
<text x="2127" y="751.4" font-size="26" fill="#9a9a9a" text-anchor="start" font-family="Liberation Sans" textLength="305.2" lengthAdjust="spacingAndGlyphs" stroke="#000" stroke-width="0.9" clip-path="url(#cl3)">Border + Blackdrop 1</text>
<rect x="2147.2" y="804.5" width="64.8" height="45.5" fill="#ffffff" stroke="none" stroke-width="0"/>
<text x="2157.3" y="837.9" font-size="26" fill="#9c9c9c" text-anchor="start" font-family="Liberation Sans" textLength="41" lengthAdjust="spacingAndGlyphs" stroke="#fff" stroke-width="0.9">LX2</text>
<rect x="2147.2" y="986.1" width="64.8" height="45.6" fill="#ffffff" stroke="none" stroke-width="0"/>
<text x="2157.3" y="1019.5" font-size="26" fill="#9c9c9c" text-anchor="start" font-family="Liberation Sans" textLength="40" lengthAdjust="spacingAndGlyphs" stroke="#fff" stroke-width="0.9">LX1</text>
<rect x="2146.1" y="1367.1" width="65" height="45.1" fill="#ffffff" stroke="none" stroke-width="0"/>
<text x="2155.5" y="1399.5" font-size="26" fill="#9c9c9c" text-anchor="start" font-family="Liberation Sans" textLength="41.7" lengthAdjust="spacingAndGlyphs" stroke="#fff" stroke-width="0.9">LX0</text>
<line x1="2146" y1="1371.4" x2="2212" y2="1413.5" stroke="#44a044" stroke-width="1.5"/>
<text x="2267.5" y="322.8" font-size="24" fill="#c8c8c8" text-anchor="start" font-family="Liberation Sans" textLength="205" lengthAdjust="spacingAndGlyphs" stroke="#000" stroke-width="0.8">Venue backdrop</text>
<text x="2268.2" y="1002.5" font-size="24" fill="#c8c8c8" text-anchor="start" font-family="Liberation Sans" textLength="249.6" lengthAdjust="spacingAndGlyphs" stroke="#000" stroke-width="0.8">Venue side masking</text>
<polygon points="256.8,130 214.3,193.5 299.3,193.5" fill="#f0d21a" stroke="#9c9c9c" stroke-width="17.5" stroke-linejoin="round"/>
<polygon points="256.8,130 214.3,193.5 299.3,193.5" fill="#f0d21a" stroke="#f0d21a" stroke-width="13.5" stroke-linejoin="round"/>
<rect x="207.3" y="204.2" width="99" height="27.6" rx="8.5" fill="#f0d21a" stroke="#9c9c9c" stroke-width="2"/>
<polygon points="250.2,141.2 259.2,139.7 268.2,171.6 258.9,167.8 260,179.6 254.2,191.3 246.6,180.8 249.7,180 244.8,154.4 255.2,160.5" fill="#fafafa" stroke="none" stroke-width="0"/>
<rect x="216.8" y="201.6" width="80" height="2.6" fill="#8c8c8c" stroke="none" stroke-width="0"/>
<text x="256.8" y="215.3" font-size="7" fill="#f6f6f6" text-anchor="middle" font-family="Liberation Sans" font-weight="bold">Lumi&#232;re</text>
<text x="256.8" y="225.3" font-size="7" fill="#f6f6f6" text-anchor="middle" font-family="Liberation Sans" textLength="104" lengthAdjust="spacingAndGlyphs" font-weight="bold">Power Lock  400  A  Tetra</text>
<polygon points="368.8,130 326.3,193.5 411.3,193.5" fill="#f0d21a" stroke="#9c9c9c" stroke-width="17.5" stroke-linejoin="round"/>
<polygon points="368.8,130 326.3,193.5 411.3,193.5" fill="#f0d21a" stroke="#f0d21a" stroke-width="13.5" stroke-linejoin="round"/>
<rect x="319.3" y="204.2" width="99" height="27.6" rx="8.5" fill="#f0d21a" stroke="#9c9c9c" stroke-width="2"/>
<polygon points="362.2,141.2 371.2,139.7 380.2,171.6 370.9,167.8 372,179.6 366.2,191.3 358.6,180.8 361.7,180 356.8,154.4 367.2,160.5" fill="#fafafa" stroke="none" stroke-width="0"/>
<rect x="328.8" y="201.6" width="80" height="2.6" fill="#8c8c8c" stroke="none" stroke-width="0"/>
<text x="368.8" y="215.3" font-size="7" fill="#f6f6f6" text-anchor="middle" font-family="Liberation Sans" font-weight="bold">Rigging</text>
<text x="368.8" y="225.3" font-size="7" fill="#f6f6f6" text-anchor="middle" font-family="Liberation Sans" textLength="62" lengthAdjust="spacingAndGlyphs" font-weight="bold">P17  32  A  Tetra</text>
<polygon points="2215.5,130 2173,193.5 2258,193.5" fill="#f0d21a" stroke="#9c9c9c" stroke-width="17.5" stroke-linejoin="round"/>
<polygon points="2215.5,130 2173,193.5 2258,193.5" fill="#f0d21a" stroke="#f0d21a" stroke-width="13.5" stroke-linejoin="round"/>
<rect x="2166" y="204.2" width="99" height="27.6" rx="8.5" fill="#f0d21a" stroke="#9c9c9c" stroke-width="2"/>
<polygon points="2211.6,140.3 2222.3,140.6 2217.4,158.6 2227.7,154 2223.1,180 2225.8,180 2216.6,191.5 2213.2,180.8 2216.2,180.8 2218.5,167.8 2204.7,172" fill="#fafafa" stroke="none" stroke-width="0"/>
<rect x="2175.5" y="201.6" width="80" height="2.6" fill="#8c8c8c" stroke="none" stroke-width="0"/>
<text x="2215.5" y="215.3" font-size="7" fill="#f6f6f6" text-anchor="middle" font-family="Liberation Sans" font-weight="bold">Son</text>
<text x="2215.5" y="225.3" font-size="7" fill="#f6f6f6" text-anchor="middle" font-family="Liberation Sans" textLength="56" lengthAdjust="spacingAndGlyphs" font-weight="bold">P17  125A  Tetra</text>
<g>
<rect x="759.6" y="1604.3" width="912.1" height="65.8" fill="#5f5f5f" stroke="#8a8a8a" stroke-width="1.6"/>
<rect x="776.5" y="1621.8" width="13.5" height="13.3" rx="3" fill="none" stroke="#f2f2f2" stroke-width="2.2"/>
<rect x="776.5" y="1639" width="13.5" height="13.5" rx="3" fill="none" stroke="#f2f2f2" stroke-width="2.2"/>
<rect x="793.8" y="1639" width="13.5" height="13.5" rx="3" fill="none" stroke="#f2f2f2" stroke-width="2.2"/>
<rect x="795.3" y="1623.8" width="10" height="10" rx="2.5" fill="none" stroke="#f2f2f2" stroke-width="2.2" transform="rotate(45 800.3 1628.8)"/>
<line x1="837.9" y1="1618" x2="837.9" y2="1656.6" stroke="#7c7c7c" stroke-width="1.5"/>
<text x="853.2" y="1646.6" font-size="23.6" fill="#f4f4f4" text-anchor="start" font-family="Liberation Sans" textLength="218.7" lengthAdjust="spacingAndGlyphs" stroke="#f4f4f4" stroke-width="0.5">Comment Category</text>
<rect x="1089.1" y="1611.2" width="280.2" height="50.3" fill="#5f5f5f" stroke="#0a0a0a" stroke-width="2.2"/>
<rect x="1118.7" y="1620.4" width="24.6" height="24.6" fill="#ee5a0a" stroke="#111" stroke-width="1.8"/>
<text x="1153.2" y="1642.5" font-size="23.3" fill="#f6f6f6" text-anchor="start" font-family="Liberation Sans" textLength="136.7" lengthAdjust="spacingAndGlyphs" stroke="#f6f6f6" stroke-width="0.5">No category</text>
<polygon points="1345.4,1630.7 1361.8,1630.7 1353.6,1641.8" fill="#f6f6f6" stroke="none" stroke-width="0"/>
<line x1="1384.8" y1="1617.7" x2="1384.8" y2="1657" stroke="#7c7c7c" stroke-width="1.5"/>
<path d="M1418,1621 H1428 M1418,1621 V1647 H1445 V1638" stroke="#f2f2f2" stroke-width="2.2" fill="none"/>
<path d="M1413,1626 V1653 H1443 V1648" stroke="#f2f2f2" stroke-width="2.2" fill="none"/>
<path d="M1427,1638 L1441,1623.5 L1445,1627.5 L1431,1642 L1426.5,1643 Z" stroke="#f2f2f2" stroke-width="2" fill="none" stroke-linejoin="round"/>
<path d="M1483.3,1636.7 H1513.3 M1498.3,1621.7 V1651.7" stroke="#f2f2f2" stroke-width="2.2" fill="none"/>
<polygon points="1514.8,1636.7 1507.8,1631.2 1507.8,1642.2" fill="#f2f2f2" stroke="#f2f2f2" stroke-width="1.2" stroke-linejoin="round"/>
<polygon points="1481.8,1636.7 1488.8,1631.2 1488.8,1642.2" fill="#f2f2f2" stroke="#f2f2f2" stroke-width="1.2" stroke-linejoin="round"/>
<polygon points="1498.3,1653.2 1492.8,1646.2 1503.8,1646.2" fill="#f2f2f2" stroke="#f2f2f2" stroke-width="1.2" stroke-linejoin="round"/>
<polygon points="1498.3,1620.2 1492.8,1627.2 1503.8,1627.2" fill="#f2f2f2" stroke="#f2f2f2" stroke-width="1.2" stroke-linejoin="round"/>
<circle cx="1498.3" cy="1636.7" r="3" fill="#f2f2f2"/>
<path d="M1563,1627 V1625 a4.5,4.5 0 0 1 4.5,-4.5 H1580 a4.5,4.5 0 0 1 4.5,4.5 V1642 a4.5,4.5 0 0 1 -4.5,4.5 H1575" stroke="#f2f2f2" stroke-width="2.2" fill="none"/>
<rect x="1552.8" y="1627.3" width="22" height="25.2" rx="4.5" fill="none" stroke="#f2f2f2" stroke-width="2.2"/>
<path d="M1637,1650.6 H1622 V1624 H1626 M1641.3,1624 H1645 V1634.8" stroke="#f2f2f2" stroke-width="2.2" fill="none"/>
<rect x="1626.2" y="1620.4" width="15.1" height="8" rx="1.5" fill="none" stroke="#f2f2f2" stroke-width="2.2"/>
<rect x="1637" y="1634.9" width="17.5" height="17.5" rx="1" fill="none" stroke="#f2f2f2" stroke-width="2.2"/>
</g>
</svg>
</body></html>
